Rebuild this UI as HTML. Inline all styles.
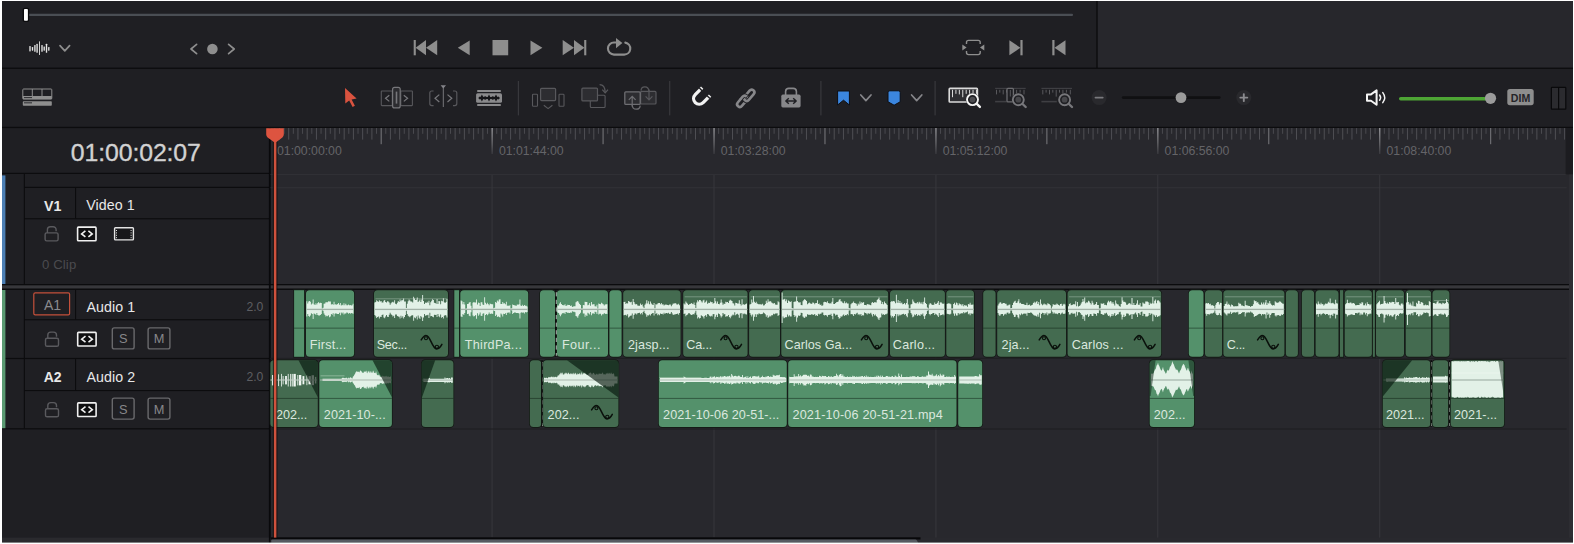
<!DOCTYPE html>
<html lang="en">
<head>
<meta charset="utf-8">
<title>Timeline</title>
<style>
html,body{margin:0;padding:0;background:#ffffff;}
body{width:1574px;height:544px;overflow:hidden;position:relative;font-family:'Liberation Sans', sans-serif;}
svg{position:absolute;left:0;top:0;display:block;}
svg text{font-family:'Liberation Sans', sans-serif;white-space:pre;}
</style>
</head>
<body>
<svg width="1574" height="544" viewBox="0 0 1574 544">
<g id="backgrounds">
<rect x="0" y="0" width="1574" height="544" fill="#ffffff" />
<rect x="2" y="1" width="1571" height="542" fill="#1f1f23" />
<rect x="1097" y="1" width="476" height="67" fill="#27272c" />
<rect x="1096.3" y="1" width="1.4" height="67" fill="#0c0c0e" />
<rect x="2" y="67.6" width="1571" height="1.3" fill="#0c0c0e" />
<rect x="2" y="126.8" width="1571" height="1.3" fill="#0c0c0e" />
</g>
<g id="transport">
<rect x="28" y="13.7" width="1045" height="2.3" rx="1" fill="#4a4e54" />
<rect x="22.6" y="7.8" width="6.6" height="14.2" rx="2" fill="#0b0b0d" />
<rect x="24" y="9.1" width="3.9" height="11.6" rx="0.8" fill="#ffffff" />
<rect x="29.325" y="46.1" width="1.35" height="5.4" rx="0.4" fill="#e6e6e6" />
<rect x="31.825" y="47.1" width="1.35" height="3.6" rx="0.4" fill="#e6e6e6" />
<rect x="34.225" y="45.1" width="1.35" height="6.7" rx="0.4" fill="#e6e6e6" />
<rect x="36.425" y="43.8" width="1.35" height="9" rx="0.4" fill="#e6e6e6" />
<rect x="39.05" y="41.2" width="0.9" height="13.9" rx="0.4" fill="#e6e6e6" />
<rect x="41.325" y="45.1" width="1.35" height="6.7" rx="0.4" fill="#e6e6e6" />
<rect x="43.525" y="46.4" width="1.35" height="4.3" rx="0.4" fill="#e6e6e6" />
<rect x="45.825" y="43.8" width="1.35" height="9" rx="0.4" fill="#e6e6e6" />
<rect x="48.125" y="47.1" width="1.35" height="3.6" rx="0.4" fill="#e6e6e6" />
<path d="M60 45.6 L64.8 50.9 L69.6 45.6" fill="none" stroke="#8e8e8e" stroke-width="1.7" stroke-linecap="round" stroke-linejoin="round"/>
<path d="M196.6 44.4 L191 49 L196.6 53.6" fill="none" stroke="#8e8e8e" stroke-width="1.7" stroke-linecap="round" stroke-linejoin="round"/>
<circle cx="212.4" cy="49" r="5.3" fill="#8e8e8e"/>
<path d="M228.6 44.4 L234.2 49 L228.6 53.6" fill="none" stroke="#8e8e8e" stroke-width="1.7" stroke-linecap="round" stroke-linejoin="round"/>
<rect x="413.7" y="40" width="2.1" height="15.3" fill="#8e8e8e" />
<path d="M426 40 L426 55.3 L415.6 47.65 Z" fill="#8e8e8e" stroke="none" stroke-width="1" />
<path d="M437.2 40 L437.2 55.3 L426 47.65 Z" fill="#8e8e8e" stroke="none" stroke-width="1" />
<path d="M469.7 40.4 L469.7 55.3 L457.8 47.85 Z" fill="#8e8e8e" stroke="none" stroke-width="1" />
<rect x="492.5" y="40" width="15.7" height="15.3" fill="#8e8e8e" />
<path d="M530.5 40.4 L530.5 55.3 L542.4 47.85 Z" fill="#8e8e8e" stroke="none" stroke-width="1" />
<path d="M562.7 40 L562.7 55.3 L574 47.65 Z" fill="#8e8e8e" stroke="none" stroke-width="1" />
<path d="M574 40 L574 55.3 L584.4 47.65 Z" fill="#8e8e8e" stroke="none" stroke-width="1" />
<rect x="584.2" y="40" width="2.1" height="15.3" fill="#8e8e8e" />
<path d="M616.4 42.5 H614 A6.05 6.05 0 0 0 614 54.6 H624.1 A6.05 6.05 0 0 0 625.3 42.6" fill="none" stroke="#8e8e8e" stroke-width="2.1" stroke-linecap="round"/>
<path d="M616 37.9 L622.4 43 L616 48.2 Z" fill="#8e8e8e" stroke="none" stroke-width="1" />
<path d="M966.5 44 V42.4 A2 2 0 0 1 968.5 40.4 H978.2 A2 2 0 0 1 980.2 42.4 V44 M966.5 51 V52.6 A2 2 0 0 0 968.5 54.6 H978.2 A2 2 0 0 0 980.2 52.6 V51" fill="none" stroke="#8e8e8e" stroke-width="1.4" />
<path d="M962.3 44.6 L966.6 47.5 L962.3 50.4 Z" fill="#8e8e8e" stroke="none" stroke-width="1" />
<path d="M984.3 44.6 L980 47.5 L984.3 50.4 Z" fill="#8e8e8e" stroke="none" stroke-width="1" />
<path d="M1009.4 40.2 L1009.4 55.3 L1020.4 47.75 Z" fill="#8e8e8e" stroke="none" stroke-width="1" />
<rect x="1020.4" y="40" width="2.2" height="15.3" fill="#8e8e8e" />
<rect x="1052.3" y="40" width="2.2" height="15.3" fill="#8e8e8e" />
<path d="M1065.5 40.2 L1065.5 55.3 L1054.5 47.75 Z" fill="#8e8e8e" stroke="none" stroke-width="1" />
</g>
<g id="toolbar">
<rect x="22.8" y="89" width="29" height="10" rx="0.8" fill="none" stroke="#8e8e8e" stroke-width="1"/>
<line x1="32.3" y1="89" x2="32.3" y2="96" stroke="#8e8e8e" stroke-width="1" />
<line x1="42" y1="89" x2="42" y2="96" stroke="#8e8e8e" stroke-width="1" />
<rect x="22.8" y="96" width="29" height="3.2" fill="#8e8e8e" />
<rect x="24" y="97.2" width="8" height="0.9" fill="#1f1f23" />
<rect x="22.8" y="101.3" width="29" height="4.4" rx="0.8" fill="#8e8e8e" />
<rect x="24" y="102.4" width="8" height="0.9" fill="#1f1f23" />
<path d="M345 88 L345.3 103.6 L349.2 100.4 L352.6 107 L354.9 105.8 L351.6 99.4 L356.6 98.6 Z" fill="#d9533f" stroke="none" stroke-width="1" />
<rect x="381.3" y="91" width="11" height="14.6" rx="0.6" fill="none" stroke="#58585c" stroke-width="1.1"/>
<rect x="400.8" y="91" width="11.6" height="14.6" rx="0.6" fill="none" stroke="#58585c" stroke-width="1.1"/>
<rect x="392.6" y="87.3" width="7.6" height="20.6" rx="2" fill="#2c2c30" stroke="#77777b" stroke-width="1.2"/>
<rect x="395.7" y="91.6" width="1.6" height="12" fill="#77777b" />
<path d="M389.3 95.2 L385.5 98.3 L389.3 101.4" fill="none" stroke="#77777b" stroke-width="1.2" />
<path d="M403.8 95.2 L407.6 98.3 L403.8 101.4" fill="none" stroke="#77777b" stroke-width="1.2" />
<path d="M433.6 91 H431.8 A2 2 0 0 0 429.8 93 V103.6 A2 2 0 0 0 431.8 105.6 H433.6" fill="none" stroke="#58585c" stroke-width="1.2" />
<path d="M453 91 H454.8 A2 2 0 0 1 456.8 93 V103.6 A2 2 0 0 1 454.8 105.6 H453" fill="none" stroke="#58585c" stroke-width="1.2" />
<path d="M439.3 94.6 L435 98.3 L439.3 102" fill="none" stroke="#77777b" stroke-width="1.2" />
<path d="M447.5 94.6 L451.8 98.3 L447.5 102" fill="none" stroke="#77777b" stroke-width="1.2" />
<line x1="443.3" y1="87" x2="443.3" y2="107" stroke="#77777b" stroke-width="1" />
<path d="M440.6 85.2 H446 L443.3 88.6 Z" fill="#85858a" stroke="none" stroke-width="1" />
<rect x="477.2" y="89.9" width="23.6" height="2" rx="0.5" fill="#8a8a8c" />
<rect x="477.2" y="104.1" width="23.6" height="2" rx="0.5" fill="#8a8a8c" />
<rect x="476.1" y="93.2" width="25.9" height="9.6" rx="1.6" fill="#8a8a8c" />
<path d="M478.20 98.00 L479.70 96.50 L480.50 96.90 L481.90 94.50 L483.30 96.90 L484.60 96.40 L485.60 96.20 L486.60 97.00 L487.70 96.90 L489.00 94.50 L490.30 96.90 L491.40 97.00 L492.40 96.20 L493.40 96.40 L494.60 96.90 L496.00 94.50 L497.40 96.90 L498.50 96.50 L500.00 98.00 L500.00 98.00 L498.50 99.50 L497.40 99.10 L496.00 101.50 L494.60 99.10 L493.40 99.60 L492.40 99.80 L491.40 99.00 L490.30 99.10 L489.00 101.50 L487.70 99.10 L486.60 99.00 L485.60 99.80 L484.60 99.60 L483.30 99.10 L481.90 101.50 L480.50 99.10 L479.70 99.50 L478.20 98.00 Z" fill="#151518" stroke="none" stroke-width="1" />
<rect x="517.8" y="81" width="1.2" height="34.4" fill="#38383c" />
<rect x="669.1" y="81" width="1.2" height="34.4" fill="#38383c" />
<rect x="820.3" y="81" width="1.2" height="34.4" fill="#38383c" />
<rect x="934.5" y="81" width="1.2" height="34.4" fill="#38383c" />
<rect x="540.6" y="88.3" width="15" height="12.3" rx="1" fill="#2d2d31" stroke="#58585c" stroke-width="1.2"/>
<rect x="532.5" y="94.2" width="5" height="12" rx="0.8" fill="none" stroke="#58585c" stroke-width="1.1"/>
<rect x="559" y="94.2" width="5" height="12" rx="0.8" fill="none" stroke="#58585c" stroke-width="1.1"/>
<path d="M543.8 105.2 L548.1 108.6 L552.4 105.2" fill="none" stroke="#58585c" stroke-width="1.2" />
<rect x="590.3" y="95.3" width="14.8" height="12.2" rx="1" fill="none" stroke="#58585c" stroke-width="1.1"/>
<rect x="581.9" y="88.1" width="15.6" height="12.8" rx="1" fill="#2d2d31" stroke="#58585c" stroke-width="1.2"/>
<path d="M599.6 84.6 Q605 84.6 605.2 92.4" fill="none" stroke="#58585c" stroke-width="1.2" />
<path d="M602.3 89.6 L605.2 92.8 L608 89.6" fill="none" stroke="#58585c" stroke-width="1.2" />
<rect x="640.6" y="91.4" width="15.4" height="12.6" rx="1" fill="#2d2d31" stroke="#58585c" stroke-width="1.2"/>
<rect x="624.8" y="91.8" width="15.4" height="12.6" rx="1" fill="#2d2d31" stroke="#6e6e72" stroke-width="1.3"/>
<path d="M632.2 106.6 V96.6 M628.8 99.8 L632.2 96.4 L635.6 99.8" fill="none" stroke="#6e6e72" stroke-width="1.2" />
<path d="M632.2 104.4 Q632.2 109.2 636.4 109.2 Q640 109.2 640.2 105.6" fill="none" stroke="#6e6e72" stroke-width="1.2" />
<path d="M649 89.6 V99.6 M645.6 96.4 L649 99.8 L652.4 96.4" fill="none" stroke="#58585c" stroke-width="1.2" />
<path d="M649 92 Q649 86.8 644.8 86.8 Q641.2 86.8 641 90.6" fill="none" stroke="#58585c" stroke-width="1.2" />
<g transform="translate(700.2 97.6) rotate(45)">
<path d="M-5.6 -8.4 V1.4 A5.6 5.6 0 0 0 5.6 1.4 V-8.4" fill="none" stroke="#f2f2f2" stroke-width="3.3" />
<rect x="-7.6" y="-6.9" width="4" height="1.4" fill="#1f1f23" />
<rect x="3.6" y="-6.9" width="4" height="1.4" fill="#1f1f23" />
</g>
<g transform="translate(742.3 101.3) rotate(-50)">
<rect x="-6.5" y="-2.7" width="13" height="5.4" rx="2.7" fill="none" stroke="#87878a" stroke-width="2.6"/>
</g>
<g transform="translate(749.2 95.3) rotate(-50)">
<rect x="-6.5" y="-2.7" width="13" height="5.4" rx="2.7" fill="none" stroke="#1f1f23" stroke-width="4.6"/>
<rect x="-6.5" y="-2.7" width="13" height="5.4" rx="2.7" fill="none" stroke="#87878a" stroke-width="2.6"/>
</g>
<g transform="translate(742.3 101.3) rotate(-50)">
<path d="M1.4 -2.7 H3.8 A2.7 2.7 0 0 1 6.5 0" fill="none" stroke="#1f1f23" stroke-width="4.4" />
<path d="M0.4 -2.7 H3.8 A2.7 2.7 0 0 1 6.5 0 V0.4" fill="none" stroke="#87878a" stroke-width="2.6" />
</g>
<rect x="781.3" y="94.6" width="19.3" height="12.8" rx="1.6" fill="#87878a" />
<path d="M785.6 95 V91.4 A3.2 3.2 0 0 1 788.8 88.4 H793.2 A3.2 3.2 0 0 1 796.4 91.4 V95" fill="none" stroke="#87878a" stroke-width="1.6" />
<path d="M786.2 101 H795.8 M788.8 98.2 L785.8 101 L788.8 103.8 M793.2 98.2 L796.2 101 L793.2 103.8" fill="none" stroke="#1f1f23" stroke-width="1.4" stroke-linejoin="round"/>
<path d="M837.6 91 H849.4 V105 L843.5 100.2 L837.6 105 Z" fill="#3b86df" stroke="#0e0e12" stroke-width="1" />
<path d="M860.8 95 L865.9 100.6 L871 95" fill="none" stroke="#86868a" stroke-width="1.7" stroke-linecap="round" stroke-linejoin="round"/>
<path d="M888 92.6 A1.8 1.8 0 0 1 889.8 90.8 H898.4 A1.8 1.8 0 0 1 900.2 92.6 V101.8 L894.1 105.2 L888 101.8 Z" fill="#3b86df" stroke="#0e0e12" stroke-width="1" />
<path d="M911.6 95 L916.7 100.6 L921.8 95" fill="none" stroke="#86868a" stroke-width="1.7" stroke-linecap="round" stroke-linejoin="round"/>
<rect x="949.2" y="88.4" width="28.2" height="13.6" rx="0.8" fill="#2e2e32" stroke="#dadada" stroke-width="1.6"/>
<rect x="952" y="89.8" width="1" height="7.4" fill="#dadada" />
<rect x="955.42" y="89.8" width="1" height="4" fill="#dadada" />
<rect x="958.84" y="89.8" width="1" height="4.6" fill="#dadada" />
<rect x="962.26" y="89.8" width="1" height="7.4" fill="#dadada" />
<rect x="965.68" y="89.8" width="1" height="4" fill="#dadada" />
<rect x="969.1" y="89.8" width="1" height="4.4" fill="#dadada" />
<rect x="972.52" y="89.8" width="1" height="4" fill="#dadada" />
<rect x="975.94" y="89.8" width="1" height="4" fill="#dadada" />
<circle cx="972.5" cy="99.6" r="6.6" fill="#1f1f23"/>
<circle cx="972.5" cy="99.6" r="5.5" fill="none" stroke="#f4f4f4" stroke-width="1.9"/>
<circle cx="972.5" cy="99.6" r="2.9" fill="#4c4c50"/>
<line x1="976.8" y1="103.9" x2="979.9" y2="106.9" stroke="#f4f4f4" stroke-width="2.4" stroke-linecap="round"/>
<rect x="995.1" y="87.8" width="30.6" height="1.2" fill="#3f3f43" />
<rect x="996" y="89.8" width="1" height="4.6" fill="#58585c" />
<rect x="999.3" y="89.8" width="1" height="2.8" fill="#58585c" />
<rect x="1002.7" y="89.8" width="1" height="4.6" fill="#58585c" />
<rect x="1006" y="89.8" width="1" height="2.8" fill="#58585c" />
<rect x="1009.4" y="89.8" width="1" height="6.8" fill="#58585c" />
<rect x="1012.7" y="89.8" width="1" height="2.8" fill="#58585c" />
<rect x="1016.1" y="89.8" width="1" height="4.6" fill="#58585c" />
<rect x="1019.6" y="89.8" width="1" height="2.8" fill="#58585c" />
<rect x="1023.5" y="89.8" width="1" height="4.6" fill="#58585c" />
<rect x="995.1" y="100.8" width="11.5" height="1.6" fill="#3f3f43" />
<rect x="1007" y="88.3" width="6.4" height="13.6" rx="1" fill="#1f1f23" stroke="#6c6c70" stroke-width="1.3"/>
<rect x="1009.8" y="90" width="1" height="6.5" fill="#58585c" />
<circle cx="1018.3" cy="99.7" r="6.6" fill="#1f1f23"/>
<circle cx="1018.3" cy="99.7" r="5.5" fill="none" stroke="#77777b" stroke-width="1.9"/>
<circle cx="1018.3" cy="99.7" r="2.9" fill="#47474b"/>
<line x1="1022.6" y1="104" x2="1025.7" y2="107" stroke="#77777b" stroke-width="2.4" stroke-linecap="round"/>
<rect x="1041.4" y="87.8" width="30.6" height="1.2" fill="#3f3f43" />
<rect x="1042.3" y="89.8" width="1" height="4.6" fill="#58585c" />
<rect x="1045.6" y="89.8" width="1" height="2.8" fill="#58585c" />
<rect x="1049" y="89.8" width="1" height="4.6" fill="#58585c" />
<rect x="1052.3" y="89.8" width="1" height="2.8" fill="#58585c" />
<rect x="1055.7" y="89.8" width="1" height="6.8" fill="#58585c" />
<rect x="1059" y="89.8" width="1" height="2.8" fill="#58585c" />
<rect x="1062.4" y="89.8" width="1" height="4.6" fill="#58585c" />
<rect x="1065.9" y="89.8" width="1" height="2.8" fill="#58585c" />
<rect x="1069.8" y="89.8" width="1" height="4.6" fill="#58585c" />
<rect x="1041.4" y="100.8" width="15.4" height="1.6" fill="#3f3f43" />
<circle cx="1064.6" cy="99.7" r="6.6" fill="#1f1f23"/>
<circle cx="1064.6" cy="99.7" r="5.5" fill="none" stroke="#77777b" stroke-width="1.9"/>
<circle cx="1064.6" cy="99.7" r="2.9" fill="#47474b"/>
<line x1="1068.9" y1="104" x2="1072" y2="107" stroke="#77777b" stroke-width="2.4" stroke-linecap="round"/>
<circle cx="1099.1" cy="97.6" r="7.5" fill="#29292d"/>
<rect x="1094.6" y="96.8" width="9" height="1.7" rx="0.8" fill="#7a7a7e" />
<rect x="1121.8" y="96.2" width="98.8" height="2.8" rx="1.4" fill="#101012" />
<circle cx="1181" cy="97.6" r="5.4" fill="#9b9b9b"/>
<circle cx="1243.8" cy="97.6" r="7.5" fill="#29292d"/>
<rect x="1239.4" y="96.7" width="8.8" height="1.9" rx="0.8" fill="#8a8a8e" />
<rect x="1242.85" y="93.2" width="1.9" height="8.8" rx="0.8" fill="#8a8a8e" />
<path d="M1367 94.4 H1371 L1376.6 90.4 V104.8 L1371 100.8 H1367 Z" fill="none" stroke="#f4f4f4" stroke-width="2" stroke-linejoin="round"/>
<path d="M1379.6 95 Q1381.6 97.6 1379.6 100.2" fill="none" stroke="#f4f4f4" stroke-width="1.5" stroke-linecap="round"/>
<path d="M1382.8 92.6 Q1386.6 97.6 1382.8 102.6" fill="none" stroke="#f4f4f4" stroke-width="1.5" stroke-linecap="round"/>
<rect x="1399" y="96.9" width="89" height="3.5" rx="1.7" fill="#4ea535" />
<circle cx="1490.5" cy="98.3" r="5.6" fill="#9b9b9b"/>
<rect x="1507.3" y="89" width="26.4" height="16.2" rx="2.6" fill="#8d8d8d" />
<text x="1520.5" y="102.2" font-size="10.6" fill="#242428" font-weight="bold" letter-spacing="0.1" text-anchor="middle" >DIM</text>
<rect x="1551.4" y="87.4" width="14.4" height="21.8" rx="0.5" fill="#2b2b2f" stroke="#09090b" stroke-width="1.2"/>
<line x1="1558.6" y1="87.4" x2="1558.6" y2="109.2" stroke="#09090b" stroke-width="1.2" />
</g>
<g id="timeline-bg">
<rect x="270.5" y="128" width="1302.5" height="415" fill="#28282d" />
</g>
<g id="track-headers">
<text x="135.8" y="160.9" font-size="24.8" fill="#d2d2d2" font-weight="normal" letter-spacing="-0.1" text-anchor="middle" stroke="#d2d2d2" stroke-width="0.35">01:00:02:07</text>
<rect x="2" y="172.8" width="267.5" height="1.2" fill="#0c0c0e" />
<rect x="24" y="186.8" width="245.5" height="1.2" fill="#0c0c0e" />
<rect x="24" y="218.2" width="245.5" height="1.1" fill="#0c0c0e" />
<rect x="24" y="319.2" width="245.5" height="1.1" fill="#0c0c0e" />
<rect x="2" y="357.9" width="267.5" height="1.2" fill="#0c0c0e" />
<rect x="24" y="390" width="245.5" height="1.1" fill="#0c0c0e" />
<rect x="2" y="428.2" width="267.5" height="1.2" fill="#0c0c0e" />
<rect x="23.8" y="174" width="1.1" height="110" fill="#0c0c0e" />
<rect x="23.8" y="290" width="1.1" height="138.5" fill="#0c0c0e" />
<rect x="75" y="188" width="1.1" height="30.5" fill="#0c0c0e" />
<rect x="75" y="290" width="1.1" height="29.5" fill="#0c0c0e" />
<rect x="75" y="359" width="1.1" height="31.2" fill="#0c0c0e" />
<rect x="2" y="175.4" width="3.4" height="108.6" fill="#4c7fb4" />
<rect x="2" y="290" width="3.4" height="138.2" fill="#5a9a72" />
<rect x="2" y="537.6" width="267.5" height="5.4" fill="#2a2a2e" />
<text x="52.8" y="211.3" font-size="14.2" fill="#e8e8e8" font-weight="bold" text-anchor="middle" >V1</text>
<text x="86.2" y="210.2" font-size="14.2" fill="#e8e8e8" font-weight="normal" letter-spacing="0.1" >Video 1</text>
<text x="42" y="269.3" font-size="13.2" fill="#4b4b4f" font-weight="normal" letter-spacing="0.1" >0 Clip</text>
<rect x="45.1" y="232.9" width="13" height="8" rx="1.6" fill="none" stroke="#5a5a5e" stroke-width="1.4"/>
<path d="M47.4 232.9 V229.7 A3 3 0 0 1 50.4 226.7 H53.1 A3 3 0 0 1 56.1 229.7 V231.3" fill="none" stroke="#5a5a5e" stroke-width="1.4" />
<rect x="77.6" y="227.1" width="18.4" height="13.6" rx="0.8" fill="#0f0f11" stroke="#f0f0f0" stroke-width="1.6"/>
<path d="M85.4 230.9 L81.6 233.9 L85.4 236.9" fill="none" stroke="#f0f0f0" stroke-width="1.6" />
<path d="M88.4 230.9 L92.2 233.9 L88.4 236.9" fill="none" stroke="#f0f0f0" stroke-width="1.6" />
<rect x="114.6" y="227.7" width="18.8" height="12.2" rx="0.8" fill="#17171a" stroke="#e4e4e4" stroke-width="1.4"/>
<rect x="116" y="230" width="1" height="1" fill="#e4e4e4" />
<rect x="130.6" y="230" width="1" height="1" fill="#e4e4e4" />
<rect x="116" y="232.4" width="1" height="1" fill="#e4e4e4" />
<rect x="130.6" y="232.4" width="1" height="1" fill="#e4e4e4" />
<rect x="116" y="234.8" width="1" height="1" fill="#e4e4e4" />
<rect x="130.6" y="234.8" width="1" height="1" fill="#e4e4e4" />
<rect x="116" y="237.2" width="1" height="1" fill="#e4e4e4" />
<rect x="130.6" y="237.2" width="1" height="1" fill="#e4e4e4" />
<rect x="2" y="284" width="1571" height="6" fill="#0b0b0d" />
<rect x="2" y="285.3" width="1571" height="3.2" fill="#37373b" />
<rect x="33.8" y="292.9" width="35.8" height="22" rx="1.4" fill="none" stroke="#c4503b" stroke-width="1.2"/>
<text x="52.6" y="309.9" font-size="14" fill="#8b8b8e" font-weight="normal" text-anchor="middle" >A1</text>
<text x="86.4" y="311.6" font-size="14.2" fill="#e8e8e8" font-weight="normal" letter-spacing="0.1" >Audio 1</text>
<text x="263.4" y="310.8" font-size="12.2" fill="#5e5e62" font-weight="normal" text-anchor="end" >2.0</text>
<rect x="45.5" y="338.3" width="13" height="8" rx="1.6" fill="none" stroke="#5a5a5e" stroke-width="1.4"/>
<path d="M47.8 338.3 V335.1 A3 3 0 0 1 50.8 332.1 H53.5 A3 3 0 0 1 56.5 335.1 V336.7" fill="none" stroke="#5a5a5e" stroke-width="1.4" />
<rect x="77.7" y="332.4" width="18.4" height="13.6" rx="0.8" fill="#0f0f11" stroke="#f0f0f0" stroke-width="1.6"/>
<path d="M85.5 336.2 L81.7 339.2 L85.5 342.2" fill="none" stroke="#f0f0f0" stroke-width="1.6" />
<path d="M88.5 336.2 L92.3 339.2 L88.5 342.2" fill="none" stroke="#f0f0f0" stroke-width="1.6" />
<rect x="112.3" y="327.9" width="21.8" height="21" rx="2" fill="none" stroke="#69696c" stroke-width="1.4"/>
<text x="123.2" y="343.4" font-size="12.8" fill="#87878a" font-weight="normal" text-anchor="middle" >S</text>
<rect x="148.1" y="327.9" width="21.8" height="21" rx="2" fill="none" stroke="#69696c" stroke-width="1.4"/>
<text x="159" y="343.4" font-size="12.8" fill="#87878a" font-weight="normal" text-anchor="middle" >M</text>
<text x="52.6" y="382.2" font-size="14" fill="#e8e8e8" font-weight="bold" text-anchor="middle" >A2</text>
<text x="86.4" y="382.2" font-size="14.2" fill="#e8e8e8" font-weight="normal" letter-spacing="0.1" >Audio 2</text>
<text x="263.4" y="381.4" font-size="12.2" fill="#5e5e62" font-weight="normal" text-anchor="end" >2.0</text>
<rect x="45.5" y="408.8" width="13" height="8" rx="1.6" fill="none" stroke="#5a5a5e" stroke-width="1.4"/>
<path d="M47.8 408.8 V405.6 A3 3 0 0 1 50.8 402.6 H53.5 A3 3 0 0 1 56.5 405.6 V407.2" fill="none" stroke="#5a5a5e" stroke-width="1.4" />
<rect x="77.7" y="402.9" width="18.4" height="13.6" rx="0.8" fill="#0f0f11" stroke="#f0f0f0" stroke-width="1.6"/>
<path d="M85.5 406.7 L81.7 409.7 L85.5 412.7" fill="none" stroke="#f0f0f0" stroke-width="1.6" />
<path d="M88.5 406.7 L92.3 409.7 L88.5 412.7" fill="none" stroke="#f0f0f0" stroke-width="1.6" />
<rect x="112.3" y="398.1" width="21.8" height="21" rx="2" fill="none" stroke="#69696c" stroke-width="1.4"/>
<text x="123.2" y="413.6" font-size="12.8" fill="#87878a" font-weight="normal" text-anchor="middle" >S</text>
<rect x="148.1" y="398.1" width="21.8" height="21" rx="2" fill="none" stroke="#69696c" stroke-width="1.4"/>
<text x="159" y="413.6" font-size="12.8" fill="#87878a" font-weight="normal" text-anchor="middle" >M</text>
<rect x="268.9" y="128" width="1.8" height="415" fill="#09090b" />
</g>
<g id="ruler">
<defs><linearGradient id="majg" x1="0" y1="0" x2="0" y2="1"><stop offset="0" stop-color="#9a9a9e"/><stop offset="0.55" stop-color="#6a6a6e"/><stop offset="1" stop-color="#3a3a3f"/></linearGradient></defs>
<rect x="274.323" y="128" width="1" height="5.8" fill="#4a4a4f" />
<rect x="278.946" y="128" width="1" height="11.6" fill="#4f4f54" />
<rect x="283.569" y="128" width="1" height="5.8" fill="#4a4a4f" />
<rect x="288.192" y="128" width="1" height="11.6" fill="#4f4f54" />
<rect x="292.815" y="128" width="1" height="5.8" fill="#4a4a4f" />
<rect x="297.438" y="128" width="1" height="11.6" fill="#4f4f54" />
<rect x="302.06" y="128" width="1" height="5.8" fill="#4a4a4f" />
<rect x="306.683" y="128" width="1" height="11.6" fill="#4f4f54" />
<rect x="311.306" y="128" width="1" height="5.8" fill="#4a4a4f" />
<rect x="315.929" y="128" width="1" height="11.6" fill="#4f4f54" />
<rect x="320.552" y="128" width="1" height="5.8" fill="#4a4a4f" />
<rect x="325.175" y="128" width="1" height="11.6" fill="#4f4f54" />
<rect x="329.798" y="128" width="1" height="5.8" fill="#4a4a4f" />
<rect x="334.421" y="128" width="1" height="11.6" fill="#4f4f54" />
<rect x="339.044" y="128" width="1" height="5.8" fill="#4a4a4f" />
<rect x="343.667" y="128" width="1" height="11.6" fill="#4f4f54" />
<rect x="348.29" y="128" width="1" height="5.8" fill="#4a4a4f" />
<rect x="352.913" y="128" width="1" height="11.6" fill="#4f4f54" />
<rect x="357.535" y="128" width="1" height="5.8" fill="#4a4a4f" />
<rect x="362.158" y="128" width="1" height="11.6" fill="#4f4f54" />
<rect x="366.781" y="128" width="1" height="5.8" fill="#4a4a4f" />
<rect x="371.404" y="128" width="1" height="11.6" fill="#4f4f54" />
<rect x="376.027" y="128" width="1" height="5.8" fill="#4a4a4f" />
<rect x="380.65" y="128" width="1.05" height="16.2" fill="#77777b" />
<rect x="385.273" y="128" width="1" height="5.8" fill="#4a4a4f" />
<rect x="389.896" y="128" width="1" height="11.6" fill="#4f4f54" />
<rect x="394.519" y="128" width="1" height="5.8" fill="#4a4a4f" />
<rect x="399.142" y="128" width="1" height="11.6" fill="#4f4f54" />
<rect x="403.765" y="128" width="1" height="5.8" fill="#4a4a4f" />
<rect x="408.387" y="128" width="1" height="11.6" fill="#4f4f54" />
<rect x="413.01" y="128" width="1" height="5.8" fill="#4a4a4f" />
<rect x="417.633" y="128" width="1" height="11.6" fill="#4f4f54" />
<rect x="422.256" y="128" width="1" height="5.8" fill="#4a4a4f" />
<rect x="426.879" y="128" width="1" height="11.6" fill="#4f4f54" />
<rect x="431.502" y="128" width="1" height="5.8" fill="#4a4a4f" />
<rect x="436.125" y="128" width="1" height="11.6" fill="#4f4f54" />
<rect x="440.748" y="128" width="1" height="5.8" fill="#4a4a4f" />
<rect x="445.371" y="128" width="1" height="11.6" fill="#4f4f54" />
<rect x="449.994" y="128" width="1" height="5.8" fill="#4a4a4f" />
<rect x="454.617" y="128" width="1" height="11.6" fill="#4f4f54" />
<rect x="459.24" y="128" width="1" height="5.8" fill="#4a4a4f" />
<rect x="463.862" y="128" width="1" height="11.6" fill="#4f4f54" />
<rect x="468.485" y="128" width="1" height="5.8" fill="#4a4a4f" />
<rect x="473.108" y="128" width="1" height="11.6" fill="#4f4f54" />
<rect x="477.731" y="128" width="1" height="5.8" fill="#4a4a4f" />
<rect x="482.354" y="128" width="1" height="11.6" fill="#4f4f54" />
<rect x="486.977" y="128" width="1" height="5.8" fill="#4a4a4f" />
<rect x="491.5" y="128" width="1.3" height="26" fill="url(#majg)" />
<rect x="496.223" y="128" width="1" height="5.8" fill="#4a4a4f" />
<rect x="500.846" y="128" width="1" height="11.6" fill="#4f4f54" />
<rect x="505.469" y="128" width="1" height="5.8" fill="#4a4a4f" />
<rect x="510.092" y="128" width="1" height="11.6" fill="#4f4f54" />
<rect x="514.715" y="128" width="1" height="5.8" fill="#4a4a4f" />
<rect x="519.337" y="128" width="1" height="11.6" fill="#4f4f54" />
<rect x="523.96" y="128" width="1" height="5.8" fill="#4a4a4f" />
<rect x="528.583" y="128" width="1" height="11.6" fill="#4f4f54" />
<rect x="533.206" y="128" width="1" height="5.8" fill="#4a4a4f" />
<rect x="537.829" y="128" width="1" height="11.6" fill="#4f4f54" />
<rect x="542.452" y="128" width="1" height="5.8" fill="#4a4a4f" />
<rect x="547.075" y="128" width="1" height="11.6" fill="#4f4f54" />
<rect x="551.698" y="128" width="1" height="5.8" fill="#4a4a4f" />
<rect x="556.321" y="128" width="1" height="11.6" fill="#4f4f54" />
<rect x="560.944" y="128" width="1" height="5.8" fill="#4a4a4f" />
<rect x="565.567" y="128" width="1" height="11.6" fill="#4f4f54" />
<rect x="570.19" y="128" width="1" height="5.8" fill="#4a4a4f" />
<rect x="574.812" y="128" width="1" height="11.6" fill="#4f4f54" />
<rect x="579.435" y="128" width="1" height="5.8" fill="#4a4a4f" />
<rect x="584.058" y="128" width="1" height="11.6" fill="#4f4f54" />
<rect x="588.681" y="128" width="1" height="5.8" fill="#4a4a4f" />
<rect x="593.304" y="128" width="1" height="11.6" fill="#4f4f54" />
<rect x="597.927" y="128" width="1" height="5.8" fill="#4a4a4f" />
<rect x="602.55" y="128" width="1.05" height="16.2" fill="#77777b" />
<rect x="607.173" y="128" width="1" height="5.8" fill="#4a4a4f" />
<rect x="611.796" y="128" width="1" height="11.6" fill="#4f4f54" />
<rect x="616.419" y="128" width="1" height="5.8" fill="#4a4a4f" />
<rect x="621.042" y="128" width="1" height="11.6" fill="#4f4f54" />
<rect x="625.665" y="128" width="1" height="5.8" fill="#4a4a4f" />
<rect x="630.288" y="128" width="1" height="11.6" fill="#4f4f54" />
<rect x="634.91" y="128" width="1" height="5.8" fill="#4a4a4f" />
<rect x="639.533" y="128" width="1" height="11.6" fill="#4f4f54" />
<rect x="644.156" y="128" width="1" height="5.8" fill="#4a4a4f" />
<rect x="648.779" y="128" width="1" height="11.6" fill="#4f4f54" />
<rect x="653.402" y="128" width="1" height="5.8" fill="#4a4a4f" />
<rect x="658.025" y="128" width="1" height="11.6" fill="#4f4f54" />
<rect x="662.648" y="128" width="1" height="5.8" fill="#4a4a4f" />
<rect x="667.271" y="128" width="1" height="11.6" fill="#4f4f54" />
<rect x="671.894" y="128" width="1" height="5.8" fill="#4a4a4f" />
<rect x="676.517" y="128" width="1" height="11.6" fill="#4f4f54" />
<rect x="681.14" y="128" width="1" height="5.8" fill="#4a4a4f" />
<rect x="685.763" y="128" width="1" height="11.6" fill="#4f4f54" />
<rect x="690.385" y="128" width="1" height="5.8" fill="#4a4a4f" />
<rect x="695.008" y="128" width="1" height="11.6" fill="#4f4f54" />
<rect x="699.631" y="128" width="1" height="5.8" fill="#4a4a4f" />
<rect x="704.254" y="128" width="1" height="11.6" fill="#4f4f54" />
<rect x="708.877" y="128" width="1" height="5.8" fill="#4a4a4f" />
<rect x="713.4" y="128" width="1.3" height="26" fill="url(#majg)" />
<rect x="718.123" y="128" width="1" height="5.8" fill="#4a4a4f" />
<rect x="722.746" y="128" width="1" height="11.6" fill="#4f4f54" />
<rect x="727.369" y="128" width="1" height="5.8" fill="#4a4a4f" />
<rect x="731.992" y="128" width="1" height="11.6" fill="#4f4f54" />
<rect x="736.615" y="128" width="1" height="5.8" fill="#4a4a4f" />
<rect x="741.237" y="128" width="1" height="11.6" fill="#4f4f54" />
<rect x="745.86" y="128" width="1" height="5.8" fill="#4a4a4f" />
<rect x="750.483" y="128" width="1" height="11.6" fill="#4f4f54" />
<rect x="755.106" y="128" width="1" height="5.8" fill="#4a4a4f" />
<rect x="759.729" y="128" width="1" height="11.6" fill="#4f4f54" />
<rect x="764.352" y="128" width="1" height="5.8" fill="#4a4a4f" />
<rect x="768.975" y="128" width="1" height="11.6" fill="#4f4f54" />
<rect x="773.598" y="128" width="1" height="5.8" fill="#4a4a4f" />
<rect x="778.221" y="128" width="1" height="11.6" fill="#4f4f54" />
<rect x="782.844" y="128" width="1" height="5.8" fill="#4a4a4f" />
<rect x="787.467" y="128" width="1" height="11.6" fill="#4f4f54" />
<rect x="792.09" y="128" width="1" height="5.8" fill="#4a4a4f" />
<rect x="796.713" y="128" width="1" height="11.6" fill="#4f4f54" />
<rect x="801.335" y="128" width="1" height="5.8" fill="#4a4a4f" />
<rect x="805.958" y="128" width="1" height="11.6" fill="#4f4f54" />
<rect x="810.581" y="128" width="1" height="5.8" fill="#4a4a4f" />
<rect x="815.204" y="128" width="1" height="11.6" fill="#4f4f54" />
<rect x="819.827" y="128" width="1" height="5.8" fill="#4a4a4f" />
<rect x="824.45" y="128" width="1.05" height="16.2" fill="#77777b" />
<rect x="829.073" y="128" width="1" height="5.8" fill="#4a4a4f" />
<rect x="833.696" y="128" width="1" height="11.6" fill="#4f4f54" />
<rect x="838.319" y="128" width="1" height="5.8" fill="#4a4a4f" />
<rect x="842.942" y="128" width="1" height="11.6" fill="#4f4f54" />
<rect x="847.565" y="128" width="1" height="5.8" fill="#4a4a4f" />
<rect x="852.188" y="128" width="1" height="11.6" fill="#4f4f54" />
<rect x="856.81" y="128" width="1" height="5.8" fill="#4a4a4f" />
<rect x="861.433" y="128" width="1" height="11.6" fill="#4f4f54" />
<rect x="866.056" y="128" width="1" height="5.8" fill="#4a4a4f" />
<rect x="870.679" y="128" width="1" height="11.6" fill="#4f4f54" />
<rect x="875.302" y="128" width="1" height="5.8" fill="#4a4a4f" />
<rect x="879.925" y="128" width="1" height="11.6" fill="#4f4f54" />
<rect x="884.548" y="128" width="1" height="5.8" fill="#4a4a4f" />
<rect x="889.171" y="128" width="1" height="11.6" fill="#4f4f54" />
<rect x="893.794" y="128" width="1" height="5.8" fill="#4a4a4f" />
<rect x="898.417" y="128" width="1" height="11.6" fill="#4f4f54" />
<rect x="903.04" y="128" width="1" height="5.8" fill="#4a4a4f" />
<rect x="907.662" y="128" width="1" height="11.6" fill="#4f4f54" />
<rect x="912.285" y="128" width="1" height="5.8" fill="#4a4a4f" />
<rect x="916.908" y="128" width="1" height="11.6" fill="#4f4f54" />
<rect x="921.531" y="128" width="1" height="5.8" fill="#4a4a4f" />
<rect x="926.154" y="128" width="1" height="11.6" fill="#4f4f54" />
<rect x="930.777" y="128" width="1" height="5.8" fill="#4a4a4f" />
<rect x="935.3" y="128" width="1.3" height="26" fill="url(#majg)" />
<rect x="940.023" y="128" width="1" height="5.8" fill="#4a4a4f" />
<rect x="944.646" y="128" width="1" height="11.6" fill="#4f4f54" />
<rect x="949.269" y="128" width="1" height="5.8" fill="#4a4a4f" />
<rect x="953.892" y="128" width="1" height="11.6" fill="#4f4f54" />
<rect x="958.515" y="128" width="1" height="5.8" fill="#4a4a4f" />
<rect x="963.138" y="128" width="1" height="11.6" fill="#4f4f54" />
<rect x="967.76" y="128" width="1" height="5.8" fill="#4a4a4f" />
<rect x="972.383" y="128" width="1" height="11.6" fill="#4f4f54" />
<rect x="977.006" y="128" width="1" height="5.8" fill="#4a4a4f" />
<rect x="981.629" y="128" width="1" height="11.6" fill="#4f4f54" />
<rect x="986.252" y="128" width="1" height="5.8" fill="#4a4a4f" />
<rect x="990.875" y="128" width="1" height="11.6" fill="#4f4f54" />
<rect x="995.498" y="128" width="1" height="5.8" fill="#4a4a4f" />
<rect x="1000.12" y="128" width="1" height="11.6" fill="#4f4f54" />
<rect x="1004.74" y="128" width="1" height="5.8" fill="#4a4a4f" />
<rect x="1009.37" y="128" width="1" height="11.6" fill="#4f4f54" />
<rect x="1013.99" y="128" width="1" height="5.8" fill="#4a4a4f" />
<rect x="1018.61" y="128" width="1" height="11.6" fill="#4f4f54" />
<rect x="1023.24" y="128" width="1" height="5.8" fill="#4a4a4f" />
<rect x="1027.86" y="128" width="1" height="11.6" fill="#4f4f54" />
<rect x="1032.48" y="128" width="1" height="5.8" fill="#4a4a4f" />
<rect x="1037.1" y="128" width="1" height="11.6" fill="#4f4f54" />
<rect x="1041.73" y="128" width="1" height="5.8" fill="#4a4a4f" />
<rect x="1046.35" y="128" width="1.05" height="16.2" fill="#77777b" />
<rect x="1050.97" y="128" width="1" height="5.8" fill="#4a4a4f" />
<rect x="1055.6" y="128" width="1" height="11.6" fill="#4f4f54" />
<rect x="1060.22" y="128" width="1" height="5.8" fill="#4a4a4f" />
<rect x="1064.84" y="128" width="1" height="11.6" fill="#4f4f54" />
<rect x="1069.46" y="128" width="1" height="5.8" fill="#4a4a4f" />
<rect x="1074.09" y="128" width="1" height="11.6" fill="#4f4f54" />
<rect x="1078.71" y="128" width="1" height="5.8" fill="#4a4a4f" />
<rect x="1083.33" y="128" width="1" height="11.6" fill="#4f4f54" />
<rect x="1087.96" y="128" width="1" height="5.8" fill="#4a4a4f" />
<rect x="1092.58" y="128" width="1" height="11.6" fill="#4f4f54" />
<rect x="1097.2" y="128" width="1" height="5.8" fill="#4a4a4f" />
<rect x="1101.83" y="128" width="1" height="11.6" fill="#4f4f54" />
<rect x="1106.45" y="128" width="1" height="5.8" fill="#4a4a4f" />
<rect x="1111.07" y="128" width="1" height="11.6" fill="#4f4f54" />
<rect x="1115.69" y="128" width="1" height="5.8" fill="#4a4a4f" />
<rect x="1120.32" y="128" width="1" height="11.6" fill="#4f4f54" />
<rect x="1124.94" y="128" width="1" height="5.8" fill="#4a4a4f" />
<rect x="1129.56" y="128" width="1" height="11.6" fill="#4f4f54" />
<rect x="1134.19" y="128" width="1" height="5.8" fill="#4a4a4f" />
<rect x="1138.81" y="128" width="1" height="11.6" fill="#4f4f54" />
<rect x="1143.43" y="128" width="1" height="5.8" fill="#4a4a4f" />
<rect x="1148.05" y="128" width="1" height="11.6" fill="#4f4f54" />
<rect x="1152.68" y="128" width="1" height="5.8" fill="#4a4a4f" />
<rect x="1157.2" y="128" width="1.3" height="26" fill="url(#majg)" />
<rect x="1161.92" y="128" width="1" height="5.8" fill="#4a4a4f" />
<rect x="1166.55" y="128" width="1" height="11.6" fill="#4f4f54" />
<rect x="1171.17" y="128" width="1" height="5.8" fill="#4a4a4f" />
<rect x="1175.79" y="128" width="1" height="11.6" fill="#4f4f54" />
<rect x="1180.41" y="128" width="1" height="5.8" fill="#4a4a4f" />
<rect x="1185.04" y="128" width="1" height="11.6" fill="#4f4f54" />
<rect x="1189.66" y="128" width="1" height="5.8" fill="#4a4a4f" />
<rect x="1194.28" y="128" width="1" height="11.6" fill="#4f4f54" />
<rect x="1198.91" y="128" width="1" height="5.8" fill="#4a4a4f" />
<rect x="1203.53" y="128" width="1" height="11.6" fill="#4f4f54" />
<rect x="1208.15" y="128" width="1" height="5.8" fill="#4a4a4f" />
<rect x="1212.78" y="128" width="1" height="11.6" fill="#4f4f54" />
<rect x="1217.4" y="128" width="1" height="5.8" fill="#4a4a4f" />
<rect x="1222.02" y="128" width="1" height="11.6" fill="#4f4f54" />
<rect x="1226.64" y="128" width="1" height="5.8" fill="#4a4a4f" />
<rect x="1231.27" y="128" width="1" height="11.6" fill="#4f4f54" />
<rect x="1235.89" y="128" width="1" height="5.8" fill="#4a4a4f" />
<rect x="1240.51" y="128" width="1" height="11.6" fill="#4f4f54" />
<rect x="1245.14" y="128" width="1" height="5.8" fill="#4a4a4f" />
<rect x="1249.76" y="128" width="1" height="11.6" fill="#4f4f54" />
<rect x="1254.38" y="128" width="1" height="5.8" fill="#4a4a4f" />
<rect x="1259" y="128" width="1" height="11.6" fill="#4f4f54" />
<rect x="1263.63" y="128" width="1" height="5.8" fill="#4a4a4f" />
<rect x="1268.25" y="128" width="1.05" height="16.2" fill="#77777b" />
<rect x="1272.87" y="128" width="1" height="5.8" fill="#4a4a4f" />
<rect x="1277.5" y="128" width="1" height="11.6" fill="#4f4f54" />
<rect x="1282.12" y="128" width="1" height="5.8" fill="#4a4a4f" />
<rect x="1286.74" y="128" width="1" height="11.6" fill="#4f4f54" />
<rect x="1291.36" y="128" width="1" height="5.8" fill="#4a4a4f" />
<rect x="1295.99" y="128" width="1" height="11.6" fill="#4f4f54" />
<rect x="1300.61" y="128" width="1" height="5.8" fill="#4a4a4f" />
<rect x="1305.23" y="128" width="1" height="11.6" fill="#4f4f54" />
<rect x="1309.86" y="128" width="1" height="5.8" fill="#4a4a4f" />
<rect x="1314.48" y="128" width="1" height="11.6" fill="#4f4f54" />
<rect x="1319.1" y="128" width="1" height="5.8" fill="#4a4a4f" />
<rect x="1323.73" y="128" width="1" height="11.6" fill="#4f4f54" />
<rect x="1328.35" y="128" width="1" height="5.8" fill="#4a4a4f" />
<rect x="1332.97" y="128" width="1" height="11.6" fill="#4f4f54" />
<rect x="1337.59" y="128" width="1" height="5.8" fill="#4a4a4f" />
<rect x="1342.22" y="128" width="1" height="11.6" fill="#4f4f54" />
<rect x="1346.84" y="128" width="1" height="5.8" fill="#4a4a4f" />
<rect x="1351.46" y="128" width="1" height="11.6" fill="#4f4f54" />
<rect x="1356.09" y="128" width="1" height="5.8" fill="#4a4a4f" />
<rect x="1360.71" y="128" width="1" height="11.6" fill="#4f4f54" />
<rect x="1365.33" y="128" width="1" height="5.8" fill="#4a4a4f" />
<rect x="1369.95" y="128" width="1" height="11.6" fill="#4f4f54" />
<rect x="1374.58" y="128" width="1" height="5.8" fill="#4a4a4f" />
<rect x="1379.1" y="128" width="1.3" height="26" fill="url(#majg)" />
<rect x="1383.82" y="128" width="1" height="5.8" fill="#4a4a4f" />
<rect x="1388.45" y="128" width="1" height="11.6" fill="#4f4f54" />
<rect x="1393.07" y="128" width="1" height="5.8" fill="#4a4a4f" />
<rect x="1397.69" y="128" width="1" height="11.6" fill="#4f4f54" />
<rect x="1402.31" y="128" width="1" height="5.8" fill="#4a4a4f" />
<rect x="1406.94" y="128" width="1" height="11.6" fill="#4f4f54" />
<rect x="1411.56" y="128" width="1" height="5.8" fill="#4a4a4f" />
<rect x="1416.18" y="128" width="1" height="11.6" fill="#4f4f54" />
<rect x="1420.81" y="128" width="1" height="5.8" fill="#4a4a4f" />
<rect x="1425.43" y="128" width="1" height="11.6" fill="#4f4f54" />
<rect x="1430.05" y="128" width="1" height="5.8" fill="#4a4a4f" />
<rect x="1434.68" y="128" width="1" height="11.6" fill="#4f4f54" />
<rect x="1439.3" y="128" width="1" height="5.8" fill="#4a4a4f" />
<rect x="1443.92" y="128" width="1" height="11.6" fill="#4f4f54" />
<rect x="1448.54" y="128" width="1" height="5.8" fill="#4a4a4f" />
<rect x="1453.17" y="128" width="1" height="11.6" fill="#4f4f54" />
<rect x="1457.79" y="128" width="1" height="5.8" fill="#4a4a4f" />
<rect x="1462.41" y="128" width="1" height="11.6" fill="#4f4f54" />
<rect x="1467.04" y="128" width="1" height="5.8" fill="#4a4a4f" />
<rect x="1471.66" y="128" width="1" height="11.6" fill="#4f4f54" />
<rect x="1476.28" y="128" width="1" height="5.8" fill="#4a4a4f" />
<rect x="1480.9" y="128" width="1" height="11.6" fill="#4f4f54" />
<rect x="1485.53" y="128" width="1" height="5.8" fill="#4a4a4f" />
<rect x="1490.15" y="128" width="1.05" height="16.2" fill="#77777b" />
<rect x="1494.77" y="128" width="1" height="5.8" fill="#4a4a4f" />
<rect x="1499.4" y="128" width="1" height="11.6" fill="#4f4f54" />
<rect x="1504.02" y="128" width="1" height="5.8" fill="#4a4a4f" />
<rect x="1508.64" y="128" width="1" height="11.6" fill="#4f4f54" />
<rect x="1513.26" y="128" width="1" height="5.8" fill="#4a4a4f" />
<rect x="1517.89" y="128" width="1" height="11.6" fill="#4f4f54" />
<rect x="1522.51" y="128" width="1" height="5.8" fill="#4a4a4f" />
<rect x="1527.13" y="128" width="1" height="11.6" fill="#4f4f54" />
<rect x="1531.76" y="128" width="1" height="5.8" fill="#4a4a4f" />
<rect x="1536.38" y="128" width="1" height="11.6" fill="#4f4f54" />
<rect x="1541" y="128" width="1" height="5.8" fill="#4a4a4f" />
<rect x="1545.62" y="128" width="1" height="11.6" fill="#4f4f54" />
<rect x="1550.25" y="128" width="1" height="5.8" fill="#4a4a4f" />
<rect x="1554.87" y="128" width="1" height="11.6" fill="#4f4f54" />
<rect x="1559.49" y="128" width="1" height="5.8" fill="#4a4a4f" />
<rect x="1564.12" y="128" width="1" height="11.6" fill="#4f4f54" />
<text x="277" y="154.7" font-size="12.3" fill="#646468" font-weight="normal" letter-spacing="-0.02" >01:00:00:00</text>
<text x="498.9" y="154.7" font-size="12.3" fill="#646468" font-weight="normal" letter-spacing="-0.02" >01:01:44:00</text>
<text x="720.8" y="154.7" font-size="12.3" fill="#646468" font-weight="normal" letter-spacing="-0.02" >01:03:28:00</text>
<text x="942.7" y="154.7" font-size="12.3" fill="#646468" font-weight="normal" letter-spacing="-0.02" >01:05:12:00</text>
<text x="1164.6" y="154.7" font-size="12.3" fill="#646468" font-weight="normal" letter-spacing="-0.02" >01:06:56:00</text>
<text x="1386.5" y="154.7" font-size="12.3" fill="#646468" font-weight="normal" letter-spacing="-0.02" >01:08:40:00</text>
<rect x="270.5" y="174" width="1296" height="1" fill="#303035" />
<rect x="270.5" y="187.2" width="1296" height="1" fill="#323237" />
<rect x="491.6" y="175" width="1" height="109" fill="#37373c" />
<rect x="491.6" y="290" width="1" height="248" fill="#37373c" />
<rect x="713.5" y="175" width="1" height="109" fill="#37373c" />
<rect x="713.5" y="290" width="1" height="248" fill="#37373c" />
<rect x="935.4" y="175" width="1" height="109" fill="#37373c" />
<rect x="935.4" y="290" width="1" height="248" fill="#37373c" />
<rect x="1157.3" y="175" width="1" height="109" fill="#37373c" />
<rect x="1157.3" y="290" width="1" height="248" fill="#37373c" />
<rect x="1379.2" y="175" width="1" height="109" fill="#37373c" />
<rect x="1379.2" y="290" width="1" height="248" fill="#37373c" />
<rect x="270.5" y="357.8" width="1296" height="1.2" fill="#202024" />
<rect x="270.5" y="428.4" width="1296" height="1.2" fill="#202024" />
<rect x="1565.6" y="128" width="7.4" height="46.4" fill="#1c1c20" />
<rect x="1569" y="174.6" width="4" height="368.4" fill="#2d2d32" />
</g>
<g id="clips">
<rect x="293.3" y="289.3" width="11.6" height="68.4" rx="0.3" fill="#141b16" />
<rect x="294.1" y="290.2" width="10" height="66.6" fill="#54916b" />
<rect x="294.1" y="327.6" width="10" height="1.1" fill="rgba(10,25,15,0.42)" />
<rect x="305.2" y="289.3" width="49.7" height="68.4" rx="4.3" fill="#141b16" />
<rect x="306" y="290.2" width="48.1" height="66.6" rx="3.6" fill="#54916b" />
<rect x="306" y="327.6" width="48.1" height="1.1" fill="rgba(10,25,15,0.42)" />
<path d="M306.4 301.3 L307.3 301.3 L307.3 303.4 L308.2 303.4 L308.2 301.6 L309.1 301.6 L309.1 301.0 L310.0 301.0 L310.0 301.7 L310.9 301.7 L310.9 304.5 L311.8 304.5 L311.8 303.6 L312.7 303.6 L312.7 299.5 L313.6 299.5 L313.6 304.3 L314.6 304.3 L314.6 304.9 L315.5 304.9 L315.5 303.2 L316.4 303.2 L316.4 304.6 L317.3 304.6 L317.3 303.1 L318.2 303.1 L318.2 301.9 L319.1 301.9 L319.1 303.2 L320.0 303.2 L320.0 302.7 L320.9 302.7 L320.9 303.1 L321.8 303.1 L321.8 308.5 L322.7 308.5 L322.7 307.7 L323.6 307.7 L323.6 303.8 L324.5 303.8 L324.5 303.5 L325.4 303.5 L325.4 302.2 L326.3 302.2 L326.3 302.2 L327.2 302.2 L327.2 302.2 L328.1 302.2 L328.1 301.3 L329.0 301.3 L329.0 301.4 L329.9 301.4 L329.9 301.4 L330.9 301.4 L330.9 304.6 L331.8 304.6 L331.8 303.9 L332.7 303.9 L332.7 304.8 L333.6 304.8 L333.6 301.8 L334.5 301.8 L334.5 304.5 L335.4 304.5 L335.4 304.2 L336.3 304.2 L336.3 304.8 L337.2 304.8 L337.2 304.1 L338.1 304.1 L338.1 303.1 L339.0 303.1 L339.0 304.8 L339.9 304.8 L339.9 302.9 L340.8 302.9 L340.8 305.6 L341.7 305.6 L341.7 304.7 L342.6 304.7 L342.6 305.2 L343.5 305.2 L343.5 303.3 L344.4 303.3 L344.4 305.2 L345.3 305.2 L345.3 303.7 L346.3 303.7 L346.3 305.2 L347.2 305.2 L347.2 305.3 L348.1 305.3 L348.1 304.5 L349.0 304.5 L349.0 305.3 L349.9 305.3 L349.9 305.1 L350.8 305.1 L350.8 305.5 L351.7 305.5 L351.7 305.2 L352.6 305.2 L352.6 303.7 L353.5 303.7 L353.5 313.7 L352.6 313.7 L352.6 313.2 L351.7 313.2 L351.7 312.9 L350.8 312.9 L350.8 313.7 L349.9 313.7 L349.9 312.9 L349.0 312.9 L349.0 313.8 L348.1 313.8 L348.1 312.8 L347.2 312.8 L347.2 312.4 L346.3 312.4 L346.3 313.6 L345.3 313.6 L345.3 313.6 L344.4 313.6 L344.4 314.6 L343.5 314.6 L343.5 312.5 L342.6 312.5 L342.6 313.5 L341.7 313.5 L341.7 312.6 L340.8 312.6 L340.8 315.2 L339.9 315.2 L339.9 312.8 L339.0 312.8 L339.0 314.1 L338.1 314.1 L338.1 314.1 L337.2 314.1 L337.2 313.8 L336.3 313.8 L336.3 313.2 L335.4 313.2 L335.4 313.7 L334.5 313.7 L334.5 316.5 L333.6 316.5 L333.6 313.3 L332.7 313.3 L332.7 314.8 L331.8 314.8 L331.8 313.9 L330.9 313.9 L330.9 316.6 L329.9 316.6 L329.9 317.2 L329.0 317.2 L329.0 315.2 L328.1 315.2 L328.1 316.2 L327.2 316.2 L327.2 315.8 L326.3 315.8 L326.3 316.5 L325.4 316.5 L325.4 315.1 L324.5 315.1 L324.5 313.5 L323.6 313.5 L323.6 310.7 L322.7 310.7 L322.7 310.2 L321.8 310.2 L321.8 314.0 L320.9 314.0 L320.9 315.0 L320.0 315.0 L320.0 315.4 L319.1 315.4 L319.1 315.5 L318.2 315.5 L318.2 315.0 L317.3 315.0 L317.3 313.1 L316.4 313.1 L316.4 315.1 L315.5 315.1 L315.5 313.9 L314.6 313.9 L314.6 313.4 L313.6 313.4 L313.6 318.9 L312.7 318.9 L312.7 314.0 L311.8 314.0 L311.8 313.3 L310.9 313.3 L310.9 315.6 L310.0 315.6 L310.0 316.7 L309.1 316.7 L309.1 316.0 L308.2 316.0 L308.2 314.0 L307.3 314.0 L307.3 316.6 L306.4 316.6 Z" fill="#e2f1e7" stroke="none" stroke-width="1" />
<rect x="306.6" y="308.75" width="47.3" height="1.3" fill="#a3b2a8" />
<text x="309.8" y="348.7" font-size="12.6" fill="#dbe8df" textLength="36.5" lengthAdjust="spacing">First...</text>
<rect x="373.2" y="289.3" width="75.6" height="68.4" rx="4.3" fill="#141b16" />
<rect x="374" y="290.2" width="74" height="66.6" rx="3.6" fill="#446b50" />
<rect x="374" y="327.6" width="74" height="1.1" fill="rgba(10,25,15,0.42)" />
<path d="M374.4 302.5 L375.3 302.5 L375.3 302.1 L376.2 302.1 L376.2 300.2 L377.1 300.2 L377.1 301.3 L378.0 301.3 L378.0 301.7 L378.9 301.7 L378.9 300.2 L379.8 300.2 L379.8 301.6 L380.7 301.6 L380.7 300.9 L381.6 300.9 L381.6 302.4 L382.5 302.4 L382.5 302.4 L383.4 302.4 L383.4 300.8 L384.3 300.8 L384.3 300.0 L385.2 300.0 L385.2 302.0 L386.1 302.0 L386.1 302.4 L387.0 302.4 L387.0 301.3 L387.9 301.3 L387.9 301.6 L388.8 301.6 L388.8 302.4 L389.7 302.4 L389.7 304.7 L390.6 304.7 L390.6 303.2 L391.5 303.2 L391.5 302.2 L392.4 302.2 L392.4 301.7 L393.3 301.7 L393.3 302.6 L394.2 302.6 L394.2 300.3 L395.1 300.3 L395.1 303.7 L396.0 303.7 L396.0 304.3 L396.9 304.3 L396.9 302.7 L397.8 302.7 L397.8 300.9 L398.7 300.9 L398.7 301.9 L399.6 301.9 L399.6 299.6 L400.5 299.6 L400.5 301.2 L401.4 301.2 L401.4 300.0 L402.3 300.0 L402.3 300.3 L403.2 300.3 L403.2 298.4 L404.1 298.4 L404.1 301.4 L405.0 301.4 L405.0 301.6 L405.9 301.6 L405.9 307.9 L406.8 307.9 L406.8 303.8 L407.7 303.8 L407.7 301.3 L408.6 301.3 L408.6 299.6 L409.5 299.6 L409.5 300.4 L410.4 300.4 L410.4 301.4 L411.4 301.4 L411.4 301.4 L412.3 301.4 L412.3 302.4 L413.2 302.4 L413.2 296.8 L414.1 296.8 L414.1 298.4 L415.0 298.4 L415.0 300.0 L415.9 300.0 L415.9 299.7 L416.8 299.7 L416.8 297.6 L417.7 297.6 L417.7 302.0 L418.6 302.0 L418.6 300.7 L419.5 300.7 L419.5 299.4 L420.4 299.4 L420.4 302.1 L421.3 302.1 L421.3 299.6 L422.2 299.6 L422.2 294.9 L423.1 294.9 L423.1 301.0 L424.0 301.0 L424.0 304.1 L424.9 304.1 L424.9 302.4 L425.8 302.4 L425.8 303.0 L426.7 303.0 L426.7 301.8 L427.6 301.8 L427.6 302.8 L428.5 302.8 L428.5 300.7 L429.4 300.7 L429.4 305.2 L430.3 305.2 L430.3 302.2 L431.2 302.2 L431.2 300.7 L432.1 300.7 L432.1 299.3 L433.0 299.3 L433.0 300.1 L433.9 300.1 L433.9 302.7 L434.8 302.7 L434.8 303.0 L435.7 303.0 L435.7 303.7 L436.6 303.7 L436.6 299.1 L437.5 299.1 L437.5 304.1 L438.4 304.1 L438.4 301.1 L439.3 301.1 L439.3 301.3 L440.2 301.3 L440.2 304.2 L441.1 304.2 L441.1 300.8 L442.0 300.8 L442.0 301.2 L442.9 301.2 L442.9 298.3 L443.8 298.3 L443.8 302.3 L444.7 302.3 L444.7 302.9 L445.6 302.9 L445.6 301.9 L446.5 301.9 L446.5 299.1 L447.4 299.1 L447.4 317.6 L446.5 317.6 L446.5 315.5 L445.6 315.5 L445.6 315.1 L444.7 315.1 L444.7 315.7 L443.8 315.7 L443.8 318.4 L442.9 318.4 L442.9 317.0 L442.0 317.0 L442.0 317.7 L441.1 317.7 L441.1 314.4 L440.2 314.4 L440.2 317.2 L439.3 317.2 L439.3 316.2 L438.4 316.2 L438.4 314.0 L437.5 314.0 L437.5 316.9 L436.6 316.9 L436.6 314.7 L435.7 314.7 L435.7 315.1 L434.8 315.1 L434.8 314.7 L433.9 314.7 L433.9 317.3 L433.0 317.3 L433.0 316.7 L432.1 316.7 L432.1 316.0 L431.2 316.0 L431.2 316.3 L430.3 316.3 L430.3 312.8 L429.4 312.8 L429.4 317.9 L428.5 317.9 L428.5 314.8 L427.6 314.8 L427.6 315.2 L426.7 315.2 L426.7 315.3 L425.8 315.3 L425.8 315.7 L424.9 315.7 L424.9 314.0 L424.0 314.0 L424.0 317.4 L423.1 317.4 L423.1 321.1 L422.2 321.1 L422.2 317.3 L421.3 317.3 L421.3 316.1 L420.4 316.1 L420.4 319.1 L419.5 319.1 L419.5 317.7 L418.6 317.7 L418.6 315.4 L417.7 315.4 L417.7 319.4 L416.8 319.4 L416.8 316.6 L415.9 316.6 L415.9 318.2 L415.0 318.2 L415.0 317.5 L414.1 317.5 L414.1 320.8 L413.2 320.8 L413.2 315.2 L412.3 315.2 L412.3 315.3 L411.4 315.3 L411.4 315.9 L410.4 315.9 L410.4 317.2 L409.5 317.2 L409.5 316.6 L408.6 316.6 L408.6 315.8 L407.7 315.8 L407.7 314.1 L406.8 314.1 L406.8 310.7 L405.9 310.7 L405.9 315.0 L405.0 315.0 L405.0 317.0 L404.1 317.0 L404.1 318.5 L403.2 318.5 L403.2 316.3 L402.3 316.3 L402.3 317.7 L401.4 317.7 L401.4 315.8 L400.5 315.8 L400.5 318.4 L399.6 318.4 L399.6 316.7 L398.7 316.7 L398.7 316.6 L397.8 316.6 L397.8 316.0 L396.9 316.0 L396.9 314.5 L396.0 314.5 L396.0 314.6 L395.1 314.6 L395.1 318.0 L394.2 318.0 L394.2 315.8 L393.3 315.8 L393.3 316.4 L392.4 316.4 L392.4 315.0 L391.5 315.0 L391.5 314.2 L390.6 314.2 L390.6 312.8 L389.7 312.8 L389.7 314.8 L388.8 314.8 L388.8 317.0 L387.9 317.0 L387.9 316.8 L387.0 316.8 L387.0 314.9 L386.1 314.9 L386.1 316.5 L385.2 316.5 L385.2 318.3 L384.3 318.3 L384.3 317.6 L383.4 317.6 L383.4 314.6 L382.5 314.6 L382.5 314.9 L381.6 314.9 L381.6 317.0 L380.7 317.0 L380.7 316.8 L379.8 316.8 L379.8 318.4 L378.9 318.4 L378.9 316.4 L378.0 316.4 L378.0 317.0 L377.1 317.0 L377.1 317.9 L376.2 317.9 L376.2 316.2 L375.3 316.2 L375.3 314.9 L374.4 314.9 Z" fill="#e2f1e7" stroke="none" stroke-width="1" />
<rect x="374.6" y="308.75" width="73.2" height="1.3" fill="#a3b2a8" />
<rect x="375.5" y="298.3" width="71.8" height="1" fill="rgba(205,225,210,0.36)" />
<text x="376.7" y="348.7" font-size="12.6" fill="#dbe8df" textLength="30.6" lengthAdjust="spacing">Sec...</text>
<path d="M421.2 339.9 Q424.0 335.2 426.2 335.4 C430.4 335.6 432.0 348.6 436.6 348.9 Q439.4 349.0 441.9 344.4" fill="none" stroke="#0a100b" stroke-width="1.5" stroke-linecap="round"/>
<circle cx="426.0" cy="338.2" r="1.5" fill="none" stroke="#0a100b" stroke-width="1.1"/>
<circle cx="436.9" cy="346.8" r="1.6" fill="none" stroke="#0a100b" stroke-width="1.1"/>
<rect x="453.5" y="289.3" width="6.4" height="68.4" rx="0.3" fill="#141b16" />
<rect x="454.3" y="290.2" width="4.8" height="66.6" fill="#54916b" />
<rect x="454.3" y="327.6" width="4.8" height="1.1" fill="rgba(10,25,15,0.42)" />
<rect x="459.5" y="289.3" width="69.5" height="68.4" rx="4.3" fill="#141b16" />
<rect x="460.3" y="290.2" width="67.9" height="66.6" rx="3.6" fill="#54916b" />
<rect x="460.3" y="327.6" width="67.9" height="1.1" fill="rgba(10,25,15,0.42)" />
<path d="M460.7 300.5 L461.6 300.5 L461.6 301.2 L462.5 301.2 L462.5 304.2 L463.4 304.2 L463.4 301.9 L464.3 301.9 L464.3 304.5 L465.2 304.5 L465.2 308.7 L466.1 308.7 L466.1 308.5 L467.0 308.5 L467.0 303.9 L467.9 303.9 L467.9 303.8 L468.8 303.8 L468.8 302.4 L469.7 302.4 L469.7 302.0 L470.6 302.0 L470.6 305.7 L471.5 305.7 L471.5 308.5 L472.5 308.5 L472.5 302.8 L473.4 302.8 L473.4 302.1 L474.3 302.1 L474.3 302.5 L475.2 302.5 L475.2 302.5 L476.1 302.5 L476.1 299.6 L477.0 299.6 L477.0 304.6 L477.9 304.6 L477.9 302.5 L478.8 302.5 L478.8 303.1 L479.7 303.1 L479.7 305.9 L480.6 305.9 L480.6 302.3 L481.5 302.3 L481.5 302.3 L482.4 302.3 L482.4 304.6 L483.3 304.6 L483.3 305.0 L484.2 305.0 L484.2 297.2 L485.1 297.2 L485.1 302.7 L486.0 302.7 L486.0 304.2 L486.9 304.2 L486.9 302.7 L487.8 302.7 L487.8 304.1 L488.7 304.1 L488.7 305.2 L489.6 305.2 L489.6 303.4 L490.5 303.4 L490.5 304.0 L491.4 304.0 L491.4 304.3 L492.3 304.3 L492.3 304.2 L493.2 304.2 L493.2 308.3 L494.1 308.3 L494.1 307.8 L495.1 307.8 L495.1 302.1 L496.0 302.1 L496.0 302.7 L496.9 302.7 L496.9 300.6 L497.8 300.6 L497.8 301.5 L498.7 301.5 L498.7 299.4 L499.6 299.4 L499.6 299.3 L500.5 299.3 L500.5 304.0 L501.4 304.0 L501.4 304.1 L502.3 304.1 L502.3 302.0 L503.2 302.0 L503.2 303.5 L504.1 303.5 L504.1 303.3 L505.0 303.3 L505.0 304.2 L505.9 304.2 L505.9 301.8 L506.8 301.8 L506.8 305.8 L507.7 305.8 L507.7 305.6 L508.6 305.6 L508.6 306.1 L509.5 306.1 L509.5 305.1 L510.4 305.1 L510.4 308.6 L511.3 308.6 L511.3 308.3 L512.2 308.3 L512.2 304.6 L513.1 304.6 L513.1 305.0 L514.0 305.0 L514.0 305.3 L514.9 305.3 L514.9 305.5 L515.8 305.5 L515.8 305.7 L516.8 305.7 L516.8 304.4 L517.7 304.4 L517.7 304.7 L518.6 304.7 L518.6 304.2 L519.5 304.2 L519.5 299.6 L520.4 299.6 L520.4 305.5 L521.3 305.5 L521.3 306.1 L522.2 306.1 L522.2 304.8 L523.1 304.8 L523.1 306.1 L524.0 306.1 L524.0 304.9 L524.9 304.9 L524.9 305.8 L525.8 305.8 L525.8 305.8 L526.7 305.8 L526.7 306.6 L527.6 306.6 L527.6 312.0 L526.7 312.0 L526.7 312.5 L525.8 312.5 L525.8 312.0 L524.9 312.0 L524.9 313.4 L524.0 313.4 L524.0 312.6 L523.1 312.6 L523.1 312.8 L522.2 312.8 L522.2 312.2 L521.3 312.2 L521.3 312.7 L520.4 312.7 L520.4 318.5 L519.5 318.5 L519.5 313.4 L518.6 313.4 L518.6 312.9 L517.7 312.9 L517.7 313.1 L516.8 313.1 L516.8 312.9 L515.8 312.9 L515.8 312.5 L514.9 312.5 L514.9 312.5 L514.0 312.5 L514.0 313.0 L513.1 313.0 L513.1 314.0 L512.2 314.0 L512.2 310.4 L511.3 310.4 L511.3 310.1 L510.4 310.1 L510.4 313.4 L509.5 313.4 L509.5 312.3 L508.6 312.3 L508.6 312.8 L507.7 312.8 L507.7 312.7 L506.8 312.7 L506.8 315.0 L505.9 315.0 L505.9 313.3 L505.0 313.3 L505.0 314.0 L504.1 314.0 L504.1 313.7 L503.2 313.7 L503.2 316.5 L502.3 316.5 L502.3 314.4 L501.4 314.4 L501.4 313.5 L500.5 313.5 L500.5 317.4 L499.6 317.4 L499.6 317.1 L498.7 317.1 L498.7 316.3 L497.8 316.3 L497.8 316.9 L496.9 316.9 L496.9 314.8 L496.0 314.8 L496.0 315.9 L495.1 315.9 L495.1 310.9 L494.1 310.9 L494.1 310.5 L493.2 310.5 L493.2 314.1 L492.3 314.1 L492.3 313.4 L491.4 313.4 L491.4 313.8 L490.5 313.8 L490.5 313.9 L489.6 313.9 L489.6 312.6 L488.7 312.6 L488.7 314.2 L487.8 314.2 L487.8 315.2 L486.9 315.2 L486.9 314.1 L486.0 314.1 L486.0 314.9 L485.1 314.9 L485.1 320.8 L484.2 320.8 L484.2 313.3 L483.3 313.3 L483.3 313.7 L482.4 313.7 L482.4 316.0 L481.5 316.0 L481.5 315.7 L480.6 315.7 L480.6 312.6 L479.7 312.6 L479.7 314.5 L478.8 314.5 L478.8 315.7 L477.9 315.7 L477.9 313.2 L477.0 313.2 L477.0 318.7 L476.1 318.7 L476.1 314.9 L475.2 314.9 L475.2 316.1 L474.3 316.1 L474.3 316.6 L473.4 316.6 L473.4 315.6 L472.5 315.6 L472.5 310.1 L471.5 310.1 L471.5 312.2 L470.6 312.2 L470.6 316.3 L469.7 316.3 L469.7 315.7 L468.8 315.7 L468.8 313.8 L467.9 313.8 L467.9 313.9 L467.0 313.9 L467.0 310.1 L466.1 310.1 L466.1 310.0 L465.2 310.0 L465.2 313.1 L464.3 313.1 L464.3 315.1 L463.4 315.1 L463.4 314.0 L462.5 314.0 L462.5 317.0 L461.6 317.0 L461.6 316.5 L460.7 316.5 Z" fill="#e2f1e7" stroke="none" stroke-width="1" />
<rect x="460.9" y="308.75" width="67.1" height="1.3" fill="#a3b2a8" />
<text x="464.8" y="348.7" font-size="12.6" fill="#dbe8df" textLength="57.1" lengthAdjust="spacing">ThirdPa...</text>
<rect x="539.2" y="289.3" width="16.6" height="68.4" rx="4.3" fill="#141b16" />
<rect x="540" y="290.2" width="15" height="66.6" rx="3.6" fill="#54916b" />
<rect x="540" y="327.6" width="15" height="1.1" fill="rgba(10,25,15,0.42)" />
<rect x="556.1" y="289.3" width="52.7" height="68.4" rx="4.3" fill="#141b16" />
<rect x="556.9" y="290.2" width="51.1" height="66.6" rx="3.6" fill="#54916b" />
<rect x="556.9" y="327.6" width="51.1" height="1.1" fill="rgba(10,25,15,0.42)" />
<path d="M557.3 305.6 L558.2 305.6 L558.2 305.5 L559.1 305.5 L559.1 303.6 L560.0 303.6 L560.0 302.3 L560.9 302.3 L560.9 304.0 L561.9 304.0 L561.9 305.0 L562.8 305.0 L562.8 305.3 L563.7 305.3 L563.7 305.2 L564.6 305.2 L564.6 304.3 L565.5 304.3 L565.5 306.1 L566.4 306.1 L566.4 305.4 L567.3 305.4 L567.3 304.7 L568.2 304.7 L568.2 304.9 L569.1 304.9 L569.1 305.1 L570.1 305.1 L570.1 305.9 L571.0 305.9 L571.0 305.4 L571.9 305.4 L571.9 306.9 L572.8 306.9 L572.8 306.4 L573.7 306.4 L573.7 306.3 L574.6 306.3 L574.6 306.2 L575.5 306.2 L575.5 302.3 L576.4 302.3 L576.4 301.5 L577.3 301.5 L577.3 300.9 L578.3 300.9 L578.3 302.5 L579.2 302.5 L579.2 303.9 L580.1 303.9 L580.1 304.9 L581.0 304.9 L581.0 308.6 L581.9 308.6 L581.9 308.5 L582.8 308.5 L582.8 305.1 L583.7 305.1 L583.7 305.2 L584.6 305.2 L584.6 301.7 L585.5 301.7 L585.5 301.9 L586.4 301.9 L586.4 301.9 L587.4 301.9 L587.4 305.2 L588.3 305.2 L588.3 304.8 L589.2 304.8 L589.2 303.1 L590.1 303.1 L590.1 305.7 L591.0 305.7 L591.0 302.1 L591.9 302.1 L591.9 304.6 L592.8 304.6 L592.8 304.2 L593.7 304.2 L593.7 304.3 L594.6 304.3 L594.6 306.2 L595.6 306.2 L595.6 306.5 L596.5 306.5 L596.5 304.8 L597.4 304.8 L597.4 308.6 L598.3 308.6 L598.3 303.6 L599.2 303.6 L599.2 304.1 L600.1 304.1 L600.1 304.2 L601.0 304.2 L601.0 302.7 L601.9 302.7 L601.9 303.4 L602.8 303.4 L602.8 304.3 L603.8 304.3 L603.8 305.4 L604.7 305.4 L604.7 304.4 L605.6 304.4 L605.6 304.2 L606.5 304.2 L606.5 304.3 L607.4 304.3 L607.4 313.9 L606.5 313.9 L606.5 313.8 L605.6 313.8 L605.6 314.1 L604.7 314.1 L604.7 313.1 L603.8 313.1 L603.8 314.3 L602.8 314.3 L602.8 314.2 L601.9 314.2 L601.9 315.6 L601.0 315.6 L601.0 313.8 L600.1 313.8 L600.1 313.8 L599.2 313.8 L599.2 314.4 L598.3 314.4 L598.3 310.0 L597.4 310.0 L597.4 313.9 L596.5 313.9 L596.5 312.2 L595.6 312.2 L595.6 311.8 L594.6 311.8 L594.6 314.1 L593.7 314.1 L593.7 313.2 L592.8 313.2 L592.8 313.5 L591.9 313.5 L591.9 315.2 L591.0 315.2 L591.0 312.1 L590.1 312.1 L590.1 314.6 L589.2 314.6 L589.2 313.5 L588.3 313.5 L588.3 312.7 L587.4 312.7 L587.4 316.1 L586.4 316.1 L586.4 314.8 L585.5 314.8 L585.5 316.8 L584.6 316.8 L584.6 313.5 L583.7 313.5 L583.7 313.4 L582.8 313.4 L582.8 310.1 L581.9 310.1 L581.9 310.1 L581.0 310.1 L581.0 312.7 L580.1 312.7 L580.1 314.1 L579.2 314.1 L579.2 315.5 L578.3 315.5 L578.3 317.7 L577.3 317.7 L577.3 316.4 L576.4 316.4 L576.4 315.9 L575.5 315.9 L575.5 312.2 L574.6 312.2 L574.6 311.7 L573.7 311.7 L573.7 311.7 L572.8 311.7 L572.8 311.3 L571.9 311.3 L571.9 312.7 L571.0 312.7 L571.0 312.4 L570.1 312.4 L570.1 313.1 L569.1 313.1 L569.1 312.8 L568.2 312.8 L568.2 313.0 L567.3 313.0 L567.3 312.3 L566.4 312.3 L566.4 312.0 L565.5 312.0 L565.5 314.1 L564.6 314.1 L564.6 312.7 L563.7 312.7 L563.7 313.3 L562.8 313.3 L562.8 313.3 L561.9 313.3 L561.9 314.4 L560.9 314.4 L560.9 316.3 L560.0 316.3 L560.0 314.8 L559.1 314.8 L559.1 313.0 L558.2 313.0 L558.2 312.4 L557.3 312.4 Z" fill="#e2f1e7" stroke="none" stroke-width="1" />
<rect x="557.5" y="308.75" width="50.3" height="1.3" fill="#a3b2a8" />
<text x="561.9" y="348.7" font-size="12.6" fill="#dbe8df" textLength="38.7" lengthAdjust="spacing">Four...</text>
<rect x="608.6" y="289.3" width="13.8" height="68.4" rx="4.3" fill="#141b16" />
<rect x="609.4" y="290.2" width="12.2" height="66.6" rx="3.6" fill="#54916b" />
<rect x="609.4" y="327.6" width="12.2" height="1.1" fill="rgba(10,25,15,0.42)" />
<rect x="622.4" y="289.3" width="59" height="68.4" rx="4.3" fill="#141b16" />
<rect x="623.2" y="290.2" width="57.4" height="66.6" rx="3.6" fill="#446b50" />
<rect x="623.2" y="327.6" width="57.4" height="1.1" fill="rgba(10,25,15,0.42)" />
<path d="M623.6 302.0 L624.5 302.0 L624.5 301.7 L625.4 301.7 L625.4 303.9 L626.3 303.9 L626.3 302.9 L627.2 302.9 L627.2 303.4 L628.1 303.4 L628.1 301.0 L629.1 301.0 L629.1 301.8 L630.0 301.8 L630.0 302.2 L630.9 302.2 L630.9 301.8 L631.8 301.8 L631.8 304.7 L632.7 304.7 L632.7 299.1 L633.6 299.1 L633.6 302.1 L634.5 302.1 L634.5 303.8 L635.4 303.8 L635.4 304.5 L636.3 304.5 L636.3 304.0 L637.2 304.0 L637.2 305.4 L638.2 305.4 L638.2 305.7 L639.1 305.7 L639.1 305.7 L640.0 305.7 L640.0 303.5 L640.9 303.5 L640.9 304.9 L641.8 304.9 L641.8 304.3 L642.7 304.3 L642.7 306.4 L643.6 306.4 L643.6 307.9 L644.5 307.9 L644.5 304.8 L645.4 304.8 L645.4 303.5 L646.3 303.5 L646.3 300.2 L647.3 300.2 L647.3 303.6 L648.2 303.6 L648.2 301.3 L649.1 301.3 L649.1 304.3 L650.0 304.3 L650.0 301.6 L650.9 301.6 L650.9 303.4 L651.8 303.4 L651.8 304.6 L652.7 304.6 L652.7 305.1 L653.6 305.1 L653.6 303.1 L654.5 303.1 L654.5 308.2 L655.4 308.2 L655.4 304.3 L656.3 304.3 L656.3 304.6 L657.3 304.6 L657.3 303.5 L658.2 303.5 L658.2 303.0 L659.1 303.0 L659.1 303.1 L660.0 303.1 L660.0 304.3 L660.9 304.3 L660.9 303.0 L661.8 303.0 L661.8 304.6 L662.7 304.6 L662.7 304.3 L663.6 304.3 L663.6 305.6 L664.5 305.6 L664.5 304.7 L665.4 304.7 L665.4 304.5 L666.4 304.5 L666.4 304.8 L667.3 304.8 L667.3 304.9 L668.2 304.9 L668.2 305.3 L669.1 305.3 L669.1 304.5 L670.0 304.5 L670.0 304.4 L670.9 304.4 L670.9 306.2 L671.8 306.2 L671.8 304.8 L672.7 304.8 L672.7 303.6 L673.6 303.6 L673.6 303.8 L674.5 303.8 L674.5 302.9 L675.5 302.9 L675.5 303.6 L676.4 303.6 L676.4 304.4 L677.3 304.4 L677.3 304.4 L678.2 304.4 L678.2 303.7 L679.1 303.7 L679.1 305.3 L680.0 305.3 L680.0 313.1 L679.1 313.1 L679.1 314.7 L678.2 314.7 L678.2 313.6 L677.3 313.6 L677.3 314.1 L676.4 314.1 L676.4 314.0 L675.5 314.0 L675.5 314.6 L674.5 314.6 L674.5 314.6 L673.6 314.6 L673.6 315.0 L672.7 315.0 L672.7 313.6 L671.8 313.6 L671.8 312.1 L670.9 312.1 L670.9 313.7 L670.0 313.7 L670.0 313.9 L669.1 313.9 L669.1 312.8 L668.2 312.8 L668.2 313.6 L667.3 313.6 L667.3 313.0 L666.4 313.0 L666.4 313.0 L665.4 313.0 L665.4 314.1 L664.5 314.1 L664.5 312.7 L663.6 312.7 L663.6 314.4 L662.7 314.4 L662.7 313.7 L661.8 313.7 L661.8 314.0 L660.9 314.0 L660.9 313.4 L660.0 313.4 L660.0 315.2 L659.1 315.2 L659.1 314.2 L658.2 314.2 L658.2 315.2 L657.3 315.2 L657.3 313.2 L656.3 313.2 L656.3 314.1 L655.4 314.1 L655.4 310.4 L654.5 310.4 L654.5 315.4 L653.6 315.4 L653.6 312.9 L652.7 312.9 L652.7 313.3 L651.8 313.3 L651.8 314.1 L650.9 314.1 L650.9 315.6 L650.0 315.6 L650.0 314.5 L649.1 314.5 L649.1 315.4 L648.2 315.4 L648.2 315.2 L647.3 315.2 L647.3 316.8 L646.3 316.8 L646.3 314.2 L645.4 314.2 L645.4 312.9 L644.5 312.9 L644.5 310.7 L643.6 310.7 L643.6 312.0 L642.7 312.0 L642.7 314.4 L641.8 314.4 L641.8 313.1 L640.9 313.1 L640.9 314.3 L640.0 314.3 L640.0 312.7 L639.1 312.7 L639.1 313.0 L638.2 313.0 L638.2 313.3 L637.2 313.3 L637.2 314.4 L636.3 314.4 L636.3 313.4 L635.4 313.4 L635.4 313.4 L634.5 313.4 L634.5 315.0 L633.6 315.0 L633.6 318.8 L632.7 318.8 L632.7 313.5 L631.8 313.5 L631.8 315.6 L630.9 315.6 L630.9 315.8 L630.0 315.8 L630.0 316.5 L629.1 316.5 L629.1 317.4 L628.1 317.4 L628.1 314.3 L627.2 314.3 L627.2 315.8 L626.3 315.8 L626.3 314.8 L625.4 314.8 L625.4 315.0 L624.5 315.0 L624.5 315.2 L623.6 315.2 Z" fill="#e2f1e7" stroke="none" stroke-width="1" />
<rect x="623.8" y="308.75" width="56.6" height="1.3" fill="#a3b2a8" />
<text x="627.9" y="348.7" font-size="12.6" fill="#dbe8df" textLength="41.6" lengthAdjust="spacing">2jasp...</text>
<rect x="682.4" y="289.3" width="66" height="68.4" rx="4.3" fill="#141b16" />
<rect x="683.2" y="290.2" width="64.4" height="66.6" rx="3.6" fill="#446b50" />
<rect x="683.2" y="327.6" width="64.4" height="1.1" fill="rgba(10,25,15,0.42)" />
<path d="M683.6 303.6 L684.5 303.6 L684.5 304.6 L685.4 304.6 L685.4 301.4 L686.3 301.4 L686.3 302.7 L687.2 302.7 L687.2 303.7 L688.1 303.7 L688.1 305.1 L689.0 305.1 L689.0 304.2 L689.9 304.2 L689.9 304.1 L690.8 304.1 L690.8 303.1 L691.8 303.1 L691.8 303.7 L692.7 303.7 L692.7 304.3 L693.6 304.3 L693.6 302.4 L694.5 302.4 L694.5 304.9 L695.4 304.9 L695.4 308.0 L696.3 308.0 L696.3 302.5 L697.2 302.5 L697.2 300.3 L698.1 300.3 L698.1 301.4 L699.0 301.4 L699.0 300.0 L699.9 300.0 L699.9 300.0 L700.8 300.0 L700.8 301.3 L701.7 301.3 L701.7 302.5 L702.6 302.5 L702.6 300.5 L703.5 300.5 L703.5 299.8 L704.4 299.8 L704.4 302.7 L705.3 302.7 L705.3 301.7 L706.2 301.7 L706.2 300.5 L707.1 300.5 L707.1 303.7 L708.1 303.7 L708.1 302.8 L709.0 302.8 L709.0 303.0 L709.9 303.0 L709.9 301.4 L710.8 301.4 L710.8 302.2 L711.7 302.2 L711.7 301.9 L712.6 301.9 L712.6 303.8 L713.5 303.8 L713.5 303.0 L714.4 303.0 L714.4 298.0 L715.3 298.0 L715.3 301.3 L716.2 301.3 L716.2 303.6 L717.1 303.6 L717.1 301.4 L718.0 301.4 L718.0 304.1 L718.9 304.1 L718.9 304.2 L719.8 304.2 L719.8 302.7 L720.7 302.7 L720.7 299.6 L721.6 299.6 L721.6 302.4 L722.5 302.4 L722.5 304.8 L723.5 304.8 L723.5 303.4 L724.4 303.4 L724.4 304.0 L725.3 304.0 L725.3 301.8 L726.2 301.8 L726.2 302.2 L727.1 302.2 L727.1 302.0 L728.0 302.0 L728.0 303.1 L728.9 303.1 L728.9 300.7 L729.8 300.7 L729.8 299.7 L730.7 299.7 L730.7 300.6 L731.6 300.6 L731.6 301.0 L732.5 301.0 L732.5 303.2 L733.4 303.2 L733.4 303.4 L734.3 303.4 L734.3 305.6 L735.2 305.6 L735.2 302.8 L736.1 302.8 L736.1 303.1 L737.0 303.1 L737.0 303.4 L737.9 303.4 L737.9 303.5 L738.8 303.5 L738.8 300.2 L739.8 300.2 L739.8 304.1 L740.7 304.1 L740.7 305.4 L741.6 305.4 L741.6 299.3 L742.5 299.3 L742.5 304.8 L743.4 304.8 L743.4 304.1 L744.3 304.1 L744.3 305.1 L745.2 305.1 L745.2 304.1 L746.1 304.1 L746.1 303.6 L747.0 303.6 L747.0 314.5 L746.1 314.5 L746.1 314.3 L745.2 314.3 L745.2 313.5 L744.3 313.5 L744.3 314.2 L743.4 314.2 L743.4 313.4 L742.5 313.4 L742.5 318.2 L741.6 318.2 L741.6 312.9 L740.7 312.9 L740.7 313.6 L739.8 313.6 L739.8 317.7 L738.8 317.7 L738.8 314.8 L737.9 314.8 L737.9 313.7 L737.0 313.7 L737.0 314.2 L736.1 314.2 L736.1 315.2 L735.2 315.2 L735.2 312.2 L734.3 312.2 L734.3 315.3 L733.4 315.3 L733.4 314.6 L732.5 314.6 L732.5 315.6 L731.6 315.6 L731.6 316.5 L730.7 316.5 L730.7 318.3 L729.8 318.3 L729.8 317.1 L728.9 317.1 L728.9 315.1 L728.0 315.1 L728.0 316.3 L727.1 316.3 L727.1 316.3 L726.2 316.3 L726.2 316.8 L725.3 316.8 L725.3 313.9 L724.4 313.9 L724.4 314.6 L723.5 314.6 L723.5 313.1 L722.5 313.1 L722.5 316.3 L721.6 316.3 L721.6 317.6 L720.7 317.6 L720.7 315.6 L719.8 315.6 L719.8 314.0 L718.9 314.0 L718.9 313.6 L718.0 313.6 L718.0 317.0 L717.1 317.0 L717.1 314.7 L716.2 314.7 L716.2 316.8 L715.3 316.8 L715.3 319.3 L714.4 319.3 L714.4 314.0 L713.5 314.0 L713.5 314.3 L712.6 314.3 L712.6 316.4 L711.7 316.4 L711.7 315.7 L710.8 315.7 L710.8 316.6 L709.9 316.6 L709.9 315.7 L709.0 315.7 L709.0 314.4 L708.1 314.4 L708.1 313.9 L707.1 313.9 L707.1 316.7 L706.2 316.7 L706.2 315.1 L705.3 315.1 L705.3 315.9 L704.4 315.9 L704.4 318.5 L703.5 318.5 L703.5 316.8 L702.6 316.8 L702.6 316.0 L701.7 316.0 L701.7 315.3 L700.8 315.3 L700.8 318.0 L699.9 318.0 L699.9 318.4 L699.0 318.4 L699.0 317.3 L698.1 317.3 L698.1 318.4 L697.2 318.4 L697.2 314.8 L696.3 314.8 L696.3 310.7 L695.4 310.7 L695.4 312.7 L694.5 312.7 L694.5 314.5 L693.6 314.5 L693.6 314.1 L692.7 314.1 L692.7 314.7 L691.8 314.7 L691.8 315.1 L690.8 315.1 L690.8 314.2 L689.9 314.2 L689.9 313.3 L689.0 313.3 L689.0 313.2 L688.1 313.2 L688.1 314.6 L687.2 314.6 L687.2 314.9 L686.3 314.9 L686.3 316.3 L685.4 316.3 L685.4 313.6 L684.5 313.6 L684.5 314.1 L683.6 314.1 Z" fill="#e2f1e7" stroke="none" stroke-width="1" />
<rect x="683.8" y="308.75" width="63.6" height="1.3" fill="#a3b2a8" />
<rect x="684.7" y="296.3" width="62.2" height="1" fill="rgba(205,225,210,0.36)" />
<text x="686.3" y="348.7" font-size="12.6" fill="#dbe8df" textLength="25.9" lengthAdjust="spacing">Ca...</text>
<path d="M720.8 339.9 Q723.6 335.2 725.8 335.4 C730.0 335.6 731.6 348.6 736.2 348.9 Q739.0 349.0 741.5 344.4" fill="none" stroke="#0a100b" stroke-width="1.5" stroke-linecap="round"/>
<circle cx="725.6" cy="338.2" r="1.5" fill="none" stroke="#0a100b" stroke-width="1.1"/>
<circle cx="736.5" cy="346.8" r="1.6" fill="none" stroke="#0a100b" stroke-width="1.1"/>
<rect x="748.3" y="289.3" width="32.5" height="68.4" rx="4.3" fill="#141b16" />
<rect x="749.1" y="290.2" width="30.9" height="66.6" rx="3.6" fill="#446b50" />
<rect x="749.1" y="327.6" width="30.9" height="1.1" fill="rgba(10,25,15,0.42)" />
<path d="M749.5 304.4 L750.4 304.4 L750.4 304.0 L751.3 304.0 L751.3 299.4 L752.2 299.4 L752.2 302.6 L753.1 302.6 L753.1 296.1 L754.0 296.1 L754.0 301.7 L754.9 301.7 L754.9 303.0 L755.8 303.0 L755.8 301.7 L756.7 301.7 L756.7 303.5 L757.7 303.5 L757.7 304.0 L758.6 304.0 L758.6 304.5 L759.5 304.5 L759.5 304.1 L760.4 304.1 L760.4 304.4 L761.3 304.4 L761.3 304.4 L762.2 304.4 L762.2 303.7 L763.1 303.7 L763.1 305.5 L764.0 305.5 L764.0 305.2 L764.9 305.2 L764.9 303.9 L765.8 303.9 L765.8 300.7 L766.7 300.7 L766.7 302.7 L767.6 302.7 L767.6 299.2 L768.5 299.2 L768.5 301.8 L769.4 301.8 L769.4 301.2 L770.3 301.2 L770.3 301.3 L771.2 301.3 L771.2 302.4 L772.2 302.4 L772.2 303.2 L773.1 303.2 L773.1 303.4 L774.0 303.4 L774.0 302.9 L774.9 302.9 L774.9 304.5 L775.8 304.5 L775.8 304.8 L776.7 304.8 L776.7 304.7 L777.6 304.7 L777.6 301.3 L778.5 301.3 L778.5 302.2 L779.4 302.2 L779.4 315.0 L778.5 315.0 L778.5 315.9 L777.6 315.9 L777.6 313.3 L776.7 313.3 L776.7 313.4 L775.8 313.4 L775.8 313.4 L774.9 313.4 L774.9 314.3 L774.0 314.3 L774.0 313.7 L773.1 313.7 L773.1 315.2 L772.2 315.2 L772.2 315.3 L771.2 315.3 L771.2 316.4 L770.3 316.4 L770.3 315.8 L769.4 315.8 L769.4 316.9 L768.5 316.9 L768.5 318.1 L767.6 318.1 L767.6 315.2 L766.7 315.2 L766.7 316.8 L765.8 316.8 L765.8 314.3 L764.9 314.3 L764.9 313.2 L764.0 313.2 L764.0 312.4 L763.1 312.4 L763.1 313.8 L762.2 313.8 L762.2 314.1 L761.3 314.1 L761.3 314.3 L760.4 314.3 L760.4 313.9 L759.5 313.9 L759.5 313.3 L758.6 313.3 L758.6 314.6 L757.7 314.6 L757.7 314.3 L756.7 314.3 L756.7 317.0 L755.8 317.0 L755.8 314.3 L754.9 314.3 L754.9 316.7 L754.0 316.7 L754.0 320.7 L753.1 320.7 L753.1 314.4 L752.2 314.4 L752.2 316.6 L751.3 316.6 L751.3 314.7 L750.4 314.7 L750.4 313.1 L749.5 313.1 Z" fill="#e2f1e7" stroke="none" stroke-width="1" />
<rect x="749.7" y="308.75" width="30.1" height="1.3" fill="#a3b2a8" />
<rect x="750.6" y="296.3" width="28.7" height="1" fill="rgba(205,225,210,0.36)" />
<rect x="780.5" y="289.3" width="108.5" height="68.4" rx="4.3" fill="#141b16" />
<rect x="781.3" y="290.2" width="106.9" height="66.6" rx="3.6" fill="#446b50" />
<rect x="781.3" y="327.6" width="106.9" height="1.1" fill="rgba(10,25,15,0.42)" />
<path d="M781.7 292.4 L782.6 292.4 L782.6 299.8 L783.5 299.8 L783.5 299.2 L784.4 299.2 L784.4 298.7 L785.3 298.7 L785.3 301.3 L786.2 301.3 L786.2 299.4 L787.1 299.4 L787.1 302.9 L788.0 302.9 L788.0 300.4 L788.9 300.4 L788.9 301.3 L789.8 301.3 L789.8 301.9 L790.8 301.9 L790.8 301.3 L791.7 301.3 L791.7 308.0 L792.6 308.0 L792.6 308.5 L793.5 308.5 L793.5 302.1 L794.4 302.1 L794.4 301.4 L795.3 301.4 L795.3 301.4 L796.2 301.4 L796.2 296.6 L797.1 296.6 L797.1 301.1 L798.0 301.1 L798.0 302.2 L798.9 302.2 L798.9 302.5 L799.8 302.5 L799.8 302.3 L800.7 302.3 L800.7 305.0 L801.6 305.0 L801.6 305.2 L802.5 305.2 L802.5 301.3 L803.4 301.3 L803.4 300.1 L804.3 300.1 L804.3 299.1 L805.2 299.1 L805.2 300.0 L806.1 300.0 L806.1 301.0 L807.0 301.0 L807.0 304.2 L807.9 304.2 L807.9 303.3 L808.9 303.3 L808.9 302.6 L809.8 302.6 L809.8 303.2 L810.7 303.2 L810.7 304.0 L811.6 304.0 L811.6 303.5 L812.5 303.5 L812.5 302.3 L813.4 302.3 L813.4 303.1 L814.3 303.1 L814.3 304.2 L815.2 304.2 L815.2 302.9 L816.1 302.9 L816.1 303.1 L817.0 303.1 L817.0 300.2 L817.9 300.2 L817.9 304.0 L818.8 304.0 L818.8 303.6 L819.7 303.6 L819.7 304.9 L820.6 304.9 L820.6 304.6 L821.5 304.6 L821.5 306.1 L822.4 306.1 L822.4 305.3 L823.3 305.3 L823.3 302.2 L824.2 302.2 L824.2 301.7 L825.1 301.7 L825.1 301.9 L826.1 301.9 L826.1 302.6 L827.0 302.6 L827.0 301.2 L827.9 301.2 L827.9 303.1 L828.8 303.1 L828.8 303.5 L829.7 303.5 L829.7 303.2 L830.6 303.2 L830.6 303.5 L831.5 303.5 L831.5 301.7 L832.4 301.7 L832.4 298.0 L833.3 298.0 L833.3 304.0 L834.2 304.0 L834.2 303.9 L835.1 303.9 L835.1 303.0 L836.0 303.0 L836.0 302.2 L836.9 302.2 L836.9 302.1 L837.8 302.1 L837.8 301.6 L838.7 301.6 L838.7 299.7 L839.6 299.7 L839.6 299.1 L840.5 299.1 L840.5 301.2 L841.4 301.2 L841.4 301.5 L842.3 301.5 L842.3 302.7 L843.2 302.7 L843.2 303.3 L844.2 303.3 L844.2 301.2 L845.1 301.2 L845.1 303.2 L846.0 303.2 L846.0 302.5 L846.9 302.5 L846.9 303.5 L847.8 303.5 L847.8 303.6 L848.7 303.6 L848.7 308.0 L849.6 308.0 L849.6 308.4 L850.5 308.4 L850.5 304.2 L851.4 304.2 L851.4 303.3 L852.3 303.3 L852.3 302.8 L853.2 302.8 L853.2 301.6 L854.1 301.6 L854.1 303.0 L855.0 303.0 L855.0 303.3 L855.9 303.3 L855.9 303.7 L856.8 303.7 L856.8 305.7 L857.7 305.7 L857.7 303.4 L858.6 303.4 L858.6 304.5 L859.5 304.5 L859.5 301.6 L860.4 301.6 L860.4 303.5 L861.4 303.5 L861.4 302.0 L862.3 302.0 L862.3 303.0 L863.2 303.0 L863.2 302.0 L864.1 302.0 L864.1 305.0 L865.0 305.0 L865.0 305.1 L865.9 305.1 L865.9 305.2 L866.8 305.2 L866.8 304.0 L867.7 304.0 L867.7 304.5 L868.6 304.5 L868.6 304.3 L869.5 304.3 L869.5 305.1 L870.4 305.1 L870.4 305.3 L871.3 305.3 L871.3 302.7 L872.2 302.7 L872.2 301.9 L873.1 301.9 L873.1 302.9 L874.0 302.9 L874.0 302.3 L874.9 302.3 L874.9 302.2 L875.8 302.2 L875.8 302.6 L876.7 302.6 L876.7 300.0 L877.6 300.0 L877.6 299.1 L878.5 299.1 L878.5 297.6 L879.5 297.6 L879.5 299.9 L880.4 299.9 L880.4 300.7 L881.3 300.7 L881.3 303.9 L882.2 303.9 L882.2 302.1 L883.1 302.1 L883.1 304.2 L884.0 304.2 L884.0 301.6 L884.9 301.6 L884.9 303.0 L885.8 303.0 L885.8 303.7 L886.7 303.7 L886.7 304.9 L887.6 304.9 L887.6 313.5 L886.7 313.5 L886.7 314.3 L885.8 314.3 L885.8 314.2 L884.9 314.2 L884.9 315.1 L884.0 315.1 L884.0 314.2 L883.1 314.2 L883.1 314.8 L882.2 314.8 L882.2 313.6 L881.3 313.6 L881.3 317.3 L880.4 317.3 L880.4 317.7 L879.5 317.7 L879.5 320.0 L878.5 320.0 L878.5 318.4 L877.6 318.4 L877.6 316.9 L876.7 316.9 L876.7 315.9 L875.8 315.9 L875.8 314.6 L874.9 314.6 L874.9 315.6 L874.0 315.6 L874.0 314.1 L873.1 314.1 L873.1 316.4 L872.2 316.4 L872.2 314.4 L871.3 314.4 L871.3 312.7 L870.4 312.7 L870.4 313.4 L869.5 313.4 L869.5 314.0 L868.6 314.0 L868.6 313.1 L867.7 313.1 L867.7 314.4 L866.8 314.4 L866.8 313.6 L865.9 313.6 L865.9 313.0 L865.0 313.0 L865.0 312.6 L864.1 312.6 L864.1 315.4 L863.2 315.4 L863.2 315.1 L862.3 315.1 L862.3 315.9 L861.4 315.9 L861.4 313.9 L860.4 313.9 L860.4 315.3 L859.5 315.3 L859.5 314.0 L858.6 314.0 L858.6 314.7 L857.7 314.7 L857.7 312.8 L856.8 312.8 L856.8 313.6 L855.9 313.6 L855.9 314.5 L855.0 314.5 L855.0 314.0 L854.1 314.0 L854.1 316.0 L853.2 316.0 L853.2 314.5 L852.3 314.5 L852.3 314.1 L851.4 314.1 L851.4 314.2 L850.5 314.2 L850.5 310.2 L849.6 310.2 L849.6 310.6 L848.7 310.6 L848.7 315.2 L847.8 315.2 L847.8 314.1 L846.9 314.1 L846.9 315.2 L846.0 315.2 L846.0 314.9 L845.1 314.9 L845.1 316.1 L844.2 316.1 L844.2 314.5 L843.2 314.5 L843.2 315.4 L842.3 315.4 L842.3 316.8 L841.4 316.8 L841.4 316.2 L840.5 316.2 L840.5 318.0 L839.6 318.0 L839.6 318.7 L838.7 318.7 L838.7 316.9 L837.8 316.9 L837.8 314.7 L836.9 314.7 L836.9 314.7 L836.0 314.7 L836.0 315.4 L835.1 315.4 L835.1 313.8 L834.2 313.8 L834.2 313.6 L833.3 313.6 L833.3 319.3 L832.4 319.3 L832.4 316.0 L831.5 316.0 L831.5 313.7 L830.6 313.7 L830.6 315.0 L829.7 315.0 L829.7 314.8 L828.8 314.8 L828.8 315.1 L827.9 315.1 L827.9 316.7 L827.0 316.7 L827.0 315.6 L826.1 315.6 L826.1 315.0 L825.1 315.0 L825.1 315.6 L824.2 315.6 L824.2 315.1 L823.3 315.1 L823.3 312.5 L822.4 312.5 L822.4 312.6 L821.5 312.6 L821.5 313.7 L820.6 313.7 L820.6 313.8 L819.7 313.8 L819.7 314.5 L818.8 314.5 L818.8 313.7 L817.9 313.7 L817.9 316.0 L817.0 316.0 L817.0 315.3 L816.1 315.3 L816.1 315.8 L815.2 315.8 L815.2 314.0 L814.3 314.0 L814.3 314.7 L813.4 314.7 L813.4 315.1 L812.5 315.1 L812.5 314.1 L811.6 314.1 L811.6 314.4 L810.7 314.4 L810.7 315.0 L809.8 315.0 L809.8 314.7 L808.9 314.7 L808.9 314.8 L807.9 314.8 L807.9 314.2 L807.0 314.2 L807.0 316.8 L806.1 316.8 L806.1 316.4 L805.2 316.4 L805.2 318.1 L804.3 318.1 L804.3 317.4 L803.4 317.4 L803.4 316.6 L802.5 316.6 L802.5 312.9 L801.6 312.9 L801.6 312.7 L800.7 312.7 L800.7 315.3 L799.8 315.3 L799.8 316.0 L798.9 316.0 L798.9 315.4 L798.0 315.4 L798.0 317.6 L797.1 317.6 L797.1 321.7 L796.2 321.7 L796.2 315.8 L795.3 315.8 L795.3 316.9 L794.4 316.9 L794.4 314.9 L793.5 314.9 L793.5 310.3 L792.6 310.3 L792.6 310.6 L791.7 310.6 L791.7 316.6 L790.8 316.6 L790.8 316.5 L789.8 316.5 L789.8 315.3 L788.9 315.3 L788.9 316.6 L788.0 316.6 L788.0 314.6 L787.1 314.6 L787.1 317.2 L786.2 317.2 L786.2 317.0 L785.3 317.0 L785.3 317.7 L784.4 317.7 L784.4 318.3 L783.5 318.3 L783.5 316.6 L782.6 316.6 L782.6 322.9 L781.7 322.9 Z" fill="#e2f1e7" stroke="none" stroke-width="1" />
<rect x="781.9" y="308.75" width="106.1" height="1.3" fill="#a3b2a8" />
<rect x="782.8" y="296.3" width="104.7" height="1" fill="rgba(205,225,210,0.36)" />
<text x="784.5" y="348.7" font-size="12.6" fill="#dbe8df" textLength="67.7" lengthAdjust="spacing">Carlos Ga...</text>
<path d="M861.4 339.9 Q864.2 335.2 866.4 335.4 C870.6 335.6 872.2 348.6 876.8 348.9 Q879.6 349.0 882.1 344.4" fill="none" stroke="#0a100b" stroke-width="1.5" stroke-linecap="round"/>
<circle cx="866.2" cy="338.2" r="1.5" fill="none" stroke="#0a100b" stroke-width="1.1"/>
<circle cx="877.1" cy="346.8" r="1.6" fill="none" stroke="#0a100b" stroke-width="1.1"/>
<rect x="889.2" y="289.3" width="56.5" height="68.4" rx="4.3" fill="#141b16" />
<rect x="890" y="290.2" width="54.9" height="66.6" rx="3.6" fill="#446b50" />
<rect x="890" y="327.6" width="54.9" height="1.1" fill="rgba(10,25,15,0.42)" />
<path d="M890.4 301.9 L891.3 301.9 L891.3 300.9 L892.2 300.9 L892.2 301.6 L893.1 301.6 L893.1 301.1 L894.1 301.1 L894.1 301.6 L895.0 301.6 L895.0 303.2 L895.9 303.2 L895.9 294.8 L896.8 294.8 L896.8 302.8 L897.7 302.8 L897.7 300.1 L898.6 300.1 L898.6 303.1 L899.5 303.1 L899.5 301.1 L900.4 301.1 L900.4 303.3 L901.4 303.3 L901.4 302.6 L902.3 302.6 L902.3 304.3 L903.2 304.3 L903.2 304.0 L904.1 304.0 L904.1 303.0 L905.0 303.0 L905.0 304.4 L905.9 304.4 L905.9 303.0 L906.8 303.0 L906.8 298.9 L907.8 298.9 L907.8 304.6 L908.7 304.6 L908.7 308.5 L909.6 308.5 L909.6 308.3 L910.5 308.3 L910.5 304.6 L911.4 304.6 L911.4 304.0 L912.3 304.0 L912.3 299.5 L913.2 299.5 L913.2 301.4 L914.2 301.4 L914.2 302.7 L915.1 302.7 L915.1 303.3 L916.0 303.3 L916.0 303.2 L916.9 303.2 L916.9 302.1 L917.8 302.1 L917.8 303.4 L918.7 303.4 L918.7 301.8 L919.6 301.8 L919.6 302.5 L920.5 302.5 L920.5 303.7 L921.5 303.7 L921.5 302.3 L922.4 302.3 L922.4 304.3 L923.3 304.3 L923.3 301.7 L924.2 301.7 L924.2 297.5 L925.1 297.5 L925.1 303.0 L926.0 303.0 L926.0 303.9 L926.9 303.9 L926.9 307.6 L927.9 307.6 L927.9 308.5 L928.8 308.5 L928.8 304.4 L929.7 304.4 L929.7 302.9 L930.6 302.9 L930.6 303.7 L931.5 303.7 L931.5 304.7 L932.4 304.7 L932.4 305.1 L933.3 305.1 L933.3 304.8 L934.3 304.8 L934.3 302.6 L935.2 302.6 L935.2 304.1 L936.1 304.1 L936.1 303.8 L937.0 303.8 L937.0 302.8 L937.9 302.8 L937.9 301.0 L938.8 301.0 L938.8 304.9 L939.7 304.9 L939.7 302.4 L940.6 302.4 L940.6 302.3 L941.6 302.3 L941.6 303.2 L942.5 303.2 L942.5 304.0 L943.4 304.0 L943.4 303.4 L944.3 303.4 L944.3 315.2 L943.4 315.2 L943.4 314.1 L942.5 314.1 L942.5 315.0 L941.6 315.0 L941.6 315.1 L940.6 315.1 L940.6 315.4 L939.7 315.4 L939.7 313.1 L938.8 313.1 L938.8 316.9 L937.9 316.9 L937.9 315.4 L937.0 315.4 L937.0 314.5 L936.1 314.5 L936.1 313.7 L935.2 313.7 L935.2 314.9 L934.3 314.9 L934.3 312.9 L933.3 312.9 L933.3 313.1 L932.4 313.1 L932.4 314.0 L931.5 314.0 L931.5 314.1 L930.6 314.1 L930.6 315.3 L929.7 315.3 L929.7 313.9 L928.8 313.9 L928.8 310.2 L927.9 310.2 L927.9 310.8 L926.9 310.8 L926.9 314.1 L926.0 314.1 L926.0 315.6 L925.1 315.6 L925.1 318.9 L924.2 318.9 L924.2 316.2 L923.3 316.2 L923.3 313.4 L922.4 313.4 L922.4 314.8 L921.5 314.8 L921.5 314.2 L920.5 314.2 L920.5 316.1 L919.6 316.1 L919.6 315.2 L918.7 315.2 L918.7 314.8 L917.8 314.8 L917.8 316.0 L916.9 316.0 L916.9 313.9 L916.0 313.9 L916.0 315.3 L915.1 315.3 L915.1 314.4 L914.2 314.4 L914.2 316.4 L913.2 316.4 L913.2 317.3 L912.3 317.3 L912.3 314.5 L911.4 314.5 L911.4 313.0 L910.5 313.0 L910.5 310.3 L909.6 310.3 L909.6 310.1 L908.7 310.1 L908.7 313.2 L907.8 313.2 L907.8 317.2 L906.8 317.2 L906.8 315.7 L905.9 315.7 L905.9 313.9 L905.0 313.9 L905.0 314.7 L904.1 314.7 L904.1 313.8 L903.2 313.8 L903.2 314.0 L902.3 314.0 L902.3 314.6 L901.4 314.6 L901.4 314.8 L900.4 314.8 L900.4 315.6 L899.5 315.6 L899.5 314.6 L898.6 314.6 L898.6 316.2 L897.7 316.2 L897.7 314.3 L896.8 314.3 L896.8 322.1 L895.9 322.1 L895.9 314.1 L895.0 314.1 L895.0 316.0 L894.1 316.0 L894.1 317.6 L893.1 317.6 L893.1 316.0 L892.2 316.0 L892.2 317.5 L891.3 317.5 L891.3 315.6 L890.4 315.6 Z" fill="#e2f1e7" stroke="none" stroke-width="1" />
<rect x="890.6" y="308.75" width="54.1" height="1.3" fill="#a3b2a8" />
<text x="892.8" y="348.7" font-size="12.6" fill="#dbe8df" textLength="42.3" lengthAdjust="spacing">Carlo...</text>
<rect x="945.5" y="289.3" width="29.3" height="68.4" rx="4.3" fill="#141b16" />
<rect x="946.3" y="290.2" width="27.7" height="66.6" rx="3.6" fill="#446b50" />
<rect x="946.3" y="327.6" width="27.7" height="1.1" fill="rgba(10,25,15,0.42)" />
<path d="M946.7 303.9 L947.6 303.9 L947.6 303.2 L948.5 303.2 L948.5 303.5 L949.5 303.5 L949.5 303.6 L950.4 303.6 L950.4 304.2 L951.3 304.2 L951.3 308.5 L952.2 308.5 L952.2 308.4 L953.1 308.4 L953.1 303.9 L954.1 303.9 L954.1 302.7 L955.0 302.7 L955.0 304.7 L955.9 304.7 L955.9 302.5 L956.8 302.5 L956.8 303.2 L957.7 303.2 L957.7 305.2 L958.7 305.2 L958.7 303.2 L959.6 303.2 L959.6 304.2 L960.5 304.2 L960.5 304.2 L961.4 304.2 L961.4 305.4 L962.4 305.4 L962.4 304.0 L963.3 304.0 L963.3 306.2 L964.2 306.2 L964.2 305.0 L965.1 305.0 L965.1 305.4 L966.0 305.4 L966.0 305.6 L967.0 305.6 L967.0 306.8 L967.9 306.8 L967.9 304.0 L968.8 304.0 L968.8 304.6 L969.7 304.6 L969.7 302.8 L970.6 302.8 L970.6 304.7 L971.6 304.7 L971.6 304.8 L972.5 304.8 L972.5 304.5 L973.4 304.5 L973.4 313.4 L972.5 313.4 L972.5 313.9 L971.6 313.9 L971.6 313.2 L970.6 313.2 L970.6 315.3 L969.7 315.3 L969.7 313.6 L968.8 313.6 L968.8 314.3 L967.9 314.3 L967.9 311.6 L967.0 311.6 L967.0 312.3 L966.0 312.3 L966.0 312.5 L965.1 312.5 L965.1 313.2 L964.2 313.2 L964.2 311.9 L963.3 311.9 L963.3 313.5 L962.4 313.5 L962.4 313.1 L961.4 313.1 L961.4 313.8 L960.5 313.8 L960.5 313.5 L959.6 313.5 L959.6 314.6 L958.7 314.6 L958.7 313.1 L957.7 313.1 L957.7 315.4 L956.8 315.4 L956.8 315.5 L955.9 315.5 L955.9 313.4 L955.0 313.4 L955.0 315.8 L954.1 315.8 L954.1 313.4 L953.1 313.4 L953.1 310.2 L952.2 310.2 L952.2 310.1 L951.3 310.1 L951.3 313.7 L950.4 313.7 L950.4 314.5 L949.5 314.5 L949.5 314.3 L948.5 314.3 L948.5 313.9 L947.6 313.9 L947.6 313.8 L946.7 313.8 Z" fill="#e2f1e7" stroke="none" stroke-width="1" />
<rect x="946.9" y="308.75" width="26.9" height="1.3" fill="#a3b2a8" />
<rect x="947.8" y="296.3" width="25.5" height="1" fill="rgba(205,225,210,0.36)" />
<rect x="982.4" y="289.3" width="14" height="68.4" rx="4.3" fill="#141b16" />
<rect x="983.2" y="290.2" width="12.4" height="66.6" rx="3.6" fill="#446b50" />
<rect x="983.2" y="327.6" width="12.4" height="1.1" fill="rgba(10,25,15,0.42)" />
<rect x="996.4" y="289.3" width="70.4" height="68.4" rx="4.3" fill="#141b16" />
<rect x="997.2" y="290.2" width="68.8" height="66.6" rx="3.6" fill="#446b50" />
<rect x="997.2" y="327.6" width="68.8" height="1.1" fill="rgba(10,25,15,0.42)" />
<path d="M997.6 305.4 L998.5 305.4 L998.5 303.7 L999.4 303.7 L999.4 302.5 L1000.3 302.5 L1000.3 302.3 L1001.2 302.3 L1001.2 303.7 L1002.1 303.7 L1002.1 303.5 L1003.0 303.5 L1003.0 303.1 L1003.9 303.1 L1003.9 302.9 L1004.8 302.9 L1004.8 303.7 L1005.7 303.7 L1005.7 303.8 L1006.6 303.8 L1006.6 305.4 L1007.5 305.4 L1007.5 305.6 L1008.4 305.6 L1008.4 304.8 L1009.4 304.8 L1009.4 304.6 L1010.3 304.6 L1010.3 308.3 L1011.2 308.3 L1011.2 308.0 L1012.1 308.0 L1012.1 305.0 L1013.0 305.0 L1013.0 302.7 L1013.9 302.7 L1013.9 301.4 L1014.8 301.4 L1014.8 300.8 L1015.7 300.8 L1015.7 302.9 L1016.6 302.9 L1016.6 302.8 L1017.5 302.8 L1017.5 301.3 L1018.4 301.3 L1018.4 299.3 L1019.3 299.3 L1019.3 303.3 L1020.2 303.3 L1020.2 302.8 L1021.1 302.8 L1021.1 304.1 L1022.0 304.1 L1022.0 304.0 L1022.9 304.0 L1022.9 303.9 L1023.8 303.9 L1023.8 304.5 L1024.7 304.5 L1024.7 305.0 L1025.6 305.0 L1025.6 305.0 L1026.5 305.0 L1026.5 302.8 L1027.4 302.8 L1027.4 305.3 L1028.3 305.3 L1028.3 305.1 L1029.2 305.1 L1029.2 304.5 L1030.1 304.5 L1030.1 305.8 L1031.0 305.8 L1031.0 305.3 L1032.0 305.3 L1032.0 304.7 L1032.9 304.7 L1032.9 303.1 L1033.8 303.1 L1033.8 301.8 L1034.7 301.8 L1034.7 303.3 L1035.6 303.3 L1035.6 301.9 L1036.5 301.9 L1036.5 301.1 L1037.4 301.1 L1037.4 304.0 L1038.3 304.0 L1038.3 302.0 L1039.2 302.0 L1039.2 305.2 L1040.1 305.2 L1040.1 299.4 L1041.0 299.4 L1041.0 303.7 L1041.9 303.7 L1041.9 305.2 L1042.8 305.2 L1042.8 304.6 L1043.7 304.6 L1043.7 303.5 L1044.6 303.5 L1044.6 304.4 L1045.5 304.4 L1045.5 304.3 L1046.4 304.3 L1046.4 305.2 L1047.3 305.2 L1047.3 303.2 L1048.2 303.2 L1048.2 303.7 L1049.1 303.7 L1049.1 304.2 L1050.0 304.2 L1050.0 305.2 L1050.9 305.2 L1050.9 308.5 L1051.8 308.5 L1051.8 306.4 L1052.7 306.4 L1052.7 304.0 L1053.6 304.0 L1053.6 305.1 L1054.6 305.1 L1054.6 304.6 L1055.5 304.6 L1055.5 304.7 L1056.4 304.7 L1056.4 303.5 L1057.3 303.5 L1057.3 304.3 L1058.2 304.3 L1058.2 305.1 L1059.1 305.1 L1059.1 305.4 L1060.0 305.4 L1060.0 304.0 L1060.9 304.0 L1060.9 303.7 L1061.8 303.7 L1061.8 306.0 L1062.7 306.0 L1062.7 304.6 L1063.6 304.6 L1063.6 303.7 L1064.5 303.7 L1064.5 304.6 L1065.4 304.6 L1065.4 313.5 L1064.5 313.5 L1064.5 314.0 L1063.6 314.0 L1063.6 313.8 L1062.7 313.8 L1062.7 312.5 L1061.8 312.5 L1061.8 313.5 L1060.9 313.5 L1060.9 314.4 L1060.0 314.4 L1060.0 313.1 L1059.1 313.1 L1059.1 312.9 L1058.2 312.9 L1058.2 314.3 L1057.3 314.3 L1057.3 313.7 L1056.4 313.7 L1056.4 313.6 L1055.5 313.6 L1055.5 313.7 L1054.6 313.7 L1054.6 312.5 L1053.6 312.5 L1053.6 313.8 L1052.7 313.8 L1052.7 311.7 L1051.8 311.7 L1051.8 310.3 L1050.9 310.3 L1050.9 313.2 L1050.0 313.2 L1050.0 313.4 L1049.1 313.4 L1049.1 313.6 L1048.2 313.6 L1048.2 315.3 L1047.3 315.3 L1047.3 312.5 L1046.4 312.5 L1046.4 314.3 L1045.5 314.3 L1045.5 313.1 L1044.6 313.1 L1044.6 314.8 L1043.7 314.8 L1043.7 312.9 L1042.8 312.9 L1042.8 312.8 L1041.9 312.8 L1041.9 314.1 L1041.0 314.1 L1041.0 318.2 L1040.1 318.2 L1040.1 312.8 L1039.2 312.8 L1039.2 316.8 L1038.3 316.8 L1038.3 314.4 L1037.4 314.4 L1037.4 316.8 L1036.5 316.8 L1036.5 315.9 L1035.6 315.9 L1035.6 315.4 L1034.7 315.4 L1034.7 315.4 L1033.8 315.4 L1033.8 314.7 L1032.9 314.7 L1032.9 313.8 L1032.0 313.8 L1032.0 312.8 L1031.0 312.8 L1031.0 312.4 L1030.1 312.4 L1030.1 313.0 L1029.2 313.0 L1029.2 313.1 L1028.3 313.1 L1028.3 312.8 L1027.4 312.8 L1027.4 315.7 L1026.5 315.7 L1026.5 313.4 L1025.6 313.4 L1025.6 313.7 L1024.7 313.7 L1024.7 313.4 L1023.8 313.4 L1023.8 313.8 L1022.9 313.8 L1022.9 314.5 L1022.0 314.5 L1022.0 313.4 L1021.1 313.4 L1021.1 315.3 L1020.2 315.3 L1020.2 314.2 L1019.3 314.2 L1019.3 318.4 L1018.4 318.4 L1018.4 317.3 L1017.5 317.3 L1017.5 315.1 L1016.6 315.1 L1016.6 314.5 L1015.7 314.5 L1015.7 316.7 L1014.8 316.7 L1014.8 317.1 L1013.9 317.1 L1013.9 314.8 L1013.0 314.8 L1013.0 313.3 L1012.1 313.3 L1012.1 310.4 L1011.2 310.4 L1011.2 310.4 L1010.3 310.4 L1010.3 313.3 L1009.4 313.3 L1009.4 313.7 L1008.4 313.7 L1008.4 312.6 L1007.5 312.6 L1007.5 312.8 L1006.6 312.8 L1006.6 314.5 L1005.7 314.5 L1005.7 313.7 L1004.8 313.7 L1004.8 314.6 L1003.9 314.6 L1003.9 315.7 L1003.0 315.7 L1003.0 314.1 L1002.1 314.1 L1002.1 313.9 L1001.2 313.9 L1001.2 314.5 L1000.3 314.5 L1000.3 316.0 L999.4 316.0 L999.4 314.7 L998.5 314.7 L998.5 313.0 L997.6 313.0 Z" fill="#e2f1e7" stroke="none" stroke-width="1" />
<rect x="997.8" y="308.75" width="68" height="1.3" fill="#a3b2a8" />
<text x="1001.5" y="348.7" font-size="12.6" fill="#dbe8df" textLength="28" lengthAdjust="spacing">2ja...</text>
<path d="M1039.2 339.9 Q1042.0 335.2 1044.2 335.4 C1048.4 335.6 1050.0 348.6 1054.6 348.9 Q1057.4 349.0 1059.9 344.4" fill="none" stroke="#0a100b" stroke-width="1.5" stroke-linecap="round"/>
<circle cx="1044.0" cy="338.2" r="1.5" fill="none" stroke="#0a100b" stroke-width="1.1"/>
<circle cx="1054.9" cy="346.8" r="1.6" fill="none" stroke="#0a100b" stroke-width="1.1"/>
<rect x="1066.8" y="289.3" width="95.2" height="68.4" rx="4.3" fill="#141b16" />
<rect x="1067.6" y="290.2" width="93.6" height="66.6" rx="3.6" fill="#446b50" />
<rect x="1067.6" y="327.6" width="93.6" height="1.1" fill="rgba(10,25,15,0.42)" />
<path d="M1068.0 306.2 L1068.9 306.2 L1068.9 303.9 L1069.8 303.9 L1069.8 303.3 L1070.7 303.3 L1070.7 305.3 L1071.6 305.3 L1071.6 304.9 L1072.5 304.9 L1072.5 304.6 L1073.4 304.6 L1073.4 304.0 L1074.4 304.0 L1074.4 304.4 L1075.3 304.4 L1075.3 301.2 L1076.2 301.2 L1076.2 306.3 L1077.1 306.3 L1077.1 302.1 L1078.0 302.1 L1078.0 306.4 L1078.9 306.4 L1078.9 306.0 L1079.8 306.0 L1079.8 305.3 L1080.7 305.3 L1080.7 303.5 L1081.6 303.5 L1081.6 301.9 L1082.5 301.9 L1082.5 299.1 L1083.4 299.1 L1083.4 301.5 L1084.3 301.5 L1084.3 297.4 L1085.2 297.4 L1085.2 303.2 L1086.2 303.2 L1086.2 302.3 L1087.1 302.3 L1087.1 302.6 L1088.0 302.6 L1088.0 300.7 L1088.9 300.7 L1088.9 301.5 L1089.8 301.5 L1089.8 303.0 L1090.7 303.0 L1090.7 304.5 L1091.6 304.5 L1091.6 300.7 L1092.5 300.7 L1092.5 302.7 L1093.4 302.7 L1093.4 304.7 L1094.3 304.7 L1094.3 304.8 L1095.2 304.8 L1095.2 304.0 L1096.1 304.0 L1096.1 301.9 L1097.1 301.9 L1097.1 304.9 L1098.0 304.9 L1098.0 305.1 L1098.9 305.1 L1098.9 308.4 L1099.8 308.4 L1099.8 308.2 L1100.7 308.2 L1100.7 303.3 L1101.6 303.3 L1101.6 304.0 L1102.5 304.0 L1102.5 303.4 L1103.4 303.4 L1103.4 303.2 L1104.3 303.2 L1104.3 305.1 L1105.2 305.1 L1105.2 304.8 L1106.1 304.8 L1106.1 305.3 L1107.0 305.3 L1107.0 302.5 L1107.9 302.5 L1107.9 300.8 L1108.9 300.8 L1108.9 302.3 L1109.8 302.3 L1109.8 301.1 L1110.7 301.1 L1110.7 301.4 L1111.6 301.4 L1111.6 303.4 L1112.5 303.4 L1112.5 302.0 L1113.4 302.0 L1113.4 303.8 L1114.3 303.8 L1114.3 305.6 L1115.2 305.6 L1115.2 300.4 L1116.1 300.4 L1116.1 303.5 L1117.0 303.5 L1117.0 304.2 L1117.9 304.2 L1117.9 304.5 L1118.8 304.5 L1118.8 305.9 L1119.7 305.9 L1119.7 306.7 L1120.7 306.7 L1120.7 304.0 L1121.6 304.0 L1121.6 297.2 L1122.5 297.2 L1122.5 300.4 L1123.4 300.4 L1123.4 302.0 L1124.3 302.0 L1124.3 301.7 L1125.2 301.7 L1125.2 302.5 L1126.1 302.5 L1126.1 304.7 L1127.0 304.7 L1127.0 304.8 L1127.9 304.8 L1127.9 303.7 L1128.8 303.7 L1128.8 302.9 L1129.7 302.9 L1129.7 303.4 L1130.6 303.4 L1130.6 304.5 L1131.5 304.5 L1131.5 297.9 L1132.5 297.9 L1132.5 304.9 L1133.4 304.9 L1133.4 303.0 L1134.3 303.0 L1134.3 305.0 L1135.2 305.0 L1135.2 305.1 L1136.1 305.1 L1136.1 303.5 L1137.0 303.5 L1137.0 300.3 L1137.9 300.3 L1137.9 304.7 L1138.8 304.7 L1138.8 304.8 L1139.7 304.8 L1139.7 303.1 L1140.6 303.1 L1140.6 306.4 L1141.5 306.4 L1141.5 306.6 L1142.4 306.6 L1142.4 302.6 L1143.4 302.6 L1143.4 303.4 L1144.3 303.4 L1144.3 303.7 L1145.2 303.7 L1145.2 301.5 L1146.1 301.5 L1146.1 301.5 L1147.0 301.5 L1147.0 301.6 L1147.9 301.6 L1147.9 302.3 L1148.8 302.3 L1148.8 304.9 L1149.7 304.9 L1149.7 302.7 L1150.6 302.7 L1150.6 304.0 L1151.5 304.0 L1151.5 303.3 L1152.4 303.3 L1152.4 297.0 L1153.3 297.0 L1153.3 303.5 L1154.2 303.5 L1154.2 300.7 L1155.2 300.7 L1155.2 299.5 L1156.1 299.5 L1156.1 303.2 L1157.0 303.2 L1157.0 300.4 L1157.9 300.4 L1157.9 300.2 L1158.8 300.2 L1158.8 301.2 L1159.7 301.2 L1159.7 302.6 L1160.6 302.6 L1160.6 315.3 L1159.7 315.3 L1159.7 316.2 L1158.8 316.2 L1158.8 316.2 L1157.9 316.2 L1157.9 317.0 L1157.0 317.0 L1157.0 315.2 L1156.1 315.2 L1156.1 316.9 L1155.2 316.9 L1155.2 315.6 L1154.2 315.6 L1154.2 314.6 L1153.3 314.6 L1153.3 321.2 L1152.4 321.2 L1152.4 313.8 L1151.5 313.8 L1151.5 313.4 L1150.6 313.4 L1150.6 315.1 L1149.7 315.1 L1149.7 312.9 L1148.8 312.9 L1148.8 315.8 L1147.9 315.8 L1147.9 316.4 L1147.0 316.4 L1147.0 316.4 L1146.1 316.4 L1146.1 316.4 L1145.2 316.4 L1145.2 313.9 L1144.3 313.9 L1144.3 313.8 L1143.4 313.8 L1143.4 316.0 L1142.4 316.0 L1142.4 311.5 L1141.5 311.5 L1141.5 311.9 L1140.6 311.9 L1140.6 315.0 L1139.7 315.0 L1139.7 313.4 L1138.8 313.4 L1138.8 313.1 L1137.9 313.1 L1137.9 316.9 L1137.0 316.9 L1137.0 314.5 L1136.1 314.5 L1136.1 312.6 L1135.2 312.6 L1135.2 313.6 L1134.3 313.6 L1134.3 314.6 L1133.4 314.6 L1133.4 313.9 L1132.5 313.9 L1132.5 318.9 L1131.5 318.9 L1131.5 313.9 L1130.6 313.9 L1130.6 314.9 L1129.7 314.9 L1129.7 315.6 L1128.8 315.6 L1128.8 313.7 L1127.9 313.7 L1127.9 313.4 L1127.0 313.4 L1127.0 313.6 L1126.1 313.6 L1126.1 316.1 L1125.2 316.1 L1125.2 316.9 L1124.3 316.9 L1124.3 314.8 L1123.4 314.8 L1123.4 317.0 L1122.5 317.0 L1122.5 319.6 L1121.6 319.6 L1121.6 314.5 L1120.7 314.5 L1120.7 311.7 L1119.7 311.7 L1119.7 312.2 L1118.8 312.2 L1118.8 314.2 L1117.9 314.2 L1117.9 314.2 L1117.0 314.2 L1117.0 315.1 L1116.1 315.1 L1116.1 316.0 L1115.2 316.0 L1115.2 313.1 L1114.3 313.1 L1114.3 314.5 L1113.4 314.5 L1113.4 316.0 L1112.5 316.0 L1112.5 314.1 L1111.6 314.1 L1111.6 315.9 L1110.7 315.9 L1110.7 317.3 L1109.8 317.3 L1109.8 315.4 L1108.9 315.4 L1108.9 315.9 L1107.9 315.9 L1107.9 314.4 L1107.0 314.4 L1107.0 312.8 L1106.1 312.8 L1106.1 313.5 L1105.2 313.5 L1105.2 313.2 L1104.3 313.2 L1104.3 314.7 L1103.4 314.7 L1103.4 315.1 L1102.5 315.1 L1102.5 314.0 L1101.6 314.0 L1101.6 314.1 L1100.7 314.1 L1100.7 310.5 L1099.8 310.5 L1099.8 310.3 L1098.9 310.3 L1098.9 313.3 L1098.0 313.3 L1098.0 313.1 L1097.1 313.1 L1097.1 315.7 L1096.1 315.7 L1096.1 313.9 L1095.2 313.9 L1095.2 313.8 L1094.3 313.8 L1094.3 313.4 L1093.4 313.4 L1093.4 316.0 L1092.5 316.0 L1092.5 315.9 L1091.6 315.9 L1091.6 314.2 L1090.7 314.2 L1090.7 314.1 L1089.8 314.1 L1089.8 315.7 L1088.9 315.7 L1088.9 317.0 L1088.0 317.0 L1088.0 314.3 L1087.1 314.3 L1087.1 315.3 L1086.2 315.3 L1086.2 314.7 L1085.2 314.7 L1085.2 320.8 L1084.3 320.8 L1084.3 316.5 L1083.4 316.5 L1083.4 318.9 L1082.5 318.9 L1082.5 315.1 L1081.6 315.1 L1081.6 314.4 L1080.7 314.4 L1080.7 313.0 L1079.8 313.0 L1079.8 312.1 L1078.9 312.1 L1078.9 312.2 L1078.0 312.2 L1078.0 315.5 L1077.1 315.5 L1077.1 311.7 L1076.2 311.7 L1076.2 316.8 L1075.3 316.8 L1075.3 313.5 L1074.4 313.5 L1074.4 313.6 L1073.4 313.6 L1073.4 313.9 L1072.5 313.9 L1072.5 312.8 L1071.6 312.8 L1071.6 313.3 L1070.7 313.3 L1070.7 314.6 L1069.8 314.6 L1069.8 314.4 L1068.9 314.4 L1068.9 311.9 L1068.0 311.9 Z" fill="#e2f1e7" stroke="none" stroke-width="1" />
<rect x="1068.2" y="308.75" width="92.8" height="1.3" fill="#a3b2a8" />
<rect x="1069.1" y="296.3" width="91.4" height="1" fill="rgba(205,225,210,0.36)" />
<text x="1071.7" y="348.7" font-size="12.6" fill="#dbe8df" textLength="51.7" lengthAdjust="spacing">Carlos ...</text>
<path d="M1134.4 339.9 Q1137.2 335.2 1139.4 335.4 C1143.6 335.6 1145.2 348.6 1149.8 348.9 Q1152.6 349.0 1155.1 344.4" fill="none" stroke="#0a100b" stroke-width="1.5" stroke-linecap="round"/>
<circle cx="1139.2" cy="338.2" r="1.5" fill="none" stroke="#0a100b" stroke-width="1.1"/>
<circle cx="1150.1" cy="346.8" r="1.6" fill="none" stroke="#0a100b" stroke-width="1.1"/>
<rect x="1188" y="289.3" width="16.3" height="68.4" rx="4.3" fill="#141b16" />
<rect x="1188.8" y="290.2" width="14.7" height="66.6" rx="3.6" fill="#54916b" />
<rect x="1188.8" y="327.6" width="14.7" height="1.1" fill="rgba(10,25,15,0.42)" />
<rect x="1204.2" y="289.3" width="18.8" height="68.4" rx="4.3" fill="#141b16" />
<rect x="1205" y="290.2" width="17.2" height="66.6" rx="3.6" fill="#446b50" />
<rect x="1205" y="327.6" width="17.2" height="1.1" fill="rgba(10,25,15,0.42)" />
<path d="M1205.4 303.6 L1206.3 303.6 L1206.3 302.9 L1207.2 302.9 L1207.2 303.6 L1208.1 303.6 L1208.1 303.1 L1209.0 303.1 L1209.0 304.2 L1209.9 304.2 L1209.9 303.7 L1210.8 303.7 L1210.8 305.5 L1211.7 305.5 L1211.7 305.0 L1212.6 305.0 L1212.6 305.5 L1213.5 305.5 L1213.5 306.1 L1214.4 306.1 L1214.4 308.4 L1215.3 308.4 L1215.3 304.8 L1216.2 304.8 L1216.2 303.0 L1217.1 303.0 L1217.1 302.0 L1218.0 302.0 L1218.0 302.1 L1218.9 302.1 L1218.9 304.5 L1219.8 304.5 L1219.8 302.8 L1220.7 302.8 L1220.7 302.9 L1221.6 302.9 L1221.6 315.7 L1220.7 315.7 L1220.7 315.0 L1219.8 315.0 L1219.8 313.3 L1218.9 313.3 L1218.9 314.9 L1218.0 314.9 L1218.0 315.2 L1217.1 315.2 L1217.1 314.9 L1216.2 314.9 L1216.2 313.5 L1215.3 313.5 L1215.3 310.4 L1214.4 310.4 L1214.4 312.6 L1213.5 312.6 L1213.5 312.9 L1212.6 312.9 L1212.6 313.7 L1211.7 313.7 L1211.7 313.2 L1210.8 313.2 L1210.8 313.8 L1209.9 313.8 L1209.9 314.4 L1209.0 314.4 L1209.0 314.2 L1208.1 314.2 L1208.1 314.0 L1207.2 314.0 L1207.2 315.8 L1206.3 315.8 L1206.3 313.8 L1205.4 313.8 Z" fill="#e2f1e7" stroke="none" stroke-width="1" />
<rect x="1205.6" y="308.75" width="16.4" height="1.3" fill="#a3b2a8" />
<rect x="1222.6" y="289.3" width="62.6" height="68.4" rx="4.3" fill="#141b16" />
<rect x="1223.4" y="290.2" width="61" height="66.6" rx="3.6" fill="#446b50" />
<rect x="1223.4" y="327.6" width="61" height="1.1" fill="rgba(10,25,15,0.42)" />
<path d="M1223.8 305.9 L1224.7 305.9 L1224.7 303.9 L1225.6 303.9 L1225.6 303.7 L1226.5 303.7 L1226.5 301.5 L1227.4 301.5 L1227.4 304.8 L1228.3 304.8 L1228.3 303.8 L1229.3 303.8 L1229.3 305.0 L1230.2 305.0 L1230.2 306.4 L1231.1 306.4 L1231.1 304.5 L1232.0 304.5 L1232.0 305.0 L1232.9 305.0 L1232.9 306.2 L1233.8 306.2 L1233.8 306.6 L1234.7 306.6 L1234.7 305.9 L1235.6 305.9 L1235.6 306.6 L1236.5 306.6 L1236.5 305.9 L1237.4 305.9 L1237.4 306.2 L1238.3 306.2 L1238.3 302.7 L1239.3 302.7 L1239.3 303.7 L1240.2 303.7 L1240.2 303.7 L1241.1 303.7 L1241.1 305.5 L1242.0 305.5 L1242.0 305.5 L1242.9 305.5 L1242.9 306.0 L1243.8 306.0 L1243.8 306.2 L1244.7 306.2 L1244.7 300.7 L1245.6 300.7 L1245.6 304.9 L1246.5 304.9 L1246.5 305.5 L1247.4 305.5 L1247.4 305.5 L1248.3 305.5 L1248.3 306.0 L1249.3 306.0 L1249.3 306.1 L1250.2 306.1 L1250.2 307.1 L1251.1 307.1 L1251.1 306.0 L1252.0 306.0 L1252.0 306.0 L1252.9 306.0 L1252.9 304.3 L1253.8 304.3 L1253.8 300.3 L1254.7 300.3 L1254.7 301.2 L1255.6 301.2 L1255.6 300.9 L1256.5 300.9 L1256.5 302.7 L1257.4 302.7 L1257.4 302.1 L1258.3 302.1 L1258.3 303.7 L1259.3 303.7 L1259.3 304.8 L1260.2 304.8 L1260.2 304.8 L1261.1 304.8 L1261.1 302.5 L1262.0 302.5 L1262.0 304.3 L1262.9 304.3 L1262.9 302.6 L1263.8 302.6 L1263.8 304.5 L1264.7 304.5 L1264.7 302.6 L1265.6 302.6 L1265.6 300.1 L1266.5 300.1 L1266.5 305.1 L1267.4 305.1 L1267.4 302.7 L1268.3 302.7 L1268.3 303.5 L1269.3 303.5 L1269.3 301.0 L1270.2 301.0 L1270.2 303.5 L1271.1 303.5 L1271.1 304.8 L1272.0 304.8 L1272.0 305.5 L1272.9 305.5 L1272.9 305.1 L1273.8 305.1 L1273.8 305.4 L1274.7 305.4 L1274.7 301.2 L1275.6 301.2 L1275.6 302.2 L1276.5 302.2 L1276.5 302.7 L1277.4 302.7 L1277.4 302.8 L1278.3 302.8 L1278.3 302.3 L1279.3 302.3 L1279.3 301.3 L1280.2 301.3 L1280.2 301.8 L1281.1 301.8 L1281.1 302.8 L1282.0 302.8 L1282.0 303.6 L1282.9 303.6 L1282.9 303.8 L1283.8 303.8 L1283.8 313.9 L1282.9 313.9 L1282.9 315.1 L1282.0 315.1 L1282.0 314.5 L1281.1 314.5 L1281.1 315.8 L1280.2 315.8 L1280.2 316.0 L1279.3 316.0 L1279.3 315.0 L1278.3 315.0 L1278.3 315.3 L1277.4 315.3 L1277.4 315.2 L1276.5 315.2 L1276.5 316.5 L1275.6 316.5 L1275.6 315.6 L1274.7 315.6 L1274.7 313.1 L1273.8 313.1 L1273.8 313.1 L1272.9 313.1 L1272.9 313.1 L1272.0 313.1 L1272.0 313.4 L1271.1 313.4 L1271.1 314.9 L1270.2 314.9 L1270.2 317.7 L1269.3 317.7 L1269.3 313.7 L1268.3 313.7 L1268.3 315.0 L1267.4 315.0 L1267.4 312.6 L1266.5 312.6 L1266.5 318.5 L1265.6 318.5 L1265.6 314.4 L1264.7 314.4 L1264.7 313.9 L1263.8 313.9 L1263.8 314.5 L1262.9 314.5 L1262.9 313.9 L1262.0 313.9 L1262.0 315.5 L1261.1 315.5 L1261.1 313.9 L1260.2 313.9 L1260.2 313.7 L1259.3 313.7 L1259.3 314.0 L1258.3 314.0 L1258.3 314.7 L1257.4 314.7 L1257.4 315.3 L1256.5 315.3 L1256.5 316.1 L1255.6 316.1 L1255.6 315.9 L1254.7 315.9 L1254.7 316.9 L1253.8 316.9 L1253.8 314.0 L1252.9 314.0 L1252.9 312.7 L1252.0 312.7 L1252.0 312.6 L1251.1 312.6 L1251.1 311.5 L1250.2 311.5 L1250.2 312.7 L1249.3 312.7 L1249.3 312.3 L1248.3 312.3 L1248.3 312.8 L1247.4 312.8 L1247.4 312.2 L1246.5 312.2 L1246.5 313.3 L1245.6 313.3 L1245.6 316.4 L1244.7 316.4 L1244.7 311.9 L1243.8 311.9 L1243.8 312.3 L1242.9 312.3 L1242.9 312.3 L1242.0 312.3 L1242.0 312.9 L1241.1 312.9 L1241.1 314.0 L1240.2 314.0 L1240.2 313.9 L1239.3 313.9 L1239.3 314.6 L1238.3 314.6 L1238.3 311.8 L1237.4 311.8 L1237.4 312.6 L1236.5 312.6 L1236.5 312.1 L1235.6 312.1 L1235.6 312.9 L1234.7 312.9 L1234.7 311.9 L1233.8 311.9 L1233.8 312.4 L1232.9 312.4 L1232.9 312.7 L1232.0 312.7 L1232.0 314.1 L1231.1 314.1 L1231.1 311.8 L1230.2 311.8 L1230.2 313.6 L1229.3 313.6 L1229.3 313.5 L1228.3 313.5 L1228.3 313.6 L1227.4 313.6 L1227.4 315.5 L1226.5 315.5 L1226.5 314.4 L1225.6 314.4 L1225.6 313.6 L1224.7 313.6 L1224.7 312.5 L1223.8 312.5 Z" fill="#e2f1e7" stroke="none" stroke-width="1" />
<rect x="1224" y="308.75" width="60.2" height="1.3" fill="#a3b2a8" />
<rect x="1224.9" y="296.3" width="58.8" height="1" fill="rgba(205,225,210,0.36)" />
<text x="1226.7" y="348.7" font-size="12.6" fill="#dbe8df" textLength="18.6" lengthAdjust="spacing">C...</text>
<path d="M1257.6 339.9 Q1260.4 335.2 1262.6 335.4 C1266.8 335.6 1268.4 348.6 1273.0 348.9 Q1275.8 349.0 1278.3 344.4" fill="none" stroke="#0a100b" stroke-width="1.5" stroke-linecap="round"/>
<circle cx="1262.4" cy="338.2" r="1.5" fill="none" stroke="#0a100b" stroke-width="1.1"/>
<circle cx="1273.3" cy="346.8" r="1.6" fill="none" stroke="#0a100b" stroke-width="1.1"/>
<rect x="1285.1" y="289.3" width="13.6" height="68.4" rx="4.3" fill="#141b16" />
<rect x="1285.9" y="290.2" width="12" height="66.6" rx="3.6" fill="#446b50" />
<rect x="1285.9" y="327.6" width="12" height="1.1" fill="rgba(10,25,15,0.42)" />
<rect x="1301.1" y="289.3" width="13.8" height="68.4" rx="4.3" fill="#141b16" />
<rect x="1301.9" y="290.2" width="12.2" height="66.6" rx="3.6" fill="#446b50" />
<rect x="1301.9" y="327.6" width="12.2" height="1.1" fill="rgba(10,25,15,0.42)" />
<rect x="1314.8" y="289.3" width="24.5" height="68.4" rx="4.3" fill="#141b16" />
<rect x="1315.6" y="290.2" width="22.9" height="66.6" rx="3.6" fill="#446b50" />
<rect x="1315.6" y="327.6" width="22.9" height="1.1" fill="rgba(10,25,15,0.42)" />
<path d="M1316.0 303.5 L1316.9 303.5 L1316.9 304.6 L1317.8 304.6 L1317.8 301.4 L1318.7 301.4 L1318.7 303.7 L1319.6 303.7 L1319.7 304.6 L1320.6 304.6 L1320.6 302.8 L1321.5 302.8 L1321.5 304.2 L1322.4 304.2 L1322.4 304.0 L1323.3 304.0 L1323.3 305.4 L1324.2 305.4 L1324.2 304.5 L1325.1 304.5 L1325.1 303.6 L1326.0 303.6 L1326.0 303.7 L1327.0 303.7 L1327.0 303.5 L1327.9 303.5 L1327.9 301.7 L1328.8 301.7 L1328.8 302.8 L1329.7 302.8 L1329.7 298.6 L1330.6 298.6 L1330.6 303.3 L1331.5 303.3 L1331.5 303.2 L1332.4 303.2 L1332.4 302.8 L1333.3 302.8 L1333.3 303.6 L1334.2 303.6 L1334.2 304.2 L1335.2 304.2 L1335.2 299.8 L1336.1 299.8 L1336.1 303.2 L1337.0 303.2 L1337.0 303.4 L1337.9 303.4 L1337.9 314.8 L1337.0 314.8 L1337.0 314.7 L1336.1 314.7 L1336.1 318.6 L1335.2 318.6 L1335.2 313.7 L1334.2 313.7 L1334.2 313.6 L1333.3 313.6 L1333.3 316.0 L1332.4 316.0 L1332.4 314.5 L1331.5 314.5 L1331.5 315.1 L1330.6 315.1 L1330.6 318.2 L1329.7 318.2 L1329.7 314.8 L1328.8 314.8 L1328.8 315.3 L1327.9 315.3 L1327.9 313.9 L1327.0 313.9 L1327.0 313.9 L1326.0 313.9 L1326.0 314.8 L1325.1 314.8 L1325.1 314.0 L1324.2 314.0 L1324.2 313.3 L1323.3 313.3 L1323.3 313.6 L1322.4 313.6 L1322.4 313.9 L1321.5 313.9 L1321.5 315.3 L1320.6 315.3 L1320.6 313.8 L1319.7 313.8 L1319.6 313.9 L1318.7 313.9 L1318.7 316.8 L1317.8 316.8 L1317.8 314.0 L1316.9 314.0 L1316.9 314.6 L1316.0 314.6 Z" fill="#e2f1e7" stroke="none" stroke-width="1" />
<rect x="1316.2" y="308.75" width="22.1" height="1.3" fill="#a3b2a8" />
<rect x="1339.2" y="289.3" width="4.8" height="68.4" rx="0.3" fill="#141b16" />
<rect x="1340" y="290.2" width="3.2" height="66.6" fill="#446b50" />
<rect x="1340" y="327.6" width="3.2" height="1.1" fill="rgba(10,25,15,0.42)" />
<rect x="1343.9" y="289.3" width="28.8" height="68.4" rx="4.3" fill="#141b16" />
<rect x="1344.7" y="290.2" width="27.2" height="66.6" rx="3.6" fill="#446b50" />
<rect x="1344.7" y="327.6" width="27.2" height="1.1" fill="rgba(10,25,15,0.42)" />
<path d="M1345.1 304.2 L1346.0 304.2 L1346.0 303.3 L1346.9 303.3 L1346.9 299.8 L1347.8 299.8 L1347.8 303.1 L1348.7 303.1 L1348.7 303.3 L1349.6 303.3 L1349.6 302.6 L1350.5 302.6 L1350.5 302.4 L1351.4 302.4 L1351.4 303.5 L1352.3 303.5 L1352.3 303.2 L1353.2 303.2 L1353.2 303.0 L1354.1 303.0 L1354.1 303.8 L1355.0 303.8 L1355.0 305.2 L1355.9 305.2 L1355.9 305.3 L1356.8 305.3 L1356.8 304.9 L1357.7 304.9 L1357.7 305.0 L1358.7 305.0 L1358.7 305.0 L1359.6 305.0 L1359.6 303.0 L1360.5 303.0 L1360.5 304.1 L1361.4 304.1 L1361.4 302.3 L1362.3 302.3 L1362.3 302.6 L1363.2 302.6 L1363.2 305.3 L1364.1 305.3 L1364.1 305.2 L1365.0 305.2 L1365.0 303.4 L1365.9 303.4 L1365.9 305.5 L1366.8 305.5 L1366.8 302.3 L1367.7 302.3 L1367.7 304.1 L1368.6 304.1 L1368.6 304.0 L1369.5 304.0 L1369.5 305.2 L1370.4 305.2 L1370.4 304.2 L1371.3 304.2 L1371.3 313.8 L1370.4 313.8 L1370.4 313.4 L1369.5 313.4 L1369.5 314.3 L1368.6 314.3 L1368.6 314.2 L1367.7 314.2 L1367.7 316.3 L1366.8 316.3 L1366.8 313.1 L1365.9 313.1 L1365.9 314.4 L1365.0 314.4 L1365.0 312.4 L1364.1 312.4 L1364.1 312.6 L1363.2 312.6 L1363.2 314.4 L1362.3 314.4 L1362.3 314.8 L1361.4 314.8 L1361.4 313.4 L1360.5 313.4 L1360.5 315.3 L1359.6 315.3 L1359.6 312.6 L1358.7 312.6 L1358.7 312.7 L1357.7 312.7 L1357.7 313.6 L1356.8 313.6 L1356.8 313.0 L1355.9 313.0 L1355.9 312.9 L1355.0 312.9 L1355.0 315.0 L1354.1 315.0 L1354.1 315.0 L1353.2 315.0 L1353.2 314.7 L1352.3 314.7 L1352.3 314.2 L1351.4 314.2 L1351.4 314.6 L1350.5 314.6 L1350.5 314.8 L1349.6 314.8 L1349.6 315.2 L1348.7 315.2 L1348.7 315.3 L1347.8 315.3 L1347.8 316.5 L1346.9 316.5 L1346.9 314.3 L1346.0 314.3 L1346.0 313.8 L1345.1 313.8 Z" fill="#e2f1e7" stroke="none" stroke-width="1" />
<rect x="1345.3" y="308.75" width="26.4" height="1.3" fill="#a3b2a8" />
<rect x="1346.2" y="296.3" width="25" height="1" fill="rgba(205,225,210,0.36)" />
<rect x="1372.1" y="289.3" width="3.6" height="68.4" rx="0.3" fill="#141b16" />
<rect x="1372.9" y="290.2" width="2" height="66.6" fill="#446b50" />
<rect x="1372.9" y="327.6" width="2" height="1.1" fill="rgba(10,25,15,0.42)" />
<rect x="1375.2" y="289.3" width="29.6" height="68.4" rx="4.3" fill="#141b16" />
<rect x="1376" y="290.2" width="28" height="66.6" rx="3.6" fill="#446b50" />
<rect x="1376" y="327.6" width="28" height="1.1" fill="rgba(10,25,15,0.42)" />
<path d="M1376.4 304.3 L1377.3 304.3 L1377.3 303.0 L1378.2 303.0 L1378.2 302.0 L1379.1 302.0 L1379.1 300.7 L1380.0 300.7 L1380.0 304.6 L1380.9 304.6 L1380.9 304.1 L1381.8 304.1 L1381.8 303.9 L1382.7 303.9 L1382.7 303.4 L1383.6 303.4 L1383.6 296.0 L1384.5 296.0 L1384.5 300.9 L1385.4 300.9 L1385.4 303.1 L1386.3 303.1 L1386.3 303.8 L1387.2 303.8 L1387.2 302.5 L1388.1 302.5 L1388.1 303.7 L1389.0 303.7 L1389.0 301.9 L1389.9 301.9 L1389.9 302.5 L1390.8 302.5 L1390.8 302.4 L1391.7 302.4 L1391.7 301.8 L1392.6 301.8 L1392.6 301.9 L1393.5 301.9 L1393.5 302.0 L1394.4 302.0 L1394.4 304.1 L1395.3 304.1 L1395.3 297.9 L1396.2 297.9 L1396.2 302.3 L1397.1 302.3 L1397.1 302.3 L1398.0 302.3 L1398.0 302.0 L1398.9 302.0 L1398.9 304.8 L1399.8 304.8 L1399.8 305.5 L1400.7 305.5 L1400.7 303.7 L1401.6 303.7 L1401.6 303.3 L1402.5 303.3 L1402.5 304.4 L1403.4 304.4 L1403.4 313.2 L1402.5 313.2 L1402.5 313.8 L1401.6 313.8 L1401.6 313.6 L1400.7 313.6 L1400.7 313.1 L1399.8 313.1 L1399.8 313.9 L1398.9 313.9 L1398.9 316.0 L1398.0 316.0 L1398.0 315.1 L1397.1 315.1 L1397.1 315.9 L1396.2 315.9 L1396.2 319.4 L1395.3 319.4 L1395.3 313.9 L1394.4 313.9 L1394.4 315.1 L1393.5 315.1 L1393.5 316.5 L1392.6 316.5 L1392.6 316.7 L1391.7 316.7 L1391.7 315.6 L1390.8 315.6 L1390.8 315.2 L1389.9 315.2 L1389.9 316.3 L1389.0 316.3 L1389.0 314.3 L1388.1 314.3 L1388.1 315.8 L1387.2 315.8 L1387.2 314.4 L1386.3 314.4 L1386.3 314.8 L1385.4 314.8 L1385.4 317.8 L1384.5 317.8 L1384.5 322.6 L1383.6 322.6 L1383.6 314.5 L1382.7 314.5 L1382.7 313.8 L1381.8 313.8 L1381.8 313.6 L1380.9 313.6 L1380.9 314.0 L1380.0 314.0 L1380.0 317.1 L1379.1 317.1 L1379.1 316.7 L1378.2 316.7 L1378.2 315.0 L1377.3 315.0 L1377.3 314.1 L1376.4 314.1 Z" fill="#e2f1e7" stroke="none" stroke-width="1" />
<rect x="1376.6" y="308.75" width="27.2" height="1.3" fill="#a3b2a8" />
<rect x="1377.5" y="296.3" width="25.8" height="1" fill="rgba(205,225,210,0.36)" />
<rect x="1404.9" y="289.3" width="27.1" height="68.4" rx="4.3" fill="#141b16" />
<rect x="1405.7" y="290.2" width="25.5" height="66.6" rx="3.6" fill="#446b50" />
<rect x="1405.7" y="327.6" width="25.5" height="1.1" fill="rgba(10,25,15,0.42)" />
<path d="M1406.1 302.4 L1407.0 302.4 L1407.0 293.1 L1407.9 293.1 L1407.9 302.0 L1408.8 302.0 L1408.8 304.6 L1409.7 304.6 L1409.7 302.8 L1410.6 302.8 L1410.6 304.5 L1411.5 304.5 L1411.5 305.8 L1412.5 305.8 L1412.5 301.6 L1413.4 301.6 L1413.4 306.2 L1414.3 306.2 L1414.3 306.3 L1415.2 306.3 L1415.2 306.5 L1416.1 306.5 L1416.1 302.7 L1417.0 302.7 L1417.0 303.8 L1417.9 303.8 L1417.9 300.8 L1418.8 300.8 L1418.8 301.1 L1419.7 301.1 L1419.7 303.9 L1420.6 303.9 L1420.6 302.3 L1421.5 302.3 L1421.5 302.1 L1422.4 302.1 L1422.4 303.1 L1423.3 303.1 L1423.3 305.3 L1424.2 305.3 L1424.2 305.2 L1425.2 305.2 L1425.2 304.5 L1426.1 304.5 L1426.1 305.2 L1427.0 305.2 L1427.0 305.1 L1427.9 305.1 L1427.9 305.4 L1428.8 305.4 L1428.8 301.0 L1429.7 301.0 L1429.7 302.1 L1430.6 302.1 L1430.6 316.0 L1429.7 316.0 L1429.7 316.6 L1428.8 316.6 L1428.8 313.3 L1427.9 313.3 L1427.9 312.8 L1427.0 312.8 L1427.0 312.4 L1426.1 312.4 L1426.1 312.9 L1425.2 312.9 L1425.2 312.7 L1424.2 312.7 L1424.2 312.6 L1423.3 312.6 L1423.3 314.0 L1422.4 314.0 L1422.4 314.9 L1421.5 314.9 L1421.5 315.4 L1420.6 315.4 L1420.6 314.2 L1419.7 314.2 L1419.7 316.2 L1418.8 316.2 L1418.8 316.3 L1417.9 316.3 L1417.9 313.9 L1417.0 313.9 L1417.0 314.9 L1416.1 314.9 L1416.1 312.2 L1415.2 312.2 L1415.2 312.2 L1414.3 312.2 L1414.3 312.3 L1413.4 312.3 L1413.4 315.3 L1412.5 315.3 L1412.5 313.0 L1411.5 313.0 L1411.5 313.7 L1410.6 313.7 L1410.6 315.2 L1409.7 315.2 L1409.7 314.0 L1408.8 314.0 L1408.8 315.0 L1407.9 315.0 L1407.9 325.0 L1407.0 325.0 L1407.0 314.8 L1406.1 314.8 Z" fill="#e2f1e7" stroke="none" stroke-width="1" />
<rect x="1406.3" y="308.75" width="24.7" height="1.3" fill="#a3b2a8" />
<rect x="1407.2" y="296.3" width="23.3" height="1" fill="rgba(205,225,210,0.36)" />
<rect x="1431.7" y="289.3" width="18.5" height="68.4" rx="4.3" fill="#141b16" />
<rect x="1432.5" y="290.2" width="16.9" height="66.6" rx="3.6" fill="#446b50" />
<rect x="1432.5" y="327.6" width="16.9" height="1.1" fill="rgba(10,25,15,0.42)" />
<path d="M1432.9 303.0 L1433.8 303.0 L1433.8 303.1 L1434.8 303.1 L1434.8 303.8 L1435.7 303.8 L1435.7 303.6 L1436.6 303.6 L1436.6 301.8 L1437.6 301.8 L1437.6 300.9 L1438.5 300.9 L1438.5 303.4 L1439.4 303.4 L1439.4 303.1 L1440.4 303.1 L1440.4 303.6 L1441.3 303.6 L1441.3 304.3 L1442.3 304.3 L1442.3 302.8 L1443.2 302.8 L1443.2 303.3 L1444.1 303.3 L1444.1 303.7 L1445.1 303.7 L1445.1 303.0 L1446.0 303.0 L1446.0 299.1 L1446.9 299.1 L1446.9 301.9 L1447.9 301.9 L1447.9 303.4 L1448.8 303.4 L1448.8 315.1 L1447.9 315.1 L1447.9 316.4 L1446.9 316.4 L1446.9 317.0 L1446.0 317.0 L1446.0 314.5 L1445.1 314.5 L1445.1 313.5 L1444.1 313.5 L1444.1 314.8 L1443.2 314.8 L1443.2 314.4 L1442.3 314.4 L1442.3 314.4 L1441.3 314.4 L1441.3 313.6 L1440.4 313.6 L1440.4 314.2 L1439.4 314.2 L1439.4 314.1 L1438.5 314.1 L1438.5 316.0 L1437.6 316.0 L1437.6 316.0 L1436.6 316.0 L1436.6 314.8 L1435.7 314.8 L1435.7 314.0 L1434.8 314.0 L1434.8 314.8 L1433.8 314.8 L1433.8 315.7 L1432.9 315.7 Z" fill="#e2f1e7" stroke="none" stroke-width="1" />
<rect x="1433.1" y="308.75" width="16.1" height="1.3" fill="#a3b2a8" />
<rect x="1434" y="300" width="14.7" height="1" fill="rgba(205,225,210,0.36)" />
<rect x="555.1" y="290.2" width="1.4" height="66.6" fill="#0a0d0b" />
<line x1="556.3" y1="292.2" x2="556.3" y2="355.8" stroke="#c9d6cd" stroke-width="1" stroke-dasharray="4.2 3.4" opacity="0.85"/>
<rect x="269.6" y="359.3" width="49" height="68.7" rx="4.3" fill="#141b16" />
<rect x="270.4" y="360.2" width="47.4" height="66.9" rx="3.6" fill="#446b50" />
<rect x="270.4" y="397.9" width="47.4" height="1.1" fill="rgba(10,25,15,0.42)" />
<rect x="272" y="375" width="1.4" height="10.4" fill="#f1f8f3" />
<rect x="275" y="376" width="0.8" height="8.4" fill="#f1f8f3" />
<rect x="278" y="374.3" width="0.8" height="11.8" fill="#f1f8f3" />
<rect x="281" y="373.9" width="0.8" height="12.6" fill="#f1f8f3" />
<rect x="282.7" y="376" width="0.8" height="8.4" fill="#f1f8f3" />
<rect x="285.1" y="376" width="1.8" height="8.4" fill="#f1f8f3" />
<rect x="287.8" y="373.9" width="0.8" height="12.6" fill="#f1f8f3" />
<rect x="290.2" y="373.9" width="0.8" height="12.6" fill="#f1f8f3" />
<rect x="291.7" y="373.9" width="1" height="12.6" fill="#f1f8f3" />
<rect x="293.4" y="373.9" width="2.4" height="12.6" fill="#f1f8f3" />
<rect x="297.4" y="375" width="0.8" height="10.4" fill="#f1f8f3" />
<rect x="298.9" y="375" width="2.4" height="10.4" fill="#f1f8f3" />
<rect x="302.5" y="376.1" width="1.8" height="8.2" fill="#f1f8f3" />
<rect x="306.5" y="375.22" width="0.8" height="9.96" fill="#f1f8f3" />
<rect x="308.5" y="376.1" width="2.4" height="8.2" fill="#f1f8f3" />
<rect x="311.6" y="375.22" width="2.4" height="9.96" fill="#f1f8f3" />
<rect x="314.9" y="376.9" width="1.4" height="6.6" fill="#f1f8f3" />
<rect x="270.5" y="379.5" width="46.5" height="1" fill="#c6d2ca" />
<path d="M298.5 360.2 H314.8 Q317.8 360.2 317.8 363.2 V397.2 Z" fill="rgba(6,24,13,0.64)" stroke="none" stroke-width="1" />
<text x="276" y="418.7" font-size="12.6" fill="#dbe8df" textLength="31.3" lengthAdjust="spacing">202...</text>
<rect x="318.5" y="359.3" width="74.2" height="68.7" rx="4.3" fill="#141b16" />
<rect x="319.3" y="360.2" width="72.6" height="66.9" rx="3.6" fill="#54916b" />
<rect x="319.3" y="397.9" width="72.6" height="1.1" fill="rgba(10,25,15,0.42)" />
<path d="M322.5 378.8 L323.0 378.8 L323.5 378.8 L324.0 378.8 L324.5 378.8 L325.0 378.8 L325.5 378.8 L326.0 378.8 L326.5 378.8 L327.0 378.8 L327.5 378.8 L328.0 378.8 L328.5 378.8 L329.0 378.8 L329.5 378.8 L330.0 378.8 L330.5 378.8 L331.0 378.8 L331.5 378.8 L332.0 378.8 L332.5 378.8 L333.0 378.8 L333.5 378.8 L334.0 378.8 L334.5 378.8 L335.0 378.8 L335.5 378.8 L336.0 378.8 L336.5 378.8 L337.0 378.8 L337.5 378.8 L338.0 378.8 L338.5 378.8 L339.0 378.8 L339.5 378.8 L340.0 378.8 L340.5 378.8 L341.0 378.8 L341.5 378.8 L342.0 378.1 L342.5 377.9 L343.0 377.3 L343.5 378.1 L344.0 378.0 L344.5 377.9 L345.0 378.5 L345.5 378.0 L346.0 377.8 L346.5 377.5 L347.0 378.6 L347.5 378.3 L348.0 378.7 L348.5 377.5 L349.0 377.7 L349.5 378.7 L350.0 377.2 L350.5 377.3 L351.0 377.8 L351.5 377.8 L352.0 378.7 L352.5 378.2 L353.0 376.3 L353.5 376.5 L354.0 375.4 L354.5 374.5 L355.0 374.1 L355.5 372.5 L356.0 372.1 L356.5 370.9 L357.0 371.8 L357.5 371.5 L358.0 371.9 L358.5 371.4 L359.0 372.0 L359.5 372.6 L360.0 370.4 L360.5 370.4 L361.0 370.9 L361.5 371.3 L362.0 372.5 L362.5 372.7 L363.0 372.5 L363.5 373.2 L364.0 371.1 L364.5 372.2 L365.0 370.9 L365.5 372.2 L366.0 370.5 L366.5 370.9 L367.0 373.4 L367.5 372.8 L368.0 370.7 L368.5 372.0 L369.0 370.5 L369.5 372.2 L370.0 373.2 L370.5 371.5 L371.0 371.1 L371.5 372.6 L372.0 373.1 L372.5 372.4 L373.0 370.5 L373.5 371.1 L374.0 373.0 L374.5 372.7 L375.0 373.1 L375.5 373.2 L376.0 371.0 L376.5 372.9 L377.0 374.9 L377.5 375.1 L378.0 375.6 L378.5 374.5 L379.0 375.7 L379.5 374.7 L380.0 377.0 L380.5 376.5 L381.0 376.9 L381.5 376.8 L382.0 375.6 L382.5 375.9 L383.0 376.7 L383.5 375.8 L384.0 376.9 L384.5 376.6 L385.0 375.8 L385.5 376.2 L386.0 377.0 L386.5 375.6 L387.0 376.9 L387.5 376.8 L388.0 376.0 L388.5 376.7 L389.0 376.7 L389.5 377.1 L390.0 377.1 L390.5 376.3 L391.0 376.8 L391.0 383.0 L390.5 383.5 L390.0 382.8 L389.5 382.8 L389.0 383.1 L388.5 383.2 L388.0 383.8 L387.5 383.1 L387.0 383.0 L386.5 384.2 L386.0 382.8 L385.5 383.6 L385.0 384.0 L384.5 383.3 L384.0 383.0 L383.5 384.0 L383.0 383.1 L382.5 383.9 L382.0 384.1 L381.5 383.1 L381.0 383.0 L380.5 383.3 L380.0 382.8 L379.5 385.0 L379.0 384.0 L378.5 385.2 L378.0 384.2 L377.5 384.7 L377.0 384.9 L376.5 386.8 L376.0 388.5 L375.5 386.4 L375.0 386.6 L374.5 387.0 L374.0 386.6 L373.5 388.4 L373.0 389.0 L372.5 387.2 L372.0 386.5 L371.5 387.0 L371.0 388.5 L370.5 388.1 L370.0 386.5 L369.5 387.4 L369.0 389.1 L368.5 387.6 L368.0 388.9 L367.5 386.9 L367.0 386.3 L366.5 388.7 L366.0 389.0 L365.5 387.4 L365.0 388.7 L364.5 387.4 L364.0 388.5 L363.5 386.5 L363.0 387.1 L362.5 386.9 L362.0 387.2 L361.5 388.3 L361.0 388.7 L360.5 389.1 L360.0 389.1 L359.5 387.1 L359.0 387.6 L358.5 388.2 L358.0 387.7 L357.5 388.1 L357.0 387.7 L356.5 388.7 L356.0 387.5 L355.5 387.2 L355.0 385.6 L354.5 385.2 L354.0 384.4 L353.5 383.3 L353.0 383.5 L352.5 381.7 L352.0 381.2 L351.5 382.1 L351.0 382.1 L350.5 382.6 L350.0 382.6 L349.5 381.2 L349.0 382.2 L348.5 382.4 L348.0 381.3 L347.5 381.6 L347.0 381.3 L346.5 382.3 L346.0 382.1 L345.5 381.9 L345.0 381.4 L344.5 382.0 L344.0 381.9 L343.5 381.8 L343.0 382.5 L342.5 382.0 L342.0 381.8 L341.5 381.1 L341.0 381.1 L340.5 381.1 L340.0 381.1 L339.5 381.1 L339.0 381.1 L338.5 381.1 L338.0 381.1 L337.5 381.1 L337.0 381.1 L336.5 381.1 L336.0 381.1 L335.5 381.1 L335.0 381.1 L334.5 381.1 L334.0 381.1 L333.5 381.1 L333.0 381.1 L332.5 381.1 L332.0 381.1 L331.5 381.1 L331.0 381.1 L330.5 381.1 L330.0 381.1 L329.5 381.1 L329.0 381.1 L328.5 381.1 L328.0 381.1 L327.5 381.1 L327.0 381.1 L326.5 381.1 L326.0 381.1 L325.5 381.1 L325.0 381.1 L324.5 381.1 L324.0 381.1 L323.5 381.1 L323.0 381.1 L322.5 381.1 Z" fill="#e2f1e7" stroke="none" stroke-width="1" />
<rect x="320" y="379.5" width="71.5" height="1" fill="#a9b8ae" />
<rect x="320.5" y="375.4" width="24" height="0.9" fill="rgba(205,225,210,0.5)" />
<path d="M372.5 360.2 H388.9 Q391.9 360.2 391.9 363.2 V397.2 Z" fill="rgba(6,24,13,0.64)" stroke="none" stroke-width="1" />
<text x="323.8" y="418.7" font-size="12.6" fill="#dbe8df" textLength="61.9" lengthAdjust="spacing">2021-10-...</text>
<rect x="421" y="359.3" width="33.2" height="68.7" rx="4.3" fill="#141b16" />
<rect x="421.8" y="360.2" width="31.6" height="66.9" rx="3.6" fill="#446b50" />
<rect x="421.8" y="397.9" width="31.6" height="1.1" fill="rgba(10,25,15,0.42)" />
<path d="M423.4 378.6 L424.3 378.6 L424.3 378.8 L425.2 378.8 L425.2 378.8 L426.2 378.8 L426.2 378.8 L427.1 378.8 L427.1 378.8 L428.0 378.8 L428.0 378.6 L428.9 378.6 L428.9 378.0 L429.8 378.0 L429.8 378.8 L430.8 378.8 L430.8 378.7 L431.7 378.7 L431.7 378.8 L432.6 378.8 L432.6 378.8 L433.5 378.8 L433.5 378.8 L434.4 378.8 L434.4 378.8 L435.3 378.8 L435.3 378.8 L436.3 378.8 L436.3 378.7 L437.2 378.7 L437.2 378.8 L438.1 378.8 L438.1 378.8 L439.0 378.8 L439.0 378.8 L439.9 378.8 L439.9 378.8 L440.9 378.8 L440.9 378.7 L441.8 378.7 L441.8 378.8 L442.7 378.8 L442.7 378.8 L443.6 378.8 L443.6 378.8 L444.5 378.8 L444.5 377.5 L445.4 377.5 L445.4 378.4 L446.4 378.4 L446.4 378.0 L447.3 378.0 L447.3 377.9 L448.2 377.9 L448.2 378.5 L449.1 378.5 L449.1 378.0 L450.0 378.0 L450.0 378.7 L451.0 378.7 L451.0 377.6 L451.9 377.6 L451.9 377.5 L452.8 377.5 L452.8 382.7 L451.9 382.7 L451.9 382.7 L451.0 382.7 L451.0 382.0 L450.0 382.0 L450.0 382.4 L449.1 382.4 L449.1 382.2 L448.2 382.2 L448.2 382.7 L447.3 382.7 L447.3 382.3 L446.4 382.3 L446.4 382.3 L445.4 382.3 L445.4 383.3 L444.5 383.3 L444.5 382.0 L443.6 382.0 L443.6 382.0 L442.7 382.0 L442.7 382.0 L441.8 382.0 L441.8 382.0 L440.9 382.0 L440.9 382.0 L439.9 382.0 L439.9 382.0 L439.0 382.0 L439.0 382.0 L438.1 382.0 L438.1 382.0 L437.2 382.0 L437.2 382.0 L436.3 382.0 L436.3 382.0 L435.3 382.0 L435.3 382.0 L434.4 382.0 L434.4 382.0 L433.5 382.0 L433.5 382.0 L432.6 382.0 L432.6 382.0 L431.7 382.0 L431.7 382.0 L430.8 382.0 L430.8 382.0 L429.8 382.0 L429.8 382.2 L428.9 382.2 L428.9 382.2 L428.0 382.2 L428.0 382.0 L427.1 382.0 L427.1 382.0 L426.2 382.0 L426.2 382.0 L425.2 382.0 L425.2 382.0 L424.3 382.0 L424.3 382.0 L423.4 382.0 Z" fill="#e2f1e7" stroke="none" stroke-width="1" />
<rect x="422.4" y="379.6" width="30.6" height="1" fill="#a9b8ae" />
<path d="M435.2 360.2 H424.8 Q421.8 360.2 421.8 363.2 V398 Z" fill="rgba(6,24,13,0.64)" stroke="none" stroke-width="1" />
<rect x="529.1" y="359.3" width="12.9" height="68.7" rx="4.3" fill="#141b16" />
<rect x="529.9" y="360.2" width="11.3" height="66.9" rx="3.6" fill="#446b50" />
<rect x="529.9" y="397.9" width="11.3" height="1.1" fill="rgba(10,25,15,0.42)" />
<rect x="541.3" y="360.2" width="1.4" height="66.9" fill="#0a0d0b" />
<line x1="542.5" y1="362.2" x2="542.5" y2="426.1" stroke="#c9d6cd" stroke-width="1" stroke-dasharray="4.2 3.4" opacity="0.85"/>
<rect x="542.3" y="359.3" width="76.9" height="68.7" rx="4.3" fill="#141b16" />
<rect x="543.1" y="360.2" width="75.3" height="66.9" rx="3.6" fill="#446b50" />
<rect x="543.1" y="397.9" width="75.3" height="1.1" fill="rgba(10,25,15,0.42)" />
<path d="M544.0 378.0 L544.5 377.7 L545.0 377.5 L545.5 378.2 L546.0 377.7 L546.5 377.8 L547.0 377.8 L547.5 378.4 L548.0 377.8 L548.5 377.3 L549.0 376.8 L549.5 377.4 L550.0 377.1 L550.5 377.4 L551.0 376.6 L551.5 376.5 L552.0 377.2 L552.5 376.4 L553.0 377.7 L553.5 376.7 L554.0 376.6 L554.5 377.6 L555.0 376.8 L555.5 377.0 L556.0 376.5 L556.5 377.5 L557.0 377.0 L557.5 376.6 L558.0 374.7 L558.5 375.4 L559.0 375.8 L559.5 374.1 L560.0 373.8 L560.5 372.2 L561.0 374.8 L561.5 372.8 L562.0 372.8 L562.5 372.4 L563.0 375.1 L563.5 374.1 L564.0 375.0 L564.5 372.9 L565.0 374.1 L565.5 372.3 L566.0 374.1 L566.5 372.9 L567.0 372.6 L567.5 374.5 L568.0 373.5 L568.5 372.3 L569.0 373.6 L569.5 374.1 L570.0 374.4 L570.5 372.8 L571.0 374.6 L571.5 373.4 L572.0 373.5 L572.5 373.5 L573.0 374.8 L573.5 373.2 L574.0 372.5 L574.5 374.2 L575.0 374.2 L575.5 372.5 L576.0 373.5 L576.5 374.4 L577.0 375.2 L577.5 372.9 L578.0 374.2 L578.5 373.8 L579.0 374.4 L579.5 373.3 L580.0 373.0 L580.5 374.3 L581.0 375.0 L581.5 372.2 L582.0 372.5 L582.5 375.1 L583.0 373.5 L583.5 373.1 L584.0 374.0 L584.5 373.0 L585.0 372.3 L585.5 373.4 L586.0 374.0 L586.5 374.6 L587.0 374.4 L587.5 374.7 L588.0 374.9 L588.5 374.6 L589.0 372.7 L589.5 373.6 L590.0 372.8 L590.5 372.4 L591.0 372.8 L591.5 375.1 L592.0 372.4 L592.5 374.9 L593.0 372.9 L593.5 372.7 L594.0 373.2 L594.5 374.0 L595.0 375.0 L595.5 374.9 L596.0 373.3 L596.5 374.5 L597.0 373.6 L597.5 374.4 L598.0 374.7 L598.5 374.3 L599.0 373.0 L599.5 373.7 L600.0 374.0 L600.5 373.7 L601.0 373.5 L601.5 373.7 L602.0 373.9 L602.5 372.3 L603.0 372.9 L603.5 374.5 L604.0 374.2 L604.5 374.6 L605.0 374.1 L605.5 375.1 L606.0 373.0 L606.5 373.5 L607.0 373.9 L607.5 372.5 L608.0 374.2 L608.5 373.5 L609.0 372.4 L609.5 373.5 L610.0 373.4 L610.5 374.1 L611.0 372.2 L611.5 372.9 L612.0 374.3 L612.5 374.1 L613.0 373.4 L613.5 373.6 L614.0 373.6 L614.5 376.5 L615.0 376.5 L615.5 376.5 L616.0 376.5 L616.5 376.5 L617.0 376.5 L617.5 376.5 L617.5 383.4 L617.0 383.4 L616.5 383.4 L616.0 383.4 L615.5 383.4 L615.0 383.4 L614.5 383.4 L614.0 386.2 L613.5 386.2 L613.0 386.4 L612.5 385.7 L612.0 385.6 L611.5 386.9 L611.0 387.6 L610.5 385.8 L610.0 386.5 L609.5 386.3 L609.0 387.4 L608.5 386.4 L608.0 385.7 L607.5 387.3 L607.0 385.9 L606.5 386.4 L606.0 386.9 L605.5 384.8 L605.0 385.8 L604.5 385.3 L604.0 385.6 L603.5 385.4 L603.0 386.9 L602.5 387.5 L602.0 386.0 L601.5 386.2 L601.0 386.3 L600.5 386.1 L600.0 385.9 L599.5 386.1 L599.0 386.8 L598.5 385.6 L598.0 385.2 L597.5 385.5 L597.0 386.3 L596.5 385.4 L596.0 386.6 L595.5 385.0 L595.0 384.9 L594.5 385.9 L594.0 386.6 L593.5 387.2 L593.0 387.0 L592.5 385.0 L592.0 387.4 L591.5 384.8 L591.0 387.1 L590.5 387.4 L590.0 387.1 L589.5 386.3 L589.0 387.2 L588.5 385.3 L588.0 385.0 L587.5 385.1 L587.0 385.4 L586.5 385.3 L586.0 385.9 L585.5 386.4 L585.0 387.5 L584.5 386.9 L584.0 385.9 L583.5 386.7 L583.0 386.4 L582.5 384.8 L582.0 387.4 L581.5 387.6 L581.0 384.9 L580.5 385.6 L580.0 386.8 L579.5 386.6 L579.0 385.5 L578.5 386.1 L578.0 385.7 L577.5 386.9 L577.0 384.7 L576.5 385.5 L576.0 386.4 L575.5 387.4 L575.0 385.7 L574.5 385.6 L574.0 387.4 L573.5 386.6 L573.0 385.1 L572.5 386.3 L572.0 386.3 L571.5 386.5 L571.0 385.3 L570.5 387.0 L570.0 385.5 L569.5 385.8 L569.0 386.3 L568.5 387.5 L568.0 386.3 L567.5 385.4 L567.0 387.3 L566.5 387.0 L566.0 385.8 L565.5 387.5 L565.0 385.7 L564.5 386.9 L564.0 384.9 L563.5 385.8 L563.0 384.8 L562.5 387.4 L562.0 387.1 L561.5 387.1 L561.0 385.1 L560.5 387.6 L560.0 386.1 L559.5 385.8 L559.0 384.1 L558.5 384.5 L558.0 385.2 L557.5 383.4 L557.0 382.9 L556.5 382.4 L556.0 383.5 L555.5 382.9 L555.0 383.1 L554.5 382.4 L554.0 383.4 L553.5 383.3 L553.0 382.2 L552.5 383.5 L552.0 382.7 L551.5 383.5 L551.0 383.3 L550.5 382.6 L550.0 382.8 L549.5 382.5 L549.0 383.2 L548.5 382.7 L548.0 382.2 L547.5 381.6 L547.0 382.1 L546.5 382.2 L546.0 382.2 L545.5 381.8 L545.0 382.4 L544.5 382.3 L544.0 382.0 Z" fill="#e2f1e7" stroke="none" stroke-width="1" />
<rect x="543.6" y="379.5" width="74.4" height="1" fill="#a9b8ae" />
<path d="M567 360.2 H615.4 Q618.4 360.2 618.4 363.2 V397.6 Z" fill="rgba(6,24,13,0.64)" stroke="none" stroke-width="1" />
<text x="547.6" y="418.7" font-size="12.6" fill="#dbe8df" textLength="31.8" lengthAdjust="spacing">202...</text>
<path d="M591.6 409.9 Q594.4 405.2 596.6 405.4 C600.8 405.6 602.4 418.6 607.0 418.9 Q609.8 419.0 612.3 414.4" fill="none" stroke="#0a100b" stroke-width="1.5" stroke-linecap="round"/>
<circle cx="596.4" cy="408.2" r="1.5" fill="none" stroke="#0a100b" stroke-width="1.1"/>
<circle cx="607.3" cy="416.8" r="1.6" fill="none" stroke="#0a100b" stroke-width="1.1"/>
<rect x="658" y="359.3" width="129.6" height="68.7" rx="4.3" fill="#141b16" />
<rect x="658.8" y="360.2" width="128" height="66.9" rx="3.6" fill="#54916b" />
<rect x="658.8" y="397.9" width="128" height="1.1" fill="rgba(10,25,15,0.42)" />
<path d="M660.0 378.0 L660.9 378.0 L660.9 378.0 L661.8 378.0 L661.8 378.0 L662.7 378.0 L662.7 378.0 L663.6 378.0 L663.6 378.0 L664.5 378.0 L664.5 378.0 L665.4 378.0 L665.4 378.0 L666.3 378.0 L666.3 378.0 L667.2 378.0 L667.2 378.0 L668.1 378.0 L668.1 378.0 L669.0 378.0 L669.0 378.0 L669.9 378.0 L669.9 378.0 L670.8 378.0 L670.8 378.0 L671.7 378.0 L671.7 378.0 L672.6 378.0 L672.6 378.0 L673.5 378.0 L673.5 378.0 L674.4 378.0 L674.4 378.0 L675.3 378.0 L675.3 378.0 L676.2 378.0 L676.2 378.0 L677.1 378.0 L677.1 378.0 L678.0 378.0 L678.0 378.0 L678.9 378.0 L678.9 378.0 L679.8 378.0 L679.8 378.0 L680.7 378.0 L680.7 378.0 L681.6 378.0 L681.6 378.0 L682.5 378.0 L682.5 378.0 L683.4 378.0 L683.4 378.0 L684.3 378.0 L684.3 378.0 L685.2 378.0 L685.2 378.0 L686.1 378.0 L686.1 378.0 L687.0 378.0 L687.0 378.0 L687.9 378.0 L687.9 378.0 L688.8 378.0 L688.8 378.0 L689.7 378.0 L689.7 378.0 L690.6 378.0 L690.6 378.0 L691.6 378.0 L691.5 378.0 L692.5 378.0 L692.5 378.0 L693.4 378.0 L693.4 378.0 L694.3 378.0 L694.3 378.0 L695.2 378.0 L695.2 378.0 L696.1 378.0 L696.1 378.0 L697.0 378.0 L697.0 378.0 L697.9 378.0 L697.9 378.0 L698.8 378.0 L698.8 378.0 L699.7 378.0 L699.7 378.0 L700.6 378.0 L700.6 378.0 L701.5 378.0 L701.5 378.0 L702.4 378.0 L702.4 378.0 L703.3 378.0 L703.3 378.0 L704.2 378.0 L704.2 377.7 L705.1 377.7 L705.1 377.8 L706.0 377.8 L706.0 377.8 L706.9 377.8 L706.9 378.0 L707.8 378.0 L707.8 378.0 L708.7 378.0 L708.7 377.9 L709.6 377.9 L709.6 376.7 L710.5 376.7 L710.5 376.6 L711.4 376.6 L711.4 377.7 L712.3 377.7 L712.3 376.8 L713.2 376.8 L713.2 376.7 L714.1 376.7 L714.1 376.3 L715.0 376.3 L715.0 377.6 L715.9 377.6 L715.9 376.8 L716.8 376.8 L716.8 376.9 L717.7 376.9 L717.7 376.7 L718.6 376.7 L718.6 377.5 L719.5 377.5 L719.5 376.8 L720.4 376.8 L720.4 375.9 L721.3 375.9 L721.3 377.2 L722.2 377.2 L722.2 376.6 L723.1 376.6 L723.1 376.5 L724.0 376.5 L724.0 376.1 L724.9 376.1 L724.9 376.2 L725.8 376.2 L725.8 376.9 L726.7 376.9 L726.7 375.9 L727.6 375.9 L727.6 376.7 L728.5 376.7 L728.5 376.1 L729.4 376.1 L729.4 375.7 L730.3 375.7 L730.3 377.2 L731.2 377.2 L731.2 373.9 L732.1 373.9 L732.1 375.5 L733.0 375.5 L733.0 376.4 L733.9 376.4 L733.9 376.0 L734.8 376.0 L734.8 375.7 L735.7 375.7 L735.7 375.9 L736.6 375.9 L736.6 376.8 L737.5 376.8 L737.5 376.1 L738.4 376.1 L738.4 375.4 L739.3 375.4 L739.3 376.2 L740.2 376.2 L740.2 377.0 L741.1 377.0 L741.1 377.1 L742.0 377.1 L742.0 374.9 L742.9 374.9 L742.9 377.6 L743.8 377.6 L743.8 377.2 L744.7 377.2 L744.7 377.1 L745.6 377.1 L745.6 376.3 L746.5 376.3 L746.5 377.9 L747.4 377.9 L747.4 376.2 L748.3 376.2 L748.3 377.9 L749.2 377.9 L749.2 377.1 L750.1 377.1 L750.1 376.4 L751.0 376.4 L751.0 377.9 L751.9 377.9 L751.9 376.6 L752.8 376.6 L752.8 376.2 L753.7 376.2 L753.7 376.1 L754.7 376.1 L754.7 376.3 L755.6 376.3 L755.6 376.5 L756.5 376.5 L756.5 376.4 L757.4 376.4 L757.4 376.4 L758.3 376.4 L758.3 375.7 L759.2 375.7 L759.2 377.5 L760.1 377.5 L760.1 377.5 L761.0 377.5 L761.0 377.0 L761.9 377.0 L761.9 375.7 L762.8 375.7 L762.8 377.0 L763.7 377.0 L763.7 377.1 L764.6 377.1 L764.6 377.3 L765.5 377.3 L765.5 376.5 L766.4 376.5 L766.4 376.8 L767.3 376.8 L767.3 376.1 L768.2 376.1 L768.2 376.1 L769.1 376.1 L769.1 377.0 L770.0 377.0 L770.0 376.4 L770.9 376.4 L770.9 376.7 L771.8 376.7 L771.8 376.9 L772.7 376.9 L772.7 374.8 L773.6 374.8 L773.6 375.6 L774.5 375.6 L774.5 375.4 L775.4 375.4 L775.4 376.0 L776.3 376.0 L776.3 375.0 L777.2 375.0 L777.2 375.2 L778.1 375.2 L778.1 375.2 L779.0 375.2 L779.0 374.8 L779.9 374.8 L779.9 377.1 L780.8 377.1 L780.8 376.9 L781.7 376.9 L781.7 377.0 L782.6 377.0 L782.6 377.2 L783.5 377.2 L783.5 377.0 L784.4 377.0 L784.4 377.2 L785.3 377.2 L785.3 377.7 L786.2 377.7 L786.2 382.0 L785.3 382.0 L785.3 382.3 L784.4 382.3 L784.4 382.3 L783.5 382.3 L783.5 382.5 L782.6 382.5 L782.6 382.9 L781.7 382.9 L781.7 383.1 L780.8 383.1 L780.8 382.2 L779.9 382.2 L779.9 383.9 L779.0 383.9 L779.0 383.8 L778.1 383.8 L778.1 384.1 L777.2 384.1 L777.2 385.0 L776.3 385.0 L776.3 383.8 L775.4 383.8 L775.4 383.6 L774.5 383.6 L774.5 384.3 L773.6 384.3 L773.6 384.1 L772.7 384.1 L772.7 382.5 L771.8 382.5 L771.8 382.9 L770.9 382.9 L770.9 383.6 L770.0 383.6 L770.0 382.3 L769.1 382.3 L769.1 383.6 L768.2 383.6 L768.2 382.9 L767.3 382.9 L767.3 382.9 L766.4 382.9 L766.4 382.8 L765.5 382.8 L765.5 382.4 L764.6 382.4 L764.6 382.9 L763.7 382.9 L763.7 382.7 L762.8 382.7 L762.8 383.8 L761.9 383.8 L761.9 382.4 L761.0 382.4 L761.0 382.5 L760.1 382.5 L760.1 382.0 L759.2 382.0 L759.2 383.2 L758.3 383.2 L758.3 383.2 L757.4 383.2 L757.4 382.7 L756.5 382.7 L756.5 382.8 L755.6 382.8 L755.6 383.7 L754.7 383.7 L754.7 383.9 L753.7 383.9 L753.7 383.7 L752.8 383.7 L752.8 382.8 L751.9 382.8 L751.9 382.1 L751.0 382.1 L751.0 383.6 L750.1 383.6 L750.1 382.9 L749.2 382.9 L749.2 382.0 L748.3 382.0 L748.3 383.3 L747.4 383.3 L747.4 382.0 L746.5 382.0 L746.5 383.7 L745.6 383.7 L745.6 382.5 L744.7 382.5 L744.7 382.1 L743.8 382.1 L743.8 382.0 L742.9 382.0 L742.9 384.0 L742.0 384.0 L742.0 382.2 L741.1 382.2 L741.1 382.7 L740.2 382.7 L740.2 383.7 L739.3 383.7 L739.3 383.6 L738.4 383.6 L738.4 383.3 L737.5 383.3 L737.5 382.5 L736.6 382.5 L736.6 383.6 L735.7 383.6 L735.7 383.4 L734.8 383.4 L734.8 383.3 L733.9 383.3 L733.9 383.5 L733.0 383.5 L733.0 384.1 L732.1 384.1 L732.1 384.6 L731.2 384.6 L731.2 382.8 L730.3 382.8 L730.3 384.0 L729.4 384.0 L729.4 384.0 L728.5 384.0 L728.5 383.0 L727.6 383.0 L727.6 383.9 L726.7 383.9 L726.7 382.5 L725.8 382.5 L725.8 383.5 L724.9 383.5 L724.9 383.8 L724.0 383.8 L724.0 382.9 L723.1 382.9 L723.1 382.7 L722.2 382.7 L722.2 382.7 L721.3 382.7 L721.3 383.9 L720.4 383.9 L720.4 382.4 L719.5 382.4 L719.5 382.1 L718.6 382.1 L718.6 382.9 L717.7 382.9 L717.7 382.7 L716.8 382.7 L716.8 382.6 L715.9 382.6 L715.9 382.3 L715.0 382.3 L715.0 383.1 L714.1 383.1 L714.1 383.4 L713.2 383.4 L713.2 382.5 L712.3 382.5 L712.3 382.0 L711.4 382.0 L711.4 383.3 L710.5 383.3 L710.5 382.5 L709.6 382.5 L709.6 382.0 L708.7 382.0 L708.7 382.0 L707.8 382.0 L707.8 382.0 L706.9 382.0 L706.9 382.0 L706.0 382.0 L706.0 382.1 L705.1 382.1 L705.1 382.0 L704.2 382.0 L704.2 382.0 L703.3 382.0 L703.3 382.0 L702.4 382.0 L702.4 382.0 L701.5 382.0 L701.5 382.0 L700.6 382.0 L700.6 382.0 L699.7 382.0 L699.7 382.0 L698.8 382.0 L698.8 382.0 L697.9 382.0 L697.9 382.0 L697.0 382.0 L697.0 382.0 L696.1 382.0 L696.1 382.0 L695.2 382.0 L695.2 382.0 L694.3 382.0 L694.3 382.0 L693.4 382.0 L693.4 382.0 L692.5 382.0 L692.5 382.0 L691.5 382.0 L691.6 382.0 L690.6 382.0 L690.6 382.0 L689.7 382.0 L689.7 382.0 L688.8 382.0 L688.8 382.0 L687.9 382.0 L687.9 382.0 L687.0 382.0 L687.0 382.0 L686.1 382.0 L686.1 382.0 L685.2 382.0 L685.2 382.0 L684.3 382.0 L684.3 382.0 L683.4 382.0 L683.4 382.0 L682.5 382.0 L682.5 382.0 L681.6 382.0 L681.6 382.0 L680.7 382.0 L680.7 382.0 L679.8 382.0 L679.8 382.0 L678.9 382.0 L678.9 382.0 L678.0 382.0 L678.0 382.0 L677.1 382.0 L677.1 382.0 L676.2 382.0 L676.2 382.0 L675.3 382.0 L675.3 382.0 L674.4 382.0 L674.4 382.0 L673.5 382.0 L673.5 382.0 L672.6 382.0 L672.6 382.0 L671.7 382.0 L671.7 382.0 L670.8 382.0 L670.8 382.0 L669.9 382.0 L669.9 382.0 L669.0 382.0 L669.0 382.0 L668.1 382.0 L668.1 382.0 L667.2 382.0 L667.2 382.0 L666.3 382.0 L666.3 382.0 L665.4 382.0 L665.4 382.0 L664.5 382.0 L664.5 382.0 L663.6 382.0 L663.6 382.0 L662.7 382.0 L662.7 382.0 L661.8 382.0 L661.8 382.0 L660.9 382.0 L660.9 382.0 L660.0 382.0 Z" fill="#e2f1e7" stroke="none" stroke-width="1" />
<path d="M683.6 376.2 L687.6 379.0 L687.6 381.0 L683.6 383.8 Z" fill="#e2f1e7" stroke="none" stroke-width="1" />
<rect x="659.4" y="379.55" width="127" height="0.9" fill="#a9b8ae" />
<rect x="659.4" y="377" width="42" height="0.9" fill="rgba(215,232,220,0.45)" />
<text x="663.1" y="418.7" font-size="12.6" fill="#dbe8df" textLength="116.1" lengthAdjust="spacing">2021-10-06 20-51-...</text>
<rect x="787.4" y="359.3" width="169.9" height="68.7" rx="4.3" fill="#141b16" />
<rect x="788.2" y="360.2" width="168.3" height="66.9" rx="3.6" fill="#54916b" />
<rect x="788.2" y="397.9" width="168.3" height="1.1" fill="rgba(10,25,15,0.42)" />
<path d="M789.2 376.7 L790.1 376.7 L790.1 377.0 L791.0 377.0 L791.0 377.0 L791.9 377.0 L791.9 377.0 L792.8 377.0 L792.8 377.0 L793.7 377.0 L793.7 374.2 L794.6 374.2 L794.6 376.6 L795.5 376.6 L795.5 376.4 L796.4 376.4 L796.4 376.3 L797.3 376.3 L797.3 376.4 L798.2 376.4 L798.2 374.1 L799.1 374.1 L799.1 376.3 L800.0 376.3 L800.0 375.2 L800.9 375.2 L800.9 376.6 L801.8 376.6 L801.8 376.0 L802.7 376.0 L802.7 375.1 L803.6 375.1 L803.6 374.6 L804.5 374.6 L804.5 375.0 L805.4 375.0 L805.4 374.5 L806.3 374.5 L806.3 375.0 L807.2 375.0 L807.2 375.9 L808.1 375.9 L808.1 375.6 L809.0 375.6 L809.0 376.5 L809.9 376.5 L809.9 374.4 L810.8 374.4 L810.8 374.8 L811.7 374.8 L811.7 376.6 L812.6 376.6 L812.6 376.5 L813.5 376.5 L813.5 377.0 L814.4 377.0 L814.4 377.0 L815.3 377.0 L815.3 376.7 L816.2 376.7 L816.2 376.9 L817.2 376.9 L817.2 376.8 L818.1 376.8 L818.1 377.0 L819.0 377.0 L819.0 375.7 L819.9 375.7 L819.9 375.9 L820.8 375.9 L820.8 377.0 L821.7 377.0 L821.7 375.8 L822.6 375.8 L822.6 376.0 L823.5 376.0 L823.5 376.3 L824.4 376.3 L824.4 375.9 L825.3 375.9 L825.3 376.1 L826.2 376.1 L826.2 376.9 L827.1 376.9 L827.1 377.0 L828.0 377.0 L828.0 375.9 L828.9 375.9 L828.9 376.4 L829.8 376.4 L829.8 377.0 L830.7 377.0 L830.7 375.9 L831.6 375.9 L831.6 377.0 L832.5 377.0 L832.5 377.0 L833.4 377.0 L833.4 376.3 L834.3 376.3 L834.3 376.0 L835.2 376.0 L835.2 376.0 L836.1 376.0 L836.1 373.8 L837.0 373.8 L837.0 375.3 L837.9 375.3 L837.9 376.5 L838.8 376.5 L838.8 374.9 L839.7 374.9 L839.7 374.0 L840.6 374.0 L840.6 373.9 L841.5 373.9 L841.5 375.9 L842.4 375.9 L842.4 374.4 L843.3 374.4 L843.3 376.6 L844.2 376.6 L844.2 376.5 L845.1 376.5 L845.1 377.0 L846.0 377.0 L846.0 377.0 L846.9 377.0 L846.9 376.3 L847.8 376.3 L847.8 377.0 L848.7 377.0 L848.7 376.9 L849.6 376.9 L849.6 376.4 L850.5 376.4 L850.5 376.9 L851.4 376.9 L851.4 377.0 L852.3 377.0 L852.3 375.7 L853.2 375.7 L853.2 376.5 L854.1 376.5 L854.1 376.2 L855.0 376.2 L855.0 377.0 L855.9 377.0 L855.9 376.5 L856.8 376.5 L856.8 376.7 L857.7 376.7 L857.7 377.0 L858.6 377.0 L858.6 376.2 L859.5 376.2 L859.5 377.0 L860.4 377.0 L860.4 376.3 L861.3 376.3 L861.3 376.3 L862.2 376.3 L862.2 376.0 L863.1 376.0 L863.1 377.0 L864.0 377.0 L864.0 376.0 L864.9 376.0 L864.9 377.0 L865.8 377.0 L865.8 375.6 L866.7 375.6 L866.7 377.0 L867.6 377.0 L867.6 376.2 L868.5 376.2 L868.5 377.0 L869.4 377.0 L869.4 376.9 L870.3 376.9 L870.3 376.8 L871.2 376.8 L871.2 376.9 L872.1 376.9 L872.1 377.0 L873.1 377.0 L873.1 377.0 L874.0 377.0 L874.0 376.7 L874.9 376.7 L874.9 377.0 L875.8 377.0 L875.8 375.7 L876.7 375.7 L876.7 377.0 L877.6 377.0 L877.6 375.6 L878.5 375.6 L878.5 376.0 L879.4 376.0 L879.4 377.0 L880.3 377.0 L880.3 375.6 L881.2 375.6 L881.2 377.0 L882.1 377.0 L882.1 375.8 L883.0 375.8 L883.0 377.0 L883.9 377.0 L883.9 376.9 L884.8 376.9 L884.8 377.0 L885.7 377.0 L885.7 376.1 L886.6 376.1 L886.6 376.0 L887.5 376.0 L887.5 376.2 L888.4 376.2 L888.4 377.0 L889.3 377.0 L889.3 376.4 L890.2 376.4 L890.2 377.0 L891.1 377.0 L891.1 376.4 L892.0 376.4 L892.0 375.9 L892.9 375.9 L892.9 377.0 L893.8 377.0 L893.8 377.0 L894.7 377.0 L894.7 375.4 L895.6 375.4 L895.6 376.2 L896.5 376.2 L896.5 377.0 L897.4 377.0 L897.4 376.7 L898.3 376.7 L898.3 373.5 L899.2 373.5 L899.2 375.9 L900.1 375.9 L900.1 377.0 L901.0 377.0 L901.0 374.4 L901.9 374.4 L901.9 377.0 L902.8 377.0 L902.8 377.0 L903.7 377.0 L903.7 377.0 L904.6 377.0 L904.6 377.0 L905.5 377.0 L905.5 377.0 L906.4 377.0 L906.4 376.8 L907.3 376.8 L907.3 377.0 L908.2 377.0 L908.2 377.0 L909.1 377.0 L909.1 376.7 L910.0 376.7 L910.0 376.5 L910.9 376.5 L910.9 376.7 L911.8 376.7 L911.8 376.3 L912.7 376.3 L912.7 376.3 L913.6 376.3 L913.6 376.2 L914.5 376.2 L914.5 376.3 L915.4 376.3 L915.4 377.0 L916.3 377.0 L916.3 377.0 L917.2 377.0 L917.2 376.1 L918.1 376.1 L918.1 376.4 L919.0 376.4 L919.0 376.9 L919.9 376.9 L919.9 377.0 L920.8 377.0 L920.8 377.0 L921.7 377.0 L921.7 376.2 L922.6 376.2 L922.6 376.6 L923.5 376.6 L923.5 377.0 L924.4 377.0 L924.4 376.5 L925.3 376.5 L925.3 376.8 L926.2 376.8 L926.2 375.5 L927.1 375.5 L927.1 375.6 L928.0 375.6 L928.0 371.6 L929.0 371.6 L929.0 374.5 L929.9 374.5 L929.9 374.8 L930.8 374.8 L930.8 375.3 L931.7 375.3 L931.7 373.8 L932.6 373.8 L932.6 375.5 L933.5 375.5 L933.5 376.2 L934.4 376.2 L934.4 375.7 L935.3 375.7 L935.3 375.6 L936.2 375.6 L936.2 374.2 L937.1 374.2 L937.1 376.2 L938.0 376.2 L938.0 374.9 L938.9 374.9 L938.9 376.2 L939.8 376.2 L939.8 373.8 L940.7 373.8 L940.7 375.3 L941.6 375.3 L941.6 376.0 L942.5 376.0 L942.5 374.5 L943.4 374.5 L943.4 374.7 L944.3 374.7 L944.3 377.0 L945.2 377.0 L945.2 377.0 L946.1 377.0 L946.1 376.6 L947.0 376.6 L947.0 376.7 L947.9 376.7 L947.9 376.8 L948.8 376.8 L948.8 376.6 L949.7 376.6 L949.7 377.0 L950.6 377.0 L950.6 377.0 L951.5 377.0 L951.5 376.7 L952.4 376.7 L952.4 376.8 L953.3 376.8 L953.3 376.9 L954.2 376.9 L954.2 375.0 L955.1 375.0 L955.1 376.4 L956.0 376.4 L956.0 383.0 L955.1 383.0 L955.1 384.1 L954.2 384.1 L954.2 383.0 L953.3 383.0 L953.3 383.3 L952.4 383.3 L952.4 383.0 L951.5 383.0 L951.5 383.0 L950.6 383.0 L950.6 383.0 L949.7 383.0 L949.7 383.5 L948.8 383.5 L948.8 383.0 L947.9 383.0 L947.9 383.0 L947.0 383.0 L947.0 383.0 L946.1 383.0 L946.1 383.0 L945.2 383.0 L945.2 383.0 L944.3 383.0 L944.3 384.7 L943.4 384.7 L943.4 384.3 L942.5 384.3 L942.5 383.2 L941.6 383.2 L941.6 385.0 L940.7 385.0 L940.7 386.3 L939.8 386.3 L939.8 383.5 L938.9 383.5 L938.9 385.3 L938.0 385.3 L938.0 383.8 L937.1 383.8 L937.1 385.0 L936.2 385.0 L936.2 384.2 L935.3 384.2 L935.3 384.5 L934.4 384.5 L934.4 383.2 L933.5 383.2 L933.5 384.8 L932.6 384.8 L932.6 384.9 L931.7 384.9 L931.7 384.4 L930.8 384.4 L930.8 384.8 L929.9 384.8 L929.9 385.4 L929.0 385.4 L929.0 387.9 L928.0 387.9 L928.0 384.5 L927.1 384.5 L927.1 384.4 L926.2 384.4 L926.2 383.3 L925.3 383.3 L925.3 383.0 L924.4 383.0 L924.4 383.0 L923.5 383.0 L923.5 383.4 L922.6 383.4 L922.6 383.2 L921.7 383.2 L921.7 383.0 L920.8 383.0 L920.8 383.0 L919.9 383.0 L919.9 383.0 L919.0 383.0 L919.0 383.5 L918.1 383.5 L918.1 383.0 L917.2 383.0 L917.2 383.0 L916.3 383.0 L916.3 383.0 L915.4 383.0 L915.4 383.4 L914.5 383.4 L914.5 383.0 L913.6 383.0 L913.6 383.3 L912.7 383.3 L912.7 383.2 L911.8 383.2 L911.8 383.0 L910.9 383.0 L910.9 383.1 L910.0 383.1 L910.0 383.0 L909.1 383.0 L909.1 383.0 L908.2 383.0 L908.2 383.0 L907.3 383.0 L907.3 383.0 L906.4 383.0 L906.4 383.1 L905.5 383.1 L905.5 383.1 L904.6 383.1 L904.6 383.0 L903.7 383.0 L903.7 383.0 L902.8 383.0 L902.8 383.0 L901.9 383.0 L901.9 384.6 L901.0 384.6 L901.0 383.2 L900.1 383.2 L900.1 383.7 L899.2 383.7 L899.2 385.3 L898.3 385.3 L898.3 383.0 L897.4 383.0 L897.4 383.0 L896.5 383.0 L896.5 383.9 L895.6 383.9 L895.6 384.4 L894.7 384.4 L894.7 383.0 L893.8 383.0 L893.8 383.1 L892.9 383.1 L892.9 383.7 L892.0 383.7 L892.0 383.4 L891.1 383.4 L891.1 383.1 L890.2 383.1 L890.2 383.0 L889.3 383.0 L889.3 383.1 L888.4 383.1 L888.4 383.0 L887.5 383.0 L887.5 384.1 L886.6 384.1 L886.6 383.8 L885.7 383.8 L885.7 383.0 L884.8 383.0 L884.8 383.0 L883.9 383.0 L883.9 383.0 L883.0 383.0 L883.0 383.8 L882.1 383.8 L882.1 383.0 L881.2 383.0 L881.2 384.4 L880.3 384.4 L880.3 383.0 L879.4 383.0 L879.4 383.3 L878.5 383.3 L878.5 383.5 L877.6 383.5 L877.6 383.0 L876.7 383.0 L876.7 383.7 L875.8 383.7 L875.8 383.0 L874.9 383.0 L874.9 383.0 L874.0 383.0 L874.0 383.0 L873.1 383.0 L873.1 383.0 L872.1 383.0 L872.1 383.0 L871.2 383.0 L871.2 383.1 L870.3 383.1 L870.3 383.2 L869.4 383.2 L869.4 383.1 L868.5 383.1 L868.5 383.7 L867.6 383.7 L867.6 383.0 L866.7 383.0 L866.7 383.9 L865.8 383.9 L865.8 383.0 L864.9 383.0 L864.9 384.1 L864.0 384.1 L864.0 383.0 L863.1 383.0 L863.1 383.9 L862.2 383.9 L862.2 383.7 L861.3 383.7 L861.3 383.3 L860.4 383.3 L860.4 383.0 L859.5 383.0 L859.5 383.3 L858.6 383.3 L858.6 383.0 L857.7 383.0 L857.7 383.0 L856.8 383.0 L856.8 383.0 L855.9 383.0 L855.9 383.0 L855.0 383.0 L855.0 383.9 L854.1 383.9 L854.1 383.7 L853.2 383.7 L853.2 383.7 L852.3 383.7 L852.3 383.1 L851.4 383.1 L851.4 383.0 L850.5 383.0 L850.5 383.0 L849.6 383.0 L849.6 383.0 L848.7 383.0 L848.7 383.1 L847.8 383.1 L847.8 383.4 L846.9 383.4 L846.9 383.0 L846.0 383.0 L846.0 383.0 L845.1 383.0 L845.1 383.0 L844.2 383.0 L844.2 383.0 L843.3 383.0 L843.3 384.8 L842.4 384.8 L842.4 383.2 L841.5 383.2 L841.5 385.9 L840.6 385.9 L840.6 386.2 L839.7 386.2 L839.7 384.7 L838.8 384.7 L838.8 383.0 L837.9 383.0 L837.9 384.5 L837.0 384.5 L837.0 385.1 L836.1 385.1 L836.1 383.4 L835.2 383.4 L835.2 383.3 L834.3 383.3 L834.3 383.4 L833.4 383.4 L833.4 383.1 L832.5 383.1 L832.5 383.0 L831.6 383.0 L831.6 384.2 L830.7 384.2 L830.7 383.0 L829.8 383.0 L829.8 383.9 L828.9 383.9 L828.9 384.3 L828.0 384.3 L828.0 383.2 L827.1 383.2 L827.1 383.0 L826.2 383.0 L826.2 383.7 L825.3 383.7 L825.3 384.4 L824.4 384.4 L824.4 383.0 L823.5 383.0 L823.5 383.1 L822.6 383.1 L822.6 383.7 L821.7 383.7 L821.7 383.0 L820.8 383.0 L820.8 383.3 L819.9 383.3 L819.9 383.4 L819.0 383.4 L819.0 383.0 L818.1 383.0 L818.1 383.0 L817.2 383.0 L817.2 383.0 L816.2 383.0 L816.2 383.3 L815.3 383.3 L815.3 383.0 L814.4 383.0 L814.4 383.0 L813.5 383.0 L813.5 383.0 L812.6 383.0 L812.6 383.4 L811.7 383.4 L811.7 385.0 L810.8 385.0 L810.8 385.2 L809.9 385.2 L809.9 383.3 L809.0 383.3 L809.0 384.3 L808.1 384.3 L808.1 383.5 L807.2 383.5 L807.2 384.0 L806.3 384.0 L806.3 385.7 L805.4 385.7 L805.4 385.1 L804.5 385.1 L804.5 385.8 L803.6 385.8 L803.6 384.6 L802.7 384.6 L802.7 383.4 L801.8 383.4 L801.8 383.0 L800.9 383.0 L800.9 384.6 L800.0 384.6 L800.0 383.1 L799.1 383.1 L799.1 384.8 L798.2 384.8 L798.2 383.1 L797.3 383.1 L797.3 383.8 L796.4 383.8 L796.4 383.0 L795.5 383.0 L795.5 383.5 L794.6 383.5 L794.6 385.9 L793.7 385.9 L793.7 383.0 L792.8 383.0 L792.8 383.0 L791.9 383.0 L791.9 383.0 L791.0 383.0 L791.0 383.0 L790.1 383.0 L790.1 383.2 L789.2 383.2 Z" fill="#e2f1e7" stroke="none" stroke-width="1" />
<rect x="788.8" y="379.55" width="167.2" height="0.9" fill="#a9b8ae" />
<text x="792.5" y="418.7" font-size="12.6" fill="#dbe8df" textLength="150.3" lengthAdjust="spacing">2021-10-06 20-51-21.mp4</text>
<rect x="957.4" y="359.3" width="25.6" height="68.7" rx="4.3" fill="#141b16" />
<rect x="958.2" y="360.2" width="24" height="66.9" rx="3.6" fill="#54916b" />
<rect x="958.2" y="397.9" width="24" height="1.1" fill="rgba(10,25,15,0.42)" />
<path d="M959.2 376.4 L960.1 376.4 L960.1 376.4 L961.0 376.4 L961.0 376.4 L961.9 376.4 L961.9 376.4 L962.8 376.4 L962.8 376.4 L963.7 376.4 L963.7 376.4 L964.6 376.4 L964.6 376.4 L965.5 376.4 L965.5 376.4 L966.4 376.4 L966.4 376.4 L967.3 376.4 L967.3 376.4 L968.2 376.4 L968.2 376.4 L969.1 376.4 L969.1 376.4 L970.0 376.4 L970.0 376.4 L971.0 376.4 L971.0 376.4 L971.9 376.4 L971.9 376.4 L972.8 376.4 L972.8 376.4 L973.7 376.4 L973.7 376.4 L974.6 376.4 L974.6 376.0 L975.5 376.0 L975.5 376.1 L976.4 376.1 L976.4 376.3 L977.3 376.3 L977.3 376.4 L978.2 376.4 L978.2 376.4 L979.1 376.4 L979.1 374.2 L980.0 374.2 L980.0 375.2 L980.9 375.2 L980.9 375.2 L981.8 375.2 L981.8 384.5 L980.9 384.5 L980.9 384.7 L980.0 384.7 L980.0 384.6 L979.1 384.6 L979.1 383.6 L978.2 383.6 L978.2 383.6 L977.3 383.6 L977.3 383.6 L976.4 383.6 L976.4 384.0 L975.5 384.0 L975.5 384.2 L974.6 384.2 L974.6 383.6 L973.7 383.6 L973.7 383.6 L972.8 383.6 L972.8 383.6 L971.9 383.6 L971.9 383.6 L971.0 383.6 L971.0 383.8 L970.0 383.8 L970.0 383.6 L969.1 383.6 L969.1 383.7 L968.2 383.7 L968.2 383.7 L967.3 383.7 L967.3 383.8 L966.4 383.8 L966.4 383.6 L965.5 383.6 L965.5 383.7 L964.6 383.7 L964.6 383.6 L963.7 383.6 L963.7 383.6 L962.8 383.6 L962.8 383.6 L961.9 383.6 L961.9 383.6 L961.0 383.6 L961.0 383.6 L960.1 383.6 L960.1 383.6 L959.2 383.6 Z" fill="#e2f1e7" stroke="none" stroke-width="1" />
<rect x="958.8" y="379.55" width="23" height="0.9" fill="#a9b8ae" />
<rect x="1148.9" y="359.3" width="46" height="68.7" rx="4.3" fill="#141b16" />
<rect x="1149.7" y="360.2" width="44.4" height="66.9" rx="3.6" fill="#54916b" />
<rect x="1149.7" y="397.9" width="44.4" height="1.1" fill="rgba(10,25,15,0.42)" />
<path d="M1151.0 373.8 L1151.5 373.4 L1152.0 374.1 L1152.5 373.7 L1153.0 373.3 L1153.5 373.3 L1154.0 371.8 L1154.5 370.6 L1155.0 369.3 L1155.5 369.5 L1156.0 368.1 L1156.5 365.7 L1157.0 364.9 L1157.5 364.5 L1158.0 362.6 L1158.5 364.7 L1159.0 365.5 L1159.5 366.5 L1160.0 368.0 L1160.5 369.3 L1161.0 369.9 L1161.5 370.7 L1162.0 370.1 L1162.5 368.4 L1163.0 366.7 L1163.5 369.4 L1164.0 370.2 L1164.5 371.6 L1165.0 371.8 L1165.5 373.4 L1166.0 373.5 L1166.5 372.7 L1167.0 370.7 L1167.5 369.6 L1168.0 371.2 L1168.5 370.2 L1169.0 370.0 L1169.5 368.6 L1170.0 366.5 L1170.5 366.5 L1171.0 365.5 L1171.5 364.5 L1172.0 362.4 L1172.5 361.0 L1173.0 363.4 L1173.5 363.8 L1174.0 365.1 L1174.5 366.4 L1175.0 367.7 L1175.5 368.6 L1176.0 370.1 L1176.5 369.5 L1177.0 369.5 L1177.5 370.1 L1178.0 371.1 L1178.5 372.2 L1179.0 373.4 L1179.5 372.2 L1180.0 370.4 L1180.5 370.4 L1181.0 369.2 L1181.5 367.9 L1182.0 366.1 L1182.5 365.4 L1183.0 364.3 L1183.5 363.7 L1184.0 364.7 L1184.5 365.1 L1185.0 366.9 L1185.5 367.7 L1186.0 369.2 L1186.5 370.2 L1187.0 370.8 L1187.5 368.5 L1188.0 367.8 L1188.5 369.2 L1189.0 370.7 L1189.5 370.9 L1190.0 372.5 L1190.5 373.9 L1191.0 372.7 L1191.5 370.3 L1192.0 372.4 L1192.5 373.4 L1193.0 374.6 L1193.0 385.1 L1192.5 386.2 L1192.0 387.2 L1191.5 389.2 L1191.0 387.0 L1190.5 385.8 L1190.0 387.1 L1189.5 388.6 L1189.0 388.8 L1188.5 390.3 L1188.0 391.6 L1187.5 390.9 L1187.0 388.7 L1186.5 389.3 L1186.0 390.3 L1185.5 391.7 L1185.0 392.5 L1184.5 394.2 L1184.0 394.5 L1183.5 395.5 L1183.0 394.9 L1182.5 393.8 L1182.0 393.2 L1181.5 391.5 L1181.0 390.2 L1180.5 389.1 L1180.0 389.2 L1179.5 387.4 L1179.0 386.3 L1178.5 387.4 L1178.0 388.5 L1177.5 389.4 L1177.0 390.0 L1176.5 390.0 L1176.0 389.4 L1175.5 390.8 L1175.0 391.7 L1174.5 392.9 L1174.0 394.1 L1173.5 395.4 L1173.0 395.8 L1172.5 397.6 L1172.0 396.7 L1171.5 394.7 L1171.0 393.8 L1170.5 392.8 L1170.0 392.8 L1169.5 390.8 L1169.0 389.5 L1168.5 389.3 L1168.0 388.3 L1167.5 389.9 L1167.0 388.8 L1166.5 386.9 L1166.0 386.1 L1165.5 386.3 L1165.0 387.8 L1164.5 388.0 L1164.0 389.4 L1163.5 390.1 L1163.0 392.6 L1162.5 391.0 L1162.0 389.4 L1161.5 388.8 L1161.0 389.6 L1160.5 390.1 L1160.0 391.4 L1159.5 392.8 L1159.0 393.8 L1158.5 394.6 L1158.0 396.5 L1157.5 394.7 L1157.0 394.3 L1156.5 393.6 L1156.0 391.3 L1155.5 390.0 L1155.0 390.1 L1154.5 388.9 L1154.0 387.8 L1153.5 386.4 L1153.0 386.4 L1152.5 386.0 L1152.0 385.6 L1151.5 386.3 L1151.0 385.9 Z" fill="#e2f1e7" stroke="none" stroke-width="1" />
<rect x="1150.4" y="379.55" width="43.2" height="0.9" fill="#8f9f94" />
<path d="M1149.7 363 Q1149.7 360.2 1152.5 360.2 H1155.6 L1150.6 396 H1149.7 Z" fill="rgba(8,28,16,0.5)" stroke="none" stroke-width="1" />
<path d="M1194.1 363 Q1194.1 360.2 1191.3 360.2 H1188.4 L1193.2 396 H1194.1 Z" fill="rgba(8,28,16,0.5)" stroke="none" stroke-width="1" />
<text x="1153.8" y="418.7" font-size="12.6" fill="#dbe8df" textLength="31.8" lengthAdjust="spacing">202...</text>
<rect x="1382" y="359.3" width="49.1" height="68.7" rx="4.3" fill="#141b16" />
<rect x="1382.8" y="360.2" width="47.5" height="66.9" rx="3.6" fill="#446b50" />
<rect x="1382.8" y="397.9" width="47.5" height="1.1" fill="rgba(10,25,15,0.42)" />
<path d="M1386.0 378.4 L1386.9 378.4 L1386.9 378.4 L1387.8 378.4 L1387.8 378.4 L1388.7 378.4 L1388.7 378.4 L1389.6 378.4 L1389.7 378.4 L1390.6 378.4 L1390.6 378.4 L1391.5 378.4 L1391.5 378.4 L1392.4 378.4 L1392.4 378.4 L1393.3 378.4 L1393.3 378.4 L1394.2 378.4 L1394.2 378.4 L1395.1 378.4 L1395.1 378.4 L1396.0 378.4 L1396.0 378.4 L1396.9 378.4 L1397.0 378.4 L1397.9 378.4 L1397.9 378.4 L1398.8 378.4 L1398.8 378.4 L1399.7 378.4 L1399.7 378.4 L1400.6 378.4 L1400.6 378.4 L1401.5 378.4 L1401.5 378.4 L1402.4 378.4 L1402.4 378.4 L1403.3 378.4 L1403.3 378.4 L1404.2 378.4 L1404.2 377.3 L1405.2 377.3 L1405.2 378.2 L1406.1 378.2 L1406.1 377.6 L1407.0 377.6 L1407.0 378.1 L1407.9 378.1 L1407.9 378.1 L1408.8 378.1 L1408.8 377.3 L1409.7 377.3 L1409.7 377.7 L1410.6 377.7 L1410.6 377.7 L1411.5 377.7 L1411.5 377.7 L1412.5 377.7 L1412.5 378.0 L1413.4 378.0 L1413.4 376.9 L1414.3 376.9 L1414.3 377.6 L1415.2 377.6 L1415.2 377.0 L1416.1 377.0 L1416.1 377.1 L1417.0 377.1 L1417.0 377.4 L1417.9 377.4 L1417.9 377.9 L1418.8 377.9 L1418.8 377.0 L1419.8 377.0 L1419.8 378.2 L1420.7 378.2 L1420.7 378.0 L1421.6 378.0 L1421.6 377.6 L1422.5 377.6 L1422.5 377.0 L1423.4 377.0 L1423.4 377.9 L1424.3 377.9 L1424.3 377.4 L1425.2 377.4 L1425.2 378.1 L1426.1 378.1 L1426.1 377.1 L1427.1 377.1 L1427.1 377.7 L1428.0 377.7 L1428.0 377.4 L1428.9 377.4 L1428.9 377.8 L1429.8 377.8 L1429.8 381.7 L1428.9 381.7 L1428.9 382.4 L1428.0 382.4 L1428.0 381.8 L1427.1 381.8 L1427.1 382.4 L1426.1 382.4 L1426.1 381.7 L1425.2 381.7 L1425.2 382.5 L1424.3 382.5 L1424.3 382.2 L1423.4 382.2 L1423.4 382.7 L1422.5 382.7 L1422.5 382.4 L1421.6 382.4 L1421.6 382.0 L1420.7 382.0 L1420.7 381.7 L1419.8 381.7 L1419.8 382.4 L1418.8 382.4 L1418.8 382.0 L1417.9 382.0 L1417.9 382.3 L1417.0 382.3 L1417.0 382.4 L1416.1 382.4 L1416.1 382.7 L1415.2 382.7 L1415.2 382.1 L1414.3 382.1 L1414.3 382.5 L1413.4 382.5 L1413.4 381.9 L1412.5 381.9 L1412.5 382.1 L1411.5 382.1 L1411.5 382.1 L1410.6 382.1 L1410.6 382.3 L1409.7 382.3 L1409.7 382.6 L1408.8 382.6 L1408.8 381.6 L1407.9 381.6 L1407.9 382.0 L1407.0 382.0 L1407.0 381.9 L1406.1 381.9 L1406.1 381.8 L1405.2 381.8 L1405.2 382.5 L1404.2 382.5 L1404.2 381.6 L1403.3 381.6 L1403.3 381.7 L1402.4 381.7 L1402.4 381.6 L1401.5 381.6 L1401.5 381.6 L1400.6 381.6 L1400.6 381.6 L1399.7 381.6 L1399.7 381.6 L1398.8 381.6 L1398.8 381.6 L1397.9 381.6 L1397.9 381.6 L1397.0 381.6 L1396.9 381.6 L1396.0 381.6 L1396.0 381.6 L1395.1 381.6 L1395.1 381.7 L1394.2 381.7 L1394.2 381.6 L1393.3 381.6 L1393.3 381.6 L1392.4 381.6 L1392.4 381.6 L1391.5 381.6 L1391.5 381.6 L1390.6 381.6 L1390.6 381.6 L1389.7 381.6 L1389.6 381.6 L1388.7 381.6 L1388.7 381.6 L1387.8 381.6 L1387.8 381.7 L1386.9 381.7 L1386.9 381.6 L1386.0 381.6 Z" fill="#e2f1e7" stroke="none" stroke-width="1" />
<rect x="1383.4" y="379.55" width="46.4" height="0.9" fill="#a9b8ae" />
<path d="M1412.2 360.2 H1385.8 Q1382.8 360.2 1382.8 363.2 V396.4 Z" fill="rgba(6,24,13,0.64)" stroke="none" stroke-width="1" />
<text x="1385.9" y="418.7" font-size="12.6" fill="#dbe8df" textLength="38.6" lengthAdjust="spacing">2021...</text>
<rect x="1430.6" y="360.2" width="1.4" height="66.9" fill="#0a0d0b" />
<line x1="1431.8" y1="362.2" x2="1431.8" y2="426.1" stroke="#c9d6cd" stroke-width="1" stroke-dasharray="4.2 3.4" opacity="0.85"/>
<rect x="1431.6" y="359.3" width="17.4" height="68.7" rx="4.3" fill="#141b16" />
<rect x="1432.4" y="360.2" width="15.8" height="66.9" rx="3.6" fill="#446b50" />
<rect x="1432.4" y="397.9" width="15.8" height="1.1" fill="rgba(10,25,15,0.42)" />
<path d="M1433.0 376.4 L1433.9 376.4 L1433.9 376.4 L1434.8 376.4 L1434.8 376.4 L1435.8 376.4 L1435.8 376.4 L1436.7 376.4 L1436.7 376.4 L1437.6 376.4 L1437.6 376.4 L1438.5 376.4 L1438.5 376.4 L1439.5 376.4 L1439.5 376.4 L1440.4 376.4 L1440.4 376.4 L1441.3 376.4 L1441.3 376.4 L1442.2 376.4 L1442.2 376.4 L1443.2 376.4 L1443.2 376.4 L1444.1 376.4 L1444.1 376.4 L1445.0 376.4 L1445.0 375.7 L1445.9 375.7 L1446.0 376.3 L1446.9 376.3 L1446.9 376.2 L1447.8 376.2 L1447.8 382.4 L1446.9 382.4 L1446.9 382.4 L1446.0 382.4 L1445.9 382.8 L1445.0 382.8 L1445.0 382.4 L1444.1 382.4 L1444.1 382.4 L1443.2 382.4 L1443.2 382.4 L1442.2 382.4 L1442.2 382.4 L1441.3 382.4 L1441.3 382.4 L1440.4 382.4 L1440.4 382.4 L1439.5 382.4 L1439.5 382.4 L1438.5 382.4 L1438.5 382.4 L1437.6 382.4 L1437.6 382.4 L1436.7 382.4 L1436.7 382.5 L1435.8 382.5 L1435.8 382.4 L1434.8 382.4 L1434.8 382.4 L1433.9 382.4 L1433.9 382.5 L1433.0 382.5 Z" fill="#e2f1e7" stroke="none" stroke-width="1" />
<rect x="1432.8" y="379.55" width="15" height="0.9" fill="#a9b8ae" />
<rect x="1448.7" y="360.2" width="1.4" height="66.9" fill="#0a0d0b" />
<line x1="1449.9" y1="362.2" x2="1449.9" y2="426.1" stroke="#c9d6cd" stroke-width="1" stroke-dasharray="4.2 3.4" opacity="0.85"/>
<rect x="1449.9" y="359.3" width="55" height="68.7" rx="4.3" fill="#141b16" />
<rect x="1450.7" y="360.2" width="53.4" height="66.9" rx="3.6" fill="#446b50" />
<rect x="1450.7" y="397.9" width="53.4" height="1.1" fill="rgba(10,25,15,0.42)" />
<path d="M1451.6 361.1 L1452.1 361.3 L1452.6 361.2 L1453.1 361.2 L1453.6 361.5 L1454.1 361.1 L1454.6 361.3 L1455.1 361.3 L1455.6 360.9 L1456.1 361.3 L1456.6 361.1 L1457.1 361.4 L1457.6 361.0 L1458.1 361.1 L1458.6 361.2 L1459.1 361.1 L1459.6 361.3 L1460.1 361.9 L1460.6 361.1 L1461.1 361.0 L1461.6 361.3 L1462.1 361.1 L1462.6 361.6 L1463.1 361.2 L1463.6 361.0 L1464.1 361.8 L1464.6 361.1 L1465.1 361.3 L1465.6 361.3 L1466.1 361.2 L1466.6 361.2 L1467.1 361.1 L1467.6 360.9 L1468.1 361.0 L1468.6 360.9 L1469.1 361.0 L1469.6 361.3 L1470.1 362.3 L1470.6 361.2 L1471.1 361.3 L1471.6 361.0 L1472.1 361.2 L1472.6 361.4 L1473.1 361.2 L1473.6 361.2 L1474.1 361.0 L1474.6 362.3 L1475.1 361.1 L1475.6 361.2 L1476.1 361.0 L1476.6 361.2 L1477.1 360.9 L1477.6 362.3 L1478.1 361.2 L1478.6 361.1 L1479.1 361.0 L1479.6 361.1 L1480.1 361.2 L1480.6 361.3 L1481.1 360.9 L1481.6 361.0 L1482.1 361.3 L1482.6 361.1 L1483.1 360.9 L1483.6 361.2 L1484.1 361.2 L1484.6 360.9 L1485.1 361.3 L1485.6 361.0 L1486.1 361.3 L1486.6 361.8 L1487.1 361.1 L1487.6 361.6 L1488.1 361.2 L1488.6 362.1 L1489.1 361.0 L1489.6 362.5 L1490.1 361.6 L1490.6 361.2 L1491.1 361.2 L1491.6 361.1 L1492.1 361.1 L1492.6 360.9 L1493.1 361.2 L1493.6 361.2 L1494.1 361.0 L1494.6 361.0 L1495.1 361.3 L1495.6 362.1 L1496.1 361.1 L1496.6 361.2 L1497.1 360.9 L1497.6 360.9 L1498.1 361.2 L1498.6 361.3 L1499.1 361.9 L1499.6 361.0 L1500.1 361.3 L1500.6 361.0 L1501.1 361.3 L1501.6 361.2 L1502.1 361.3 L1502.6 361.1 L1503.1 361.0 L1503.1 397.2 L1502.6 397.6 L1502.1 397.6 L1501.6 397.6 L1501.1 397.6 L1500.6 397.9 L1500.1 397.7 L1499.6 397.8 L1499.1 397.5 L1498.6 397.6 L1498.1 397.5 L1497.6 397.5 L1497.1 397.6 L1496.6 397.8 L1496.1 397.7 L1495.6 397.8 L1495.1 397.8 L1494.6 397.6 L1494.1 397.9 L1493.6 397.3 L1493.1 397.1 L1492.6 396.4 L1492.1 397.4 L1491.6 397.3 L1491.1 397.2 L1490.6 397.6 L1490.1 397.9 L1489.6 397.5 L1489.1 397.7 L1488.6 396.8 L1488.1 397.8 L1487.6 397.6 L1487.1 397.7 L1486.6 397.7 L1486.1 397.7 L1485.6 396.9 L1485.1 397.7 L1484.6 397.5 L1484.1 396.4 L1483.6 397.8 L1483.1 397.6 L1482.6 397.6 L1482.1 397.0 L1481.6 396.5 L1481.1 397.6 L1480.6 397.7 L1480.1 397.7 L1479.6 397.7 L1479.1 397.8 L1478.6 396.9 L1478.1 396.4 L1477.6 397.8 L1477.1 396.9 L1476.6 397.8 L1476.1 397.7 L1475.6 397.7 L1475.1 397.7 L1474.6 397.6 L1474.1 397.7 L1473.6 397.4 L1473.1 396.9 L1472.6 397.6 L1472.1 397.6 L1471.6 397.7 L1471.1 397.5 L1470.6 397.7 L1470.1 397.5 L1469.6 397.9 L1469.1 397.6 L1468.6 397.1 L1468.1 397.8 L1467.6 396.4 L1467.1 397.8 L1466.6 397.5 L1466.1 397.6 L1465.6 397.2 L1465.1 397.6 L1464.6 397.6 L1464.1 397.8 L1463.6 397.8 L1463.1 397.6 L1462.6 397.5 L1462.1 397.8 L1461.6 397.7 L1461.1 397.6 L1460.6 397.8 L1460.1 396.9 L1459.6 397.7 L1459.1 397.8 L1458.6 397.6 L1458.1 397.6 L1457.6 396.7 L1457.1 397.0 L1456.6 397.8 L1456.1 397.2 L1455.6 397.7 L1455.1 397.7 L1454.6 397.8 L1454.1 397.7 L1453.6 396.9 L1453.1 397.8 L1452.6 396.8 L1452.1 397.6 L1451.6 396.3 Z" fill="#e2f1e7" stroke="none" stroke-width="1" />
<rect x="1451.2" y="379.55" width="52.4" height="0.9" fill="#8f9f94" />
<rect x="1451.2" y="372.6" width="52.4" height="0.8" fill="rgba(255,255,255,0.35)" />
<path d="M1498.2 360.2 H1501.3 Q1504.1 360.2 1504.1 363 V397.6 Z" fill="rgba(40,60,48,0.55)" stroke="none" stroke-width="1" />
<text x="1454" y="418.7" font-size="12.6" fill="#dbe8df" textLength="43" lengthAdjust="spacing">2021-...</text>
</g>
<g id="hscroll">
<rect x="270.5" y="537.6" width="1302.5" height="5.4" fill="#29292e" />
<rect x="270.5" y="537.3" width="650" height="2.2" fill="#08080a" />
<path d="M271.3 542.8 V540.4 Q271.3 539.5 272.4 539.5 H915.4 Q916.4 539.5 916.9 540.4 L918.2 542.8 Z" fill="#565a61" stroke="none" stroke-width="1" />
</g>
<g id="playhead">
<rect x="272.9" y="140" width="4.5" height="397.6" fill="rgba(8,8,10,0.7)" />
<rect x="273.9" y="135" width="2.5" height="402.6" fill="#cf523d" />
<path d="M266.2 128.2 H283.8 V134.6 Q283.8 136.4 282.4 137.4 L276.4 142 Q275.15 142.8 273.9 142 L267.6 137.4 Q266.2 136.4 266.2 134.6 Z" fill="#dd5440" stroke="none" stroke-width="1" />
</g>
<rect x="1573" y="0" width="1" height="544" fill="#ffffff" />
<rect x="0" y="542.6" width="1574" height="1.4" fill="#ffffff" />
<rect x="0" y="0" width="1574" height="0.8" fill="#ffffff" />
<rect x="0" y="0" width="2" height="544" fill="#ffffff" />
</svg>
</body>
</html>
